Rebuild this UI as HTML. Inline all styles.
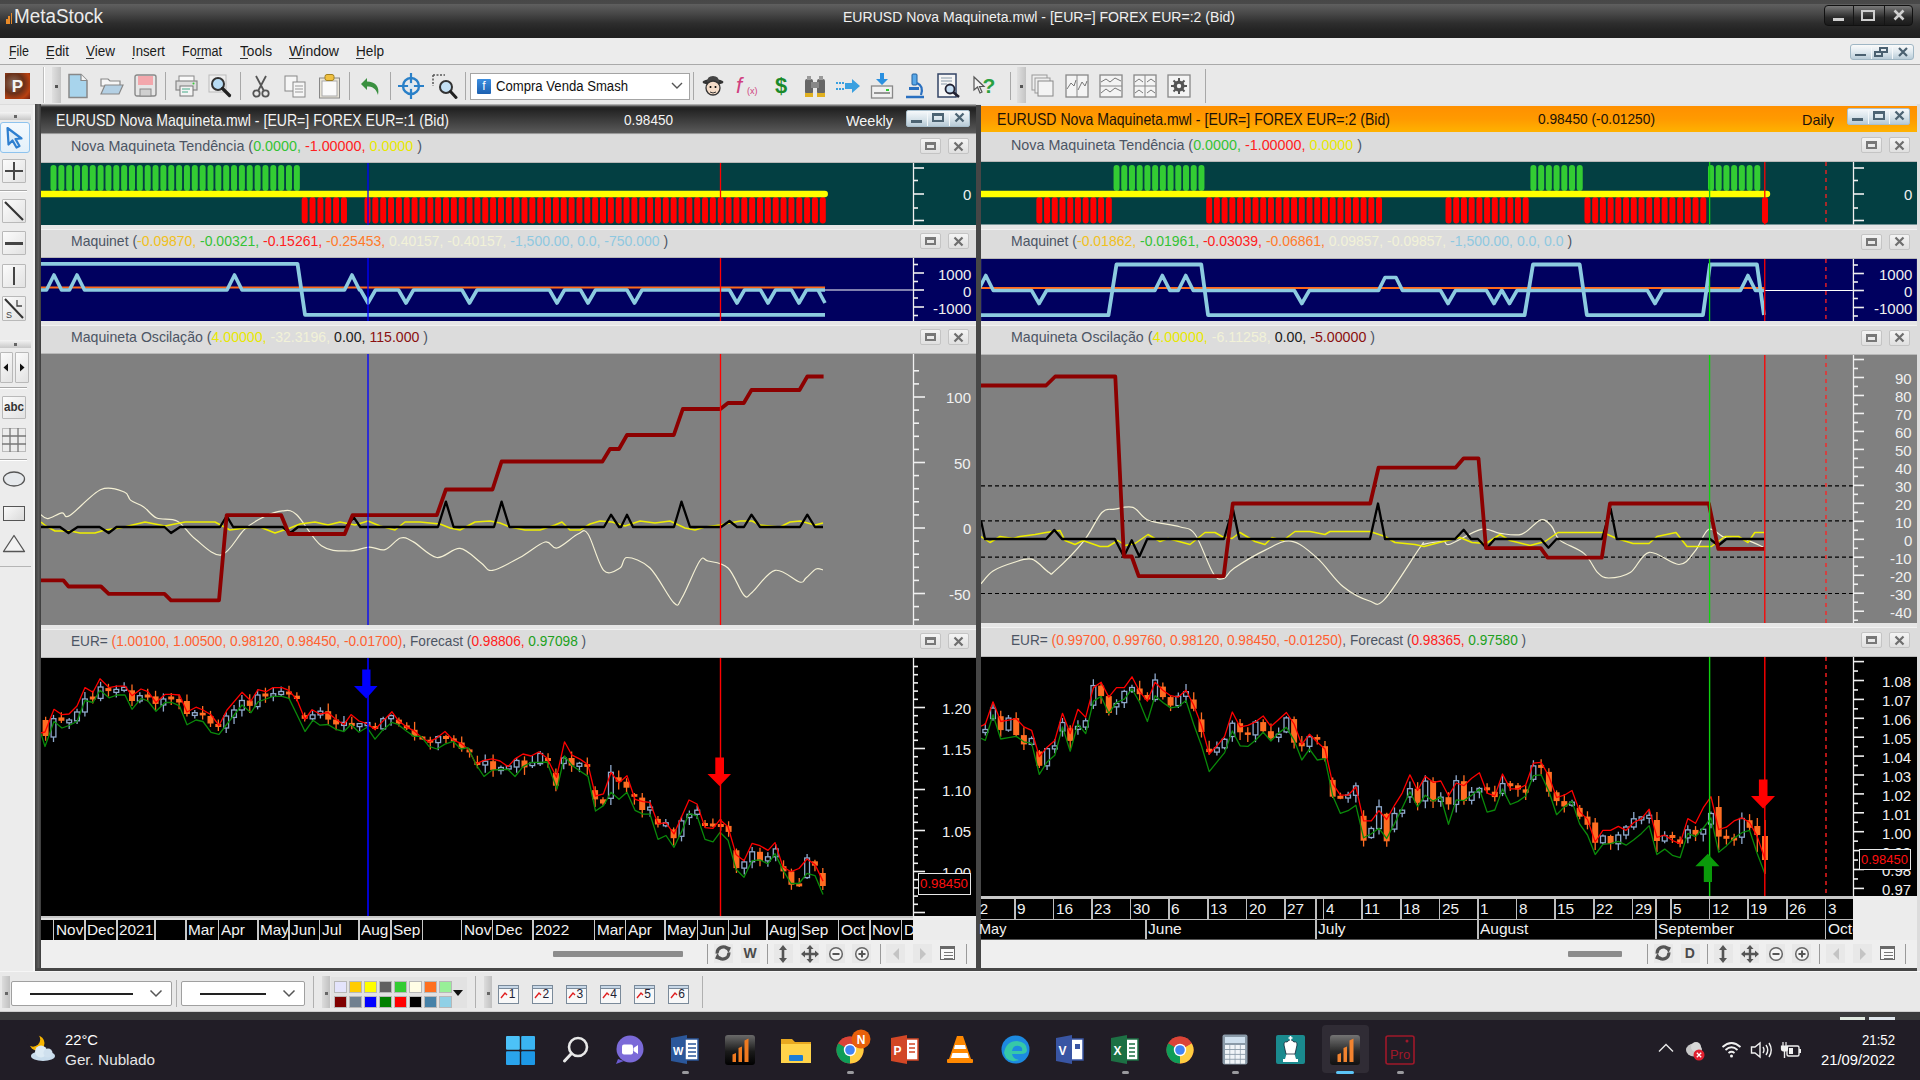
<!DOCTYPE html><html><head><meta charset="utf-8"><title>MetaStock</title><style>
html,body{margin:0;padding:0;}
body{width:1920px;height:1080px;overflow:hidden;position:relative;background:#e9e9e9;font-family:"Liberation Sans",sans-serif;}
.t{position:absolute;white-space:nowrap;}
.r{position:absolute;}
svg{position:absolute;overflow:hidden;}
.ic{position:absolute;}
</style></head><body>
<div class="r" style="left:0.00px;top:0.00px;width:1920.00px;height:38.00px;background:linear-gradient(#474747 0px,#494949 3.5px,#5e5e5e 4.5px,#4c4c4c 12px,#2e2e2e 23px,#242424 30px,#202020 38px);"></div>
<div class="r" style="left:6.00px;top:19.20px;width:1.50px;height:4.50px;background:#e88a28;"></div>
<div class="r" style="left:8.30px;top:16.20px;width:1.50px;height:7.50px;background:#e88a28;"></div>
<div class="r" style="left:10.60px;top:13.20px;width:1.50px;height:10.50px;background:#e88a28;"></div>
<div class="t" style="left:13.50px;top:5.10px;font-size:20.00px;line-height:23.00px;color:#ececec;transform:scaleX(0.9420);transform-origin:0 0;"><span style="color:#ececec">MetaStock</span></div>
<div class="t" style="left:843.00px;top:8.09px;font-size:15.50px;line-height:17.82px;color:#f0f0f0;transform:scaleX(0.9066);transform-origin:0 0;"><span style="color:#f0f0f0">EURUSD Nova Maquineta.mwl - [EUR=] FOREX EUR=:2 (Bid)</span></div>
<div class="r" style="left:1824.00px;top:5.00px;width:89.00px;height:21.00px;background:linear-gradient(#7a7a7a,#2a2a2a 60%,#1a1a1a);border:1px solid #111;border-radius:4px;box-sizing:border-box;"></div>
<div class="r" style="left:1853.00px;top:6.00px;width:1.00px;height:19.00px;background:#151515;"></div>
<div class="r" style="left:1884.00px;top:6.00px;width:1.00px;height:19.00px;background:#151515;"></div>
<div class="r" style="left:1833.00px;top:18.00px;width:11.00px;height:3.00px;background:#cfcfcf;"></div>
<div class="r" style="left:1861.00px;top:10.00px;width:14.00px;height:11.00px;background:transparent;border:2.5px solid #cfcfcf;box-sizing:border-box;"></div>
<svg style="left:1893px;top:9px" width="12" height="12" viewBox="0 0 12 12"><path d="M1.5 1.5L10.5 10.5M10.5 1.5L1.5 10.5" stroke="#d0d0d0" stroke-width="2.6"/></svg>
<div class="r" style="left:0.00px;top:38.00px;width:1920.00px;height:26.00px;background:#ececec;"></div>
<div class="r" style="left:0.00px;top:64.00px;width:1920.00px;height:1.00px;background:#a9a9a9;"></div>
<div class="t" style="left:9.00px;top:42.95px;font-size:14.00px;line-height:16.10px;color:#1a1a1a;transform:scaleX(0.8865);transform-origin:0 0;"><span style="color:#1a1a1a">File</span></div>
<div class="t" style="left:46.00px;top:42.95px;font-size:14.00px;line-height:16.10px;color:#1a1a1a;transform:scaleX(0.9534);transform-origin:0 0;"><span style="color:#1a1a1a">Edit</span></div>
<div class="t" style="left:86.00px;top:42.95px;font-size:14.00px;line-height:16.10px;color:#1a1a1a;transform:scaleX(0.9637);transform-origin:0 0;"><span style="color:#1a1a1a">View</span></div>
<div class="t" style="left:132.00px;top:42.95px;font-size:14.00px;line-height:16.10px;color:#1a1a1a;transform:scaleX(0.9425);transform-origin:0 0;"><span style="color:#1a1a1a">Insert</span></div>
<div class="t" style="left:182.00px;top:42.95px;font-size:14.00px;line-height:16.10px;color:#1a1a1a;transform:scaleX(0.9021);transform-origin:0 0;"><span style="color:#1a1a1a">Format</span></div>
<div class="t" style="left:240.00px;top:42.95px;font-size:14.00px;line-height:16.10px;color:#1a1a1a;transform:scaleX(0.9791);transform-origin:0 0;"><span style="color:#1a1a1a">Tools</span></div>
<div class="t" style="left:289.00px;top:42.95px;font-size:14.00px;line-height:16.10px;color:#1a1a1a;transform:scaleX(1.0041);transform-origin:0 0;"><span style="color:#1a1a1a">Window</span></div>
<div class="t" style="left:356.00px;top:42.95px;font-size:14.00px;line-height:16.10px;color:#1a1a1a;transform:scaleX(0.9724);transform-origin:0 0;"><span style="color:#1a1a1a">Help</span></div>
<div class="r" style="left:9.00px;top:58.00px;width:7.00px;height:1.00px;background:#333;"></div>
<div class="r" style="left:46.00px;top:58.00px;width:8.00px;height:1.00px;background:#333;"></div>
<div class="r" style="left:86.00px;top:58.00px;width:8.00px;height:1.00px;background:#333;"></div>
<div class="r" style="left:132.00px;top:58.00px;width:2.00px;height:1.00px;background:#333;"></div>
<div class="r" style="left:196.00px;top:58.00px;width:8.00px;height:1.00px;background:#333;"></div>
<div class="r" style="left:240.00px;top:58.00px;width:8.00px;height:1.00px;background:#333;"></div>
<div class="r" style="left:289.00px;top:58.00px;width:14.00px;height:1.00px;background:#333;"></div>
<div class="r" style="left:356.00px;top:58.00px;width:8.00px;height:1.00px;background:#333;"></div>
<div class="r" style="left:1850.00px;top:44.00px;width:64.00px;height:16.00px;background:linear-gradient(#fafafa,#dfe9ef 50%,#b9ccd8);border:1px solid #9fb6c4;border-radius:3px;box-sizing:border-box;"></div>
<div class="r" style="left:1871.00px;top:45.00px;width:1.00px;height:14.00px;background:#f4f8fa;"></div>
<div class="r" style="left:1892.00px;top:45.00px;width:1.00px;height:14.00px;background:#f4f8fa;"></div>
<div class="r" style="left:1855.00px;top:54.00px;width:11.00px;height:2.00px;background:#4a6070;"></div>
<div class="r" style="left:1874.00px;top:51.00px;width:9.00px;height:6.00px;background:transparent;border:2px solid #4a6070;box-sizing:border-box;"></div>
<div class="r" style="left:1879.00px;top:47.00px;width:9.00px;height:6.00px;background:transparent;border:2px solid #4a6070;box-sizing:border-box;"></div>
<svg style="left:1898px;top:47px" width="10" height="10" viewBox="0 0 10 10"><path d="M1 1L9 9M9 1L1 9" stroke="#4a6070" stroke-width="2.2"/></svg>
<div class="r" style="left:0.00px;top:65.00px;width:1920.00px;height:40.00px;background:#e9e9e9;"></div>
<div class="r" style="left:0.00px;top:104.00px;width:1920.00px;height:1.00px;background:#dcdcdc;"></div>
<div class="r" style="left:5.00px;top:73.00px;width:25.00px;height:26.00px;background:radial-gradient(circle at 35% 40%,#8a7060,#6a3018 45%,#b84010 75%,#702010);"></div>
<div class="t" style="left:11.83px;top:76.72px;font-size:17.00px;line-height:19.55px;color:#f4f4f4;font-weight:bold;"><span style="color:#f4f4f4">P</span></div>
<div class="r" style="left:43.00px;top:67.00px;width:1.00px;height:36.00px;background:#bdbdbd;"></div>
<div class="r" style="left:44.00px;top:67.00px;width:1.00px;height:36.00px;background:#fff;"></div>
<div class="r" style="left:52.00px;top:67.00px;width:9.00px;height:36.00px;background:linear-gradient(90deg,#e0e0e0,#c4c4c4);"></div>
<div class="r" style="left:55.00px;top:85.00px;width:3.00px;height:3.00px;background:#555;"></div>
<div class="r" style="left:165.00px;top:72.00px;width:1.00px;height:28.00px;background:#a8a8a8;"></div>
<div class="r" style="left:240.00px;top:72.00px;width:1.00px;height:28.00px;background:#a8a8a8;"></div>
<div class="r" style="left:349.00px;top:72.00px;width:1.00px;height:28.00px;background:#a8a8a8;"></div>
<div class="r" style="left:390.00px;top:72.00px;width:1.00px;height:28.00px;background:#a8a8a8;"></div>
<div class="r" style="left:465.00px;top:72.00px;width:1.00px;height:28.00px;background:#a8a8a8;"></div>
<div class="r" style="left:693.00px;top:72.00px;width:1.00px;height:28.00px;background:#a8a8a8;"></div>
<div class="r" style="left:1010.00px;top:72.00px;width:1.00px;height:28.00px;background:#a8a8a8;"></div>
<svg style="left:67px;top:73px" width="22" height="26" viewBox="0 0 22 26"><path d="M2 1.5H14L20 7.5V24.5H2Z" fill="#a8d4ec" stroke="#888" stroke-width="1.5"/><path d="M14 1.5V7.5H20" fill="#f4f4f4" stroke="#888" stroke-width="1.2"/></svg>
<svg style="left:100px;top:76px" width="24" height="20" viewBox="0 0 24 20"><path d="M1 3H8L10 5H20V10H1Z" fill="#f6f6f6" stroke="#888" stroke-width="1.2"/><path d="M1 18L5 9H23L19 18Z" fill="#b4d0e4" stroke="#888" stroke-width="1.2"/></svg>
<svg style="left:134px;top:74px" width="23" height="23" viewBox="0 0 23 23"><rect x="1" y="1" width="21" height="21" rx="2" fill="#e6e6e6" stroke="#888" stroke-width="1.4"/><rect x="4" y="2" width="15" height="9" fill="#f3a7ac"/><rect x="6" y="15" width="11" height="7" fill="#cfcfcf" stroke="#888"/></svg>
<svg style="left:175px;top:75px" width="23" height="22" viewBox="0 0 23 22"><rect x="4" y="1" width="15" height="6" fill="#fafafa" stroke="#888"/><rect x="1" y="6" width="21" height="9" fill="#dcdcdc" stroke="#888" stroke-width="1.2"/><rect x="5" y="11" width="13" height="10" fill="#f4f4f4" stroke="#777"/><path d="M7 14H15M7 17H13" stroke="#4a8" stroke-width="1"/><circle cx="18.5" cy="8.5" r="1" fill="#3c3"/></svg>
<svg style="left:208px;top:74px" width="24" height="24" viewBox="0 0 24 24"><rect x="1" y="1" width="17" height="17" fill="#eee" stroke="#bbb"/><circle cx="10" cy="10" r="6" fill="#b8dcf4" stroke="#333" stroke-width="2"/><path d="M14.5 14.5L21.5 21.5" stroke="#222" stroke-width="3.2" stroke-linecap="round"/></svg>
<svg style="left:251px;top:74px" width="20" height="24" viewBox="0 0 20 24"><path d="M5 2L13 17M15 2L7 17" stroke="#555" stroke-width="1.8"/><circle cx="5.5" cy="19.5" r="3.2" fill="none" stroke="#555" stroke-width="1.8"/><circle cx="14.5" cy="19.5" r="3.2" fill="none" stroke="#555" stroke-width="1.8"/></svg>
<svg style="left:284px;top:75px" width="23" height="23" viewBox="0 0 23 23"><rect x="1" y="1" width="12" height="15" fill="#f6f6f6" stroke="#888"/><rect x="9" y="7" width="12" height="15" fill="#f6f6f6" stroke="#888"/><path d="M11 11H19M11 14H19M11 17H19" stroke="#999"/></svg>
<svg style="left:318px;top:73px" width="23" height="26" viewBox="0 0 23 26"><rect x="1.5" y="5" width="20" height="20" fill="#e8e4d8" stroke="#888"/><rect x="4" y="8" width="15" height="15" fill="#fafafa" stroke="#aaa"/><rect x="7" y="1.5" width="9" height="6" rx="2" fill="#f0c040" stroke="#a08020"/></svg>
<svg style="left:360px;top:77px" width="22" height="20" viewBox="0 0 22 20"><path d="M7 1L1 7L7 13V9.5C12 9.5 16 11 18 18C20 9 15 5 7 4.5Z" fill="#3a9040"/></svg>
<svg style="left:398px;top:73px" width="26" height="26" viewBox="0 0 26 26"><circle cx="13" cy="13" r="8" fill="none" stroke="#2a80c8" stroke-width="2.4"/><path d="M13 0V26M0 13H26" stroke="#2a80c8" stroke-width="2.2"/><circle cx="13" cy="13" r="3" fill="#d8e8f4"/></svg>
<svg style="left:432px;top:74px" width="26" height="26" viewBox="0 0 26 26"><path d="M1 1H13M1 1V12" stroke="#555" stroke-width="1.5" stroke-dasharray="2 1.5"/><circle cx="14" cy="13" r="6" fill="#c4e0f4" stroke="#333" stroke-width="2"/><path d="M18.5 17.5L24 23.5" stroke="#222" stroke-width="3" stroke-linecap="round"/></svg>
<div class="r" style="left:470.00px;top:73.00px;width:220.00px;height:27.00px;background:#ffffff;border:1px solid #a4a4a4;box-sizing:border-box;"></div>
<div class="r" style="left:477.00px;top:79.00px;width:14.00px;height:15.00px;background:linear-gradient(#3c8ee0,#1c60b0);border-radius:1px;"></div>
<div class="t" style="left:482.33px;top:79.60px;font-size:12.00px;line-height:13.80px;color:#fff;"><span style="color:#fff">f</span></div>
<div class="t" style="left:496.00px;top:78.45px;font-size:14.00px;line-height:16.10px;color:#111;transform:scaleX(0.9371);transform-origin:0 0;"><span style="color:#111">Compra Venda Smash</span></div>
<svg style="left:671px;top:82px" width="12" height="8" viewBox="0 0 12 8"><path d="M1 1L6 6L11 1" stroke="#555" stroke-width="1.4" fill="none"/></svg>
<svg style="left:702px;top:74px" width="22" height="24" viewBox="0 0 22 24"><ellipse cx="11" cy="8" rx="10.5" ry="3" fill="#333"/><path d="M5 8Q5 2 11 2Q17 2 17 8Z" fill="#444"/><circle cx="11" cy="14" r="7" fill="#f4dcc8" stroke="#333" stroke-width="1.3"/><circle cx="8.5" cy="13" r="1" fill="#000"/><circle cx="13.5" cy="13" r="1" fill="#000"/><path d="M8 18Q11 20 14 18" stroke="#333" fill="none"/></svg>
<div class="t" style="left:736.00px;top:73.35px;font-size:22.00px;line-height:25.30px;color:#d04080;font-style:italic;font-family:"Liberation Serif",serif;"><span style="color:#d04080">f</span></div>
<div class="t" style="left:747.00px;top:85.83px;font-size:9.00px;line-height:10.35px;color:#d04080;"><span style="color:#d04080">(x)</span></div>
<div class="t" style="left:774.88px;top:73.35px;font-size:22.00px;line-height:25.30px;color:#1a8a2a;font-weight:bold;"><span style="color:#1a8a2a">$</span></div>
<svg style="left:803px;top:74px" width="24" height="24" viewBox="0 0 24 24"><rect x="2" y="5" width="8" height="15" rx="2" fill="#666"/><rect x="14" y="5" width="8" height="15" rx="2" fill="#666"/><rect x="8" y="8" width="8" height="6" fill="#888"/><rect x="2" y="19" width="8" height="4" fill="#e0b020"/><rect x="14" y="19" width="8" height="4" fill="#e0b020"/><rect x="4" y="2" width="4" height="4" fill="#999"/><rect x="16" y="2" width="4" height="4" fill="#999"/></svg>
<svg style="left:835px;top:78px" width="26" height="16" viewBox="0 0 26 16"><path d="M1 5H3M4 5H6M7 5H9M1 11H3M4 11H6M7 11H9" stroke="#3aa0e0" stroke-width="2"/><path d="M10 5H17V1L25 8L17 15V11H10Z" fill="#3aa0e0"/></svg>
<svg style="left:870px;top:72px" width="24" height="28" viewBox="0 0 24 28"><path d="M10 1H14V7H18L12 13L6 7H10Z" fill="#2a90e0"/><rect x="1.5" y="14" width="21" height="12" fill="#f0f0f0" stroke="#888" stroke-width="1.3"/><path d="M4 21H20" stroke="#777" stroke-width="1.5"/><rect x="16" y="17" width="3" height="2" fill="#3c3"/></svg>
<svg style="left:903px;top:73px" width="24" height="26" viewBox="0 0 24 26"><rect x="9" y="1" width="5" height="11" rx="1" fill="#5aa8e8" stroke="#2060a0"/><path d="M3 24H21" stroke="#2a70c0" stroke-width="2.5"/><path d="M14 10Q21 13 18 22" stroke="#2a70c0" stroke-width="2.2" fill="none"/><rect x="6" y="14" width="10" height="3" fill="#2a70c0"/></svg>
<svg style="left:937px;top:73px" width="25" height="26" viewBox="0 0 25 26"><rect x="1" y="1" width="18" height="23" fill="#f6f6f6" stroke="#346" stroke-width="1.5"/><path d="M4 5H15M4 8H15M4 11H10" stroke="#89a" stroke-width="1.2"/><circle cx="13" cy="16" r="4.5" fill="#c8e0f4" stroke="#223" stroke-width="1.8"/><path d="M16 19L22 24" stroke="#223" stroke-width="2.6"/></svg>
<svg style="left:972px;top:75px" width="26" height="22" viewBox="0 0 26 22"><path d="M2 2L2 15L5.5 12L8 18L10 17L7.5 11.5H12Z" fill="#f4f4f4" stroke="#555" stroke-width="1.2"/></svg>
<div class="t" style="left:982.59px;top:73.92px;font-size:21.00px;line-height:24.15px;color:#2aa040;font-weight:bold;"><span style="color:#2aa040">?</span></div>
<div class="r" style="left:1017.00px;top:67.00px;width:9.00px;height:36.00px;background:linear-gradient(90deg,#e0e0e0,#c4c4c4);"></div>
<div class="r" style="left:1020.00px;top:85.00px;width:3.00px;height:3.00px;background:#555;"></div>
<svg style="left:1031px;top:74px" width="24" height="24" viewBox="0 0 24 24"><rect x="1" y="1" width="15" height="15" fill="#eee" stroke="#999"/><rect x="4" y="4" width="15" height="15" fill="#eee" stroke="#999"/><rect x="7" y="7" width="15" height="15" fill="#f4f4f4" stroke="#888"/></svg>
<svg style="left:1065px;top:74px" width="24" height="24" viewBox="0 0 24 24"><rect x="1" y="1" width="22" height="22" fill="#f4f4f4" stroke="#888" stroke-width="1.3"/><path d="M12 1V23" stroke="#888"/><path d="M2 15L6 9L9 12L11 6M13 16L17 8L20 12L22 7" stroke="#777" fill="none"/></svg>
<svg style="left:1099px;top:74px" width="24" height="24" viewBox="0 0 24 24"><rect x="1" y="1" width="22" height="22" fill="#f4f4f4" stroke="#888" stroke-width="1.3"/><path d="M1 12H23" stroke="#888"/><path d="M2 8L7 5L11 8L16 4L22 7M2 19L7 15L11 18L16 14L22 17" stroke="#777" fill="none"/></svg>
<svg style="left:1133px;top:74px" width="24" height="24" viewBox="0 0 24 24"><rect x="1" y="1" width="22" height="22" fill="#f4f4f4" stroke="#888" stroke-width="1.3"/><path d="M12 1V23M1 12H23" stroke="#888"/><path d="M2 8L6 5L10 8M14 8L18 5L22 8M2 19L6 16L10 19M14 19L18 16L22 19" stroke="#777" fill="none"/></svg>
<svg style="left:1167px;top:74px" width="24" height="24" viewBox="0 0 24 24"><rect x="1" y="1" width="22" height="22" fill="#f4f4f4" stroke="#888" stroke-width="1.3"/><circle cx="12" cy="12" r="5.5" fill="#555"/><circle cx="12" cy="12" r="2.2" fill="#f4f4f4"/><path d="M12 4V20M4 12H20M6.5 6.5L17.5 17.5M17.5 6.5L6.5 17.5" stroke="#555" stroke-width="2"/><circle cx="12" cy="12" r="2.2" fill="#f4f4f4"/></svg>
<div class="r" style="left:1205.00px;top:69.00px;width:1.00px;height:34.00px;background:#a8a8a8;"></div>
<div class="r" style="left:0.00px;top:105.00px;width:35.00px;height:866.00px;background:#ececec;"></div>
<div class="r" style="left:33.00px;top:105.00px;width:2.00px;height:866.00px;background:#f6f6f6;"></div>
<div class="r" style="left:0.00px;top:112.00px;width:31.00px;height:8.00px;background:linear-gradient(#f4f4f4,#c8c8c8);"></div>
<div class="r" style="left:14.00px;top:114.50px;width:3.00px;height:3.00px;background:#666;"></div>
<div class="r" style="left:0.00px;top:340.00px;width:31.00px;height:8.00px;background:linear-gradient(#f4f4f4,#c8c8c8);"></div>
<div class="r" style="left:14.00px;top:342.50px;width:3.00px;height:3.00px;background:#666;"></div>
<div class="r" style="left:0.00px;top:122.00px;width:30.00px;height:31.00px;background:linear-gradient(#f4f9fd,#e3f0fa);border:1px solid #8ec3ee;box-sizing:border-box;border-radius:3px;"></div>
<svg style="left:5px;top:126px" width="20" height="23" viewBox="0 0 20 23"><path d="M2.5 2L16.5 12.5L10.5 13L14.5 20L11.5 21.5L7.5 14.5L3.5 18.5Z" fill="#dcecf8" stroke="#2e7fd0" stroke-width="2.2" stroke-linejoin="round"/></svg>
<div class="r" style="left:2.00px;top:159.00px;width:24.00px;height:24.00px;background:linear-gradient(135deg,#fbfbfb,#e2e2e2);border:1px solid #b9b9b9;box-sizing:border-box;border-radius:1px;"></div>
<div class="r" style="left:5.00px;top:169.50px;width:18.00px;height:2.60px;background:#474747;"></div>
<div class="r" style="left:12.70px;top:162.00px;width:2.60px;height:18.00px;background:#474747;"></div>
<div class="r" style="left:0.00px;top:190.00px;width:27.00px;height:1.00px;background:#a8a8a8;"></div>
<div class="r" style="left:0.00px;top:191.00px;width:27.00px;height:1.00px;background:#fff;"></div>
<div class="r" style="left:2.00px;top:199.00px;width:24.00px;height:24.00px;background:linear-gradient(135deg,#fbfbfb,#e2e2e2);border:1px solid #b9b9b9;box-sizing:border-box;border-radius:1px;"></div>
<svg style="left:2px;top:199px" width="24" height="24" viewBox="0 0 24 24"><path d="M3 3L21 21" stroke="#333" stroke-width="2.2"/></svg>
<div class="r" style="left:2.00px;top:231.00px;width:24.00px;height:24.00px;background:linear-gradient(135deg,#fbfbfb,#e2e2e2);border:1px solid #b9b9b9;box-sizing:border-box;border-radius:1px;"></div>
<div class="r" style="left:5.00px;top:242.00px;width:18.00px;height:2.80px;background:#444;"></div>
<div class="r" style="left:2.00px;top:264.00px;width:24.00px;height:24.00px;background:linear-gradient(135deg,#fbfbfb,#e2e2e2);border:1px solid #b9b9b9;box-sizing:border-box;border-radius:1px;"></div>
<div class="r" style="left:12.60px;top:267.00px;width:2.80px;height:18.00px;background:#444;"></div>
<div class="r" style="left:2.00px;top:296.00px;width:24.00px;height:25.00px;background:linear-gradient(135deg,#fbfbfb,#e2e2e2);border:1px solid #b9b9b9;box-sizing:border-box;border-radius:1px;"></div>
<svg style="left:2px;top:296px" width="24" height="25" viewBox="0 0 24 25"><path d="M3 3L21 22" stroke="#333" stroke-width="2"/><path d="M15 4V10H20" stroke="#444" stroke-width="1.3" fill="none"/><text x="4" y="22" font-size="9" font-family="Liberation Sans" fill="#444">S</text></svg>
<div class="r" style="left:0.00px;top:352.00px;width:13.00px;height:31.00px;background:linear-gradient(135deg,#fbfbfb,#e2e2e2);border:1px solid #b9b9b9;box-sizing:border-box;border-radius:1px;"></div>
<div class="r" style="left:15.00px;top:352.00px;width:14.00px;height:31.00px;background:linear-gradient(135deg,#fbfbfb,#e2e2e2);border:1px solid #b9b9b9;box-sizing:border-box;border-radius:1px;"></div>
<svg style="left:0px;top:352px" width="30" height="31" viewBox="0 0 30 31"><path d="M8 11.5V19.5L3.5 15.5Z" fill="#111"/><path d="M20 11.5V19.5L24.5 15.5Z" fill="#111"/></svg>
<div class="r" style="left:0.00px;top:387.00px;width:27.00px;height:1.00px;background:#a8a8a8;"></div>
<div class="r" style="left:0.00px;top:388.00px;width:27.00px;height:1.00px;background:#fff;"></div>
<div class="r" style="left:2.00px;top:396.00px;width:24.00px;height:23.00px;background:linear-gradient(135deg,#fbfbfb,#e2e2e2);border:1px solid #b9b9b9;box-sizing:border-box;border-radius:1px;"></div>
<div class="t" style="left:4.00px;top:400.02px;font-size:13.00px;line-height:14.95px;color:#333;font-weight:bold;transform:scaleX(0.8928);transform-origin:0 0;"><span style="color:#333">abc</span></div>
<svg style="left:2px;top:428px" width="24" height="24" viewBox="0 0 24 24"><rect x="0.5" y="0.5" width="23" height="23" fill="#ececec" stroke="#bbb"/><path d="M8 0V24M16 0V24M0 8H24M0 16H24" stroke="#777" stroke-width="1.3"/></svg>
<div class="r" style="left:0.00px;top:459.00px;width:27.00px;height:1.00px;background:#a8a8a8;"></div>
<div class="r" style="left:0.00px;top:460.00px;width:27.00px;height:1.00px;background:#fff;"></div>
<svg style="left:2px;top:470px" width="24" height="18" viewBox="0 0 24 18"><ellipse cx="12" cy="9" rx="10.5" ry="7" fill="#e6e9ec" stroke="#555" stroke-width="1.3"/></svg>
<div class="r" style="left:3.00px;top:505.50px;width:22.00px;height:15.00px;background:linear-gradient(135deg,#fafafa,#dadada);border:1.3px solid #555;box-sizing:border-box;"></div>
<svg style="left:2px;top:534px" width="24" height="19" viewBox="0 0 24 19"><path d="M12 1.5L22.5 17.5H1.5Z" fill="#f2f2f2" stroke="#555" stroke-width="1.3" stroke-linejoin="round"/></svg>
<div class="r" style="left:0.00px;top:566.00px;width:31.00px;height:1.00px;background:#b5b5b5;"></div>
<div class="r" style="left:35.00px;top:104.00px;width:6.00px;height:867.00px;background:linear-gradient(90deg,#3e3e3e,#5c5c5c 60%,#3a3a3a);"></div>
<div class="r" style="left:976.00px;top:105.00px;width:5.00px;height:866.00px;background:#464646;"></div>
<div class="r" style="left:35.00px;top:968.00px;width:946.00px;height:3.00px;background:#464646;"></div>
<div class="r" style="left:981.00px;top:968.00px;width:939.00px;height:3.00px;background:#464646;"></div>
<div class="r" style="left:1917.00px;top:104.00px;width:3.00px;height:867.00px;background:#dcdcdc;"></div>
<div class="r" style="left:41.00px;top:104.00px;width:935.00px;height:31.00px;background:linear-gradient(#c8c8c8 0px,#2a2a2a 3px,#222 5px,#3c3c3c 16px,#5a5a5a 29px,#d8d8d8 30px);"></div>
<div class="t" style="left:56.00px;top:110.51px;font-size:16.50px;line-height:18.97px;color:#f4f4f4;transform:scaleX(0.8538);transform-origin:0 0;"><span style="color:#f4f4f4">EURUSD Nova Maquineta.mwl - [EUR=] FOREX EUR=:1 (Bid)</span></div>
<div class="t" style="left:624.00px;top:111.38px;font-size:15.00px;line-height:17.25px;color:#f4f4f4;transform:scaleX(0.9037);transform-origin:0 0;"><span style="color:#f4f4f4">0.98450</span></div>
<div class="t" style="left:846.00px;top:112.38px;font-size:15.00px;line-height:17.25px;color:#f4f4f4;transform:scaleX(0.9611);transform-origin:0 0;"><span style="color:#f4f4f4">Weekly</span></div>
<div class="r" style="left:906.00px;top:110.00px;width:64.00px;height:17.00px;background:linear-gradient(#f6f9fb,#d7e3ea 55%,#b7cad6);border:1px solid #a9bfcc;box-sizing:border-box;border-radius:2px;"></div>
<div class="r" style="left:927.00px;top:111.00px;width:1.00px;height:15.00px;background:#f4f8fa;"></div>
<div class="r" style="left:949.00px;top:111.00px;width:1.00px;height:15.00px;background:#f4f8fa;"></div>
<div class="r" style="left:911.00px;top:120.00px;width:11.00px;height:3.00px;background:#4d6473;"></div>
<div class="r" style="left:932.00px;top:113.00px;width:12.00px;height:9.00px;background:transparent;border:2px solid #4d6473;border-top-width:3px;box-sizing:border-box;"></div>
<svg style="left:954px;top:112px" width="11" height="11" viewBox="0 0 11 11"><path d="M1.5 1.5L9.5 9.5M9.5 1.5L1.5 9.5" stroke="#4d6473" stroke-width="2.3"/></svg>
<div class="r" style="left:41.00px;top:135.00px;width:935.00px;height:28.00px;background:#dcdcdc;"></div>
<div class="r" style="left:41.00px;top:162.00px;width:935.00px;height:1.00px;background:#b8b8b8;"></div>
<div class="t" style="left:71.00px;top:137.66px;font-size:14.50px;line-height:16.67px;color:#4c5564;transform:scaleX(0.9881);transform-origin:0 0;">Nova Maquineta Tendência (<span style="color:#34c234">0.0000, </span><span style="color:#ff2020">-1.00000, </span><span style="color:#e8e800">0.0000 </span>)</div>
<div class="r" style="left:920.00px;top:138.00px;width:21.00px;height:16.00px;background:linear-gradient(#f4f4f4,#e0e0e0);border:1px solid #c4c4c4;box-sizing:border-box;border-radius:2px;"></div>
<div class="r" style="left:947.50px;top:138.00px;width:21.00px;height:16.00px;background:linear-gradient(#f4f4f4,#e0e0e0);border:1px solid #c4c4c4;box-sizing:border-box;border-radius:2px;"></div>
<div class="r" style="left:925.00px;top:142.00px;width:11.00px;height:8.00px;background:transparent;border:2px solid #777;border-top-width:3px;box-sizing:border-box;"></div>
<svg style="left:952.5px;top:140.5px" width="11" height="11" viewBox="0 0 11 11"><path d="M1.5 1.5L9.5 9.5M9.5 1.5L1.5 9.5" stroke="#6e6e6e" stroke-width="2.2"/></svg>
<div class="r" style="left:41.00px;top:225.00px;width:935.00px;height:33.00px;background:#dcdcdc;"></div>
<div class="r" style="left:41.00px;top:225.00px;width:935.00px;height:4.00px;background:#e6e6e6;"></div>
<div class="r" style="left:41.00px;top:229.00px;width:935.00px;height:1.00px;background:#f2f2f2;"></div>
<div class="r" style="left:41.00px;top:257.00px;width:935.00px;height:1.00px;background:#b8b8b8;"></div>
<div class="t" style="left:71.00px;top:232.66px;font-size:14.50px;line-height:16.67px;color:#4c5564;transform:scaleX(0.9643);transform-origin:0 0;">Maquinet (<span style="color:#f0c020">-0.09870, </span><span style="color:#34c234">-0.00321, </span><span style="color:#ff2020">-0.15261, </span><span style="color:#ff7a2a">-0.25453, </span><span style="color:#f2f2d8">0.40157, </span><span style="color:#f2f2d8">-0.40157, </span><span style="color:#8fc8e0">-1,500.00, 0.0, -750.000 </span>)</div>
<div class="r" style="left:920.00px;top:233.00px;width:21.00px;height:16.00px;background:linear-gradient(#f4f4f4,#e0e0e0);border:1px solid #c4c4c4;box-sizing:border-box;border-radius:2px;"></div>
<div class="r" style="left:947.50px;top:233.00px;width:21.00px;height:16.00px;background:linear-gradient(#f4f4f4,#e0e0e0);border:1px solid #c4c4c4;box-sizing:border-box;border-radius:2px;"></div>
<div class="r" style="left:925.00px;top:237.00px;width:11.00px;height:8.00px;background:transparent;border:2px solid #777;border-top-width:3px;box-sizing:border-box;"></div>
<svg style="left:952.5px;top:235.5px" width="11" height="11" viewBox="0 0 11 11"><path d="M1.5 1.5L9.5 9.5M9.5 1.5L1.5 9.5" stroke="#6e6e6e" stroke-width="2.2"/></svg>
<div class="r" style="left:41.00px;top:321.00px;width:935.00px;height:33.00px;background:#dcdcdc;"></div>
<div class="r" style="left:41.00px;top:321.00px;width:935.00px;height:4.00px;background:#e6e6e6;"></div>
<div class="r" style="left:41.00px;top:325.00px;width:935.00px;height:1.00px;background:#f2f2f2;"></div>
<div class="r" style="left:41.00px;top:353.00px;width:935.00px;height:1.00px;background:#b8b8b8;"></div>
<div class="t" style="left:71.00px;top:328.66px;font-size:14.50px;line-height:16.67px;color:#4c5564;transform:scaleX(0.9740);transform-origin:0 0;">Maquineta Oscilação (<span style="color:#e8e800">4.00000, </span><span style="color:#f2f2d8">-32.3196, </span><span style="color:#202020">0.00, </span><span style="color:#8a1010">115.000 </span>)</div>
<div class="r" style="left:920.00px;top:329.00px;width:21.00px;height:16.00px;background:linear-gradient(#f4f4f4,#e0e0e0);border:1px solid #c4c4c4;box-sizing:border-box;border-radius:2px;"></div>
<div class="r" style="left:947.50px;top:329.00px;width:21.00px;height:16.00px;background:linear-gradient(#f4f4f4,#e0e0e0);border:1px solid #c4c4c4;box-sizing:border-box;border-radius:2px;"></div>
<div class="r" style="left:925.00px;top:333.00px;width:11.00px;height:8.00px;background:transparent;border:2px solid #777;border-top-width:3px;box-sizing:border-box;"></div>
<svg style="left:952.5px;top:331.5px" width="11" height="11" viewBox="0 0 11 11"><path d="M1.5 1.5L9.5 9.5M9.5 1.5L1.5 9.5" stroke="#6e6e6e" stroke-width="2.2"/></svg>
<div class="r" style="left:41.00px;top:625.00px;width:935.00px;height:33.00px;background:#dcdcdc;"></div>
<div class="r" style="left:41.00px;top:625.00px;width:935.00px;height:4.00px;background:#e6e6e6;"></div>
<div class="r" style="left:41.00px;top:629.00px;width:935.00px;height:1.00px;background:#f2f2f2;"></div>
<div class="r" style="left:41.00px;top:657.00px;width:935.00px;height:1.00px;background:#b8b8b8;"></div>
<div class="t" style="left:71.00px;top:632.66px;font-size:14.50px;line-height:16.67px;color:#4c5564;transform:scaleX(0.9416);transform-origin:0 0;">EUR= <span style="color:#ff6030">(1.00100, 1.00500, 0.98120, 0.98450, -0.01700)</span>, Forecast (<span style="color:#ff2020">0.98806, </span><span style="color:#20a020">0.97098 </span>)</div>
<div class="r" style="left:920.00px;top:633.00px;width:21.00px;height:16.00px;background:linear-gradient(#f4f4f4,#e0e0e0);border:1px solid #c4c4c4;box-sizing:border-box;border-radius:2px;"></div>
<div class="r" style="left:947.50px;top:633.00px;width:21.00px;height:16.00px;background:linear-gradient(#f4f4f4,#e0e0e0);border:1px solid #c4c4c4;box-sizing:border-box;border-radius:2px;"></div>
<div class="r" style="left:925.00px;top:637.00px;width:11.00px;height:8.00px;background:transparent;border:2px solid #777;border-top-width:3px;box-sizing:border-box;"></div>
<svg style="left:952.5px;top:635.5px" width="11" height="11" viewBox="0 0 11 11"><path d="M1.5 1.5L9.5 9.5M9.5 1.5L1.5 9.5" stroke="#6e6e6e" stroke-width="2.2"/></svg>
<svg style="left:41px;top:163px" width="935" height="62" viewBox="41 163 935 62"><rect x="41" y="163" width="935" height="62" fill="#033f42"/>
<line x1="53.5" y1="168" x2="53.5" y2="188" stroke="#33cc33" stroke-width="6" stroke-linecap="round"/><line x1="61.35" y1="168" x2="61.35" y2="188" stroke="#33cc33" stroke-width="6" stroke-linecap="round"/><line x1="69.2" y1="168" x2="69.2" y2="188" stroke="#33cc33" stroke-width="6" stroke-linecap="round"/><line x1="77.05" y1="168" x2="77.05" y2="188" stroke="#33cc33" stroke-width="6" stroke-linecap="round"/><line x1="84.9" y1="168" x2="84.9" y2="188" stroke="#33cc33" stroke-width="6" stroke-linecap="round"/><line x1="92.75" y1="168" x2="92.75" y2="188" stroke="#33cc33" stroke-width="6" stroke-linecap="round"/><line x1="100.6" y1="168" x2="100.6" y2="188" stroke="#33cc33" stroke-width="6" stroke-linecap="round"/><line x1="108.45" y1="168" x2="108.45" y2="188" stroke="#33cc33" stroke-width="6" stroke-linecap="round"/><line x1="116.3" y1="168" x2="116.3" y2="188" stroke="#33cc33" stroke-width="6" stroke-linecap="round"/><line x1="124.15" y1="168" x2="124.15" y2="188" stroke="#33cc33" stroke-width="6" stroke-linecap="round"/><line x1="132" y1="168" x2="132" y2="188" stroke="#33cc33" stroke-width="6" stroke-linecap="round"/><line x1="139.85" y1="168" x2="139.85" y2="188" stroke="#33cc33" stroke-width="6" stroke-linecap="round"/><line x1="147.7" y1="168" x2="147.7" y2="188" stroke="#33cc33" stroke-width="6" stroke-linecap="round"/><line x1="155.55" y1="168" x2="155.55" y2="188" stroke="#33cc33" stroke-width="6" stroke-linecap="round"/><line x1="163.4" y1="168" x2="163.4" y2="188" stroke="#33cc33" stroke-width="6" stroke-linecap="round"/><line x1="171.25" y1="168" x2="171.25" y2="188" stroke="#33cc33" stroke-width="6" stroke-linecap="round"/><line x1="179.1" y1="168" x2="179.1" y2="188" stroke="#33cc33" stroke-width="6" stroke-linecap="round"/><line x1="186.95" y1="168" x2="186.95" y2="188" stroke="#33cc33" stroke-width="6" stroke-linecap="round"/><line x1="194.8" y1="168" x2="194.8" y2="188" stroke="#33cc33" stroke-width="6" stroke-linecap="round"/><line x1="202.65" y1="168" x2="202.65" y2="188" stroke="#33cc33" stroke-width="6" stroke-linecap="round"/><line x1="210.5" y1="168" x2="210.5" y2="188" stroke="#33cc33" stroke-width="6" stroke-linecap="round"/><line x1="218.35" y1="168" x2="218.35" y2="188" stroke="#33cc33" stroke-width="6" stroke-linecap="round"/><line x1="226.2" y1="168" x2="226.2" y2="188" stroke="#33cc33" stroke-width="6" stroke-linecap="round"/><line x1="234.05" y1="168" x2="234.05" y2="188" stroke="#33cc33" stroke-width="6" stroke-linecap="round"/><line x1="241.9" y1="168" x2="241.9" y2="188" stroke="#33cc33" stroke-width="6" stroke-linecap="round"/><line x1="249.75" y1="168" x2="249.75" y2="188" stroke="#33cc33" stroke-width="6" stroke-linecap="round"/><line x1="257.6" y1="168" x2="257.6" y2="188" stroke="#33cc33" stroke-width="6" stroke-linecap="round"/><line x1="265.45" y1="168" x2="265.45" y2="188" stroke="#33cc33" stroke-width="6" stroke-linecap="round"/><line x1="273.3" y1="168" x2="273.3" y2="188" stroke="#33cc33" stroke-width="6" stroke-linecap="round"/><line x1="281.15" y1="168" x2="281.15" y2="188" stroke="#33cc33" stroke-width="6" stroke-linecap="round"/><line x1="289" y1="168" x2="289" y2="188" stroke="#33cc33" stroke-width="6" stroke-linecap="round"/><line x1="296.85" y1="168" x2="296.85" y2="188" stroke="#33cc33" stroke-width="6" stroke-linecap="round"/><line x1="304.7" y1="200" x2="304.7" y2="220.5" stroke="#ff0000" stroke-width="6" stroke-linecap="round"/><line x1="312.55" y1="200" x2="312.55" y2="220.5" stroke="#ff0000" stroke-width="6" stroke-linecap="round"/><line x1="320.4" y1="200" x2="320.4" y2="220.5" stroke="#ff0000" stroke-width="6" stroke-linecap="round"/><line x1="328.25" y1="200" x2="328.25" y2="220.5" stroke="#ff0000" stroke-width="6" stroke-linecap="round"/><line x1="336.1" y1="200" x2="336.1" y2="220.5" stroke="#ff0000" stroke-width="6" stroke-linecap="round"/><line x1="343.95" y1="200" x2="343.95" y2="220.5" stroke="#ff0000" stroke-width="6" stroke-linecap="round"/><line x1="367.5" y1="200" x2="367.5" y2="220.5" stroke="#ff0000" stroke-width="6" stroke-linecap="round"/><line x1="375.35" y1="200" x2="375.35" y2="220.5" stroke="#ff0000" stroke-width="6" stroke-linecap="round"/><line x1="383.2" y1="200" x2="383.2" y2="220.5" stroke="#ff0000" stroke-width="6" stroke-linecap="round"/><line x1="391.05" y1="200" x2="391.05" y2="220.5" stroke="#ff0000" stroke-width="6" stroke-linecap="round"/><line x1="398.9" y1="200" x2="398.9" y2="220.5" stroke="#ff0000" stroke-width="6" stroke-linecap="round"/><line x1="406.75" y1="200" x2="406.75" y2="220.5" stroke="#ff0000" stroke-width="6" stroke-linecap="round"/><line x1="414.6" y1="200" x2="414.6" y2="220.5" stroke="#ff0000" stroke-width="6" stroke-linecap="round"/><line x1="422.45" y1="200" x2="422.45" y2="220.5" stroke="#ff0000" stroke-width="6" stroke-linecap="round"/><line x1="430.3" y1="200" x2="430.3" y2="220.5" stroke="#ff0000" stroke-width="6" stroke-linecap="round"/><line x1="438.15" y1="200" x2="438.15" y2="220.5" stroke="#ff0000" stroke-width="6" stroke-linecap="round"/><line x1="446" y1="200" x2="446" y2="220.5" stroke="#ff0000" stroke-width="6" stroke-linecap="round"/><line x1="453.85" y1="200" x2="453.85" y2="220.5" stroke="#ff0000" stroke-width="6" stroke-linecap="round"/><line x1="461.7" y1="200" x2="461.7" y2="220.5" stroke="#ff0000" stroke-width="6" stroke-linecap="round"/><line x1="469.55" y1="200" x2="469.55" y2="220.5" stroke="#ff0000" stroke-width="6" stroke-linecap="round"/><line x1="477.4" y1="200" x2="477.4" y2="220.5" stroke="#ff0000" stroke-width="6" stroke-linecap="round"/><line x1="485.25" y1="200" x2="485.25" y2="220.5" stroke="#ff0000" stroke-width="6" stroke-linecap="round"/><line x1="493.1" y1="200" x2="493.1" y2="220.5" stroke="#ff0000" stroke-width="6" stroke-linecap="round"/><line x1="500.95" y1="200" x2="500.95" y2="220.5" stroke="#ff0000" stroke-width="6" stroke-linecap="round"/><line x1="508.8" y1="200" x2="508.8" y2="220.5" stroke="#ff0000" stroke-width="6" stroke-linecap="round"/><line x1="516.65" y1="200" x2="516.65" y2="220.5" stroke="#ff0000" stroke-width="6" stroke-linecap="round"/><line x1="524.5" y1="200" x2="524.5" y2="220.5" stroke="#ff0000" stroke-width="6" stroke-linecap="round"/><line x1="532.35" y1="200" x2="532.35" y2="220.5" stroke="#ff0000" stroke-width="6" stroke-linecap="round"/><line x1="540.2" y1="200" x2="540.2" y2="220.5" stroke="#ff0000" stroke-width="6" stroke-linecap="round"/><line x1="548.05" y1="200" x2="548.05" y2="220.5" stroke="#ff0000" stroke-width="6" stroke-linecap="round"/><line x1="555.9" y1="200" x2="555.9" y2="220.5" stroke="#ff0000" stroke-width="6" stroke-linecap="round"/><line x1="563.75" y1="200" x2="563.75" y2="220.5" stroke="#ff0000" stroke-width="6" stroke-linecap="round"/><line x1="571.6" y1="200" x2="571.6" y2="220.5" stroke="#ff0000" stroke-width="6" stroke-linecap="round"/><line x1="579.45" y1="200" x2="579.45" y2="220.5" stroke="#ff0000" stroke-width="6" stroke-linecap="round"/><line x1="587.3" y1="200" x2="587.3" y2="220.5" stroke="#ff0000" stroke-width="6" stroke-linecap="round"/><line x1="595.15" y1="200" x2="595.15" y2="220.5" stroke="#ff0000" stroke-width="6" stroke-linecap="round"/><line x1="603" y1="200" x2="603" y2="220.5" stroke="#ff0000" stroke-width="6" stroke-linecap="round"/><line x1="610.85" y1="200" x2="610.85" y2="220.5" stroke="#ff0000" stroke-width="6" stroke-linecap="round"/><line x1="618.7" y1="200" x2="618.7" y2="220.5" stroke="#ff0000" stroke-width="6" stroke-linecap="round"/><line x1="626.55" y1="200" x2="626.55" y2="220.5" stroke="#ff0000" stroke-width="6" stroke-linecap="round"/><line x1="634.4" y1="200" x2="634.4" y2="220.5" stroke="#ff0000" stroke-width="6" stroke-linecap="round"/><line x1="642.25" y1="200" x2="642.25" y2="220.5" stroke="#ff0000" stroke-width="6" stroke-linecap="round"/><line x1="650.1" y1="200" x2="650.1" y2="220.5" stroke="#ff0000" stroke-width="6" stroke-linecap="round"/><line x1="657.95" y1="200" x2="657.95" y2="220.5" stroke="#ff0000" stroke-width="6" stroke-linecap="round"/><line x1="665.8" y1="200" x2="665.8" y2="220.5" stroke="#ff0000" stroke-width="6" stroke-linecap="round"/><line x1="673.65" y1="200" x2="673.65" y2="220.5" stroke="#ff0000" stroke-width="6" stroke-linecap="round"/><line x1="681.5" y1="200" x2="681.5" y2="220.5" stroke="#ff0000" stroke-width="6" stroke-linecap="round"/><line x1="689.35" y1="200" x2="689.35" y2="220.5" stroke="#ff0000" stroke-width="6" stroke-linecap="round"/><line x1="697.2" y1="200" x2="697.2" y2="220.5" stroke="#ff0000" stroke-width="6" stroke-linecap="round"/><line x1="705.05" y1="200" x2="705.05" y2="220.5" stroke="#ff0000" stroke-width="6" stroke-linecap="round"/><line x1="712.9" y1="200" x2="712.9" y2="220.5" stroke="#ff0000" stroke-width="6" stroke-linecap="round"/><line x1="720.75" y1="200" x2="720.75" y2="220.5" stroke="#ff0000" stroke-width="6" stroke-linecap="round"/><line x1="728.6" y1="200" x2="728.6" y2="220.5" stroke="#ff0000" stroke-width="6" stroke-linecap="round"/><line x1="736.45" y1="200" x2="736.45" y2="220.5" stroke="#ff0000" stroke-width="6" stroke-linecap="round"/><line x1="744.3" y1="200" x2="744.3" y2="220.5" stroke="#ff0000" stroke-width="6" stroke-linecap="round"/><line x1="752.15" y1="200" x2="752.15" y2="220.5" stroke="#ff0000" stroke-width="6" stroke-linecap="round"/><line x1="760" y1="200" x2="760" y2="220.5" stroke="#ff0000" stroke-width="6" stroke-linecap="round"/><line x1="767.85" y1="200" x2="767.85" y2="220.5" stroke="#ff0000" stroke-width="6" stroke-linecap="round"/><line x1="775.7" y1="200" x2="775.7" y2="220.5" stroke="#ff0000" stroke-width="6" stroke-linecap="round"/><line x1="783.55" y1="200" x2="783.55" y2="220.5" stroke="#ff0000" stroke-width="6" stroke-linecap="round"/><line x1="791.4" y1="200" x2="791.4" y2="220.5" stroke="#ff0000" stroke-width="6" stroke-linecap="round"/><line x1="799.25" y1="200" x2="799.25" y2="220.5" stroke="#ff0000" stroke-width="6" stroke-linecap="round"/><line x1="807.1" y1="200" x2="807.1" y2="220.5" stroke="#ff0000" stroke-width="6" stroke-linecap="round"/><line x1="814.95" y1="200" x2="814.95" y2="220.5" stroke="#ff0000" stroke-width="6" stroke-linecap="round"/><line x1="822.8" y1="200" x2="822.8" y2="220.5" stroke="#ff0000" stroke-width="6" stroke-linecap="round"/>
<line x1="41" y1="194" x2="824.8" y2="194" stroke="#ffff00" stroke-width="6.3" stroke-linecap="round"/>
<line x1="368" y1="163" x2="368" y2="225" stroke="#0000ff" stroke-width="1.3" />
<line x1="720.5" y1="163" x2="720.5" y2="225" stroke="#ff0000" stroke-width="1.3" />
<line x1="913.5" y1="163" x2="913.5" y2="225" stroke="#f0f0f0" stroke-width="1.3" />
<line x1="913" y1="168" x2="924" y2="168" stroke="#f0f0f0" stroke-width="1.6" />
<line x1="913" y1="180.5" x2="918" y2="180.5" stroke="#f0f0f0" stroke-width="1.6" />
<line x1="913" y1="194" x2="924" y2="194" stroke="#f0f0f0" stroke-width="1.6" />
<line x1="913" y1="208" x2="918" y2="208" stroke="#f0f0f0" stroke-width="1.6" />
<line x1="913" y1="220.5" x2="924" y2="220.5" stroke="#f0f0f0" stroke-width="1.6" />
</svg>
<div class="t" style="left:962.67px;top:186.95px;font-size:14.00px;line-height:16.10px;color:#f0f0f0;transform:scaleX(1.0700);transform-origin:0 0;"><span style="color:#f0f0f0">0</span></div>
<svg style="left:41px;top:258px" width="935" height="63" viewBox="41 258 935 63"><rect x="41" y="258" width="935" height="63" fill="#00005f"/>
<line x1="41" y1="287.5" x2="825" y2="287.5" stroke="#ff6a1a" stroke-width="2.2" />
<polyline points="31.0,290.0 46.5,290.0 54.0,275.0 61.5,290.0 69.5,290.0 77.0,275.0 84.5,290.0 227.0,290.0 234.5,275.0 242.0,290.0 344.5,290.0 352.0,275.0 359.5,290.0 360.5,290.0 368.0,303.0 375.5,290.0 398.5,290.0 406.0,303.0 413.5,290.0 462.0,290.0 469.5,303.0 477.0,290.0 549.5,290.0 557.0,303.0 564.5,290.0 580.5,290.0 588.0,303.0 595.5,290.0 627.0,290.0 634.5,303.0 642.0,290.0 729.5,290.0 737.0,303.0 744.5,290.0 760.5,290.0 768.0,303.0 775.5,290.0 791.5,290.0 799.0,303.0 806.5,290.0 825.0,290.0" fill="none" stroke="#8ccbe0" stroke-width="3.6" stroke-linejoin="round" />
<polyline points="36.0,263.8 297.5,263.8 305.0,314.8 825.0,314.8" fill="none" stroke="#8ccbe0" stroke-width="3.8" stroke-linejoin="round" />
<line x1="825" y1="290" x2="913" y2="290" stroke="#ffffff" stroke-width="1.2" />
<line x1="368" y1="258" x2="368" y2="321" stroke="#0000ff" stroke-width="1.3" />
<line x1="720.5" y1="258" x2="720.5" y2="321" stroke="#ff0000" stroke-width="1.3" />
<line x1="913.5" y1="258" x2="913.5" y2="321" stroke="#f0f0f0" stroke-width="1.3" />
<line x1="913" y1="264.5" x2="918" y2="264.5" stroke="#f0f0f0" stroke-width="1.6" />
<line x1="913" y1="273" x2="924" y2="273" stroke="#f0f0f0" stroke-width="1.6" />
<line x1="913" y1="281.5" x2="918" y2="281.5" stroke="#f0f0f0" stroke-width="1.6" />
<line x1="913" y1="290" x2="924" y2="290" stroke="#f0f0f0" stroke-width="1.6" />
<line x1="913" y1="298" x2="918" y2="298" stroke="#f0f0f0" stroke-width="1.6" />
<line x1="913" y1="307" x2="924" y2="307" stroke="#f0f0f0" stroke-width="1.6" />
<line x1="913" y1="315.5" x2="918" y2="315.5" stroke="#f0f0f0" stroke-width="1.6" />
</svg>
<div class="t" style="left:937.67px;top:266.95px;font-size:14.00px;line-height:16.10px;color:#f0f0f0;transform:scaleX(1.0700);transform-origin:0 0;"><span style="color:#f0f0f0">1000</span></div>
<div class="t" style="left:962.67px;top:283.95px;font-size:14.00px;line-height:16.10px;color:#f0f0f0;transform:scaleX(1.0700);transform-origin:0 0;"><span style="color:#f0f0f0">0</span></div>
<div class="t" style="left:932.69px;top:300.95px;font-size:14.00px;line-height:16.10px;color:#f0f0f0;transform:scaleX(1.0700);transform-origin:0 0;"><span style="color:#f0f0f0">-1000</span></div>
<svg style="left:41px;top:258px" width="935" height="63" viewBox="41 258 935 63"><polyline points="818.0,290.0 825.0,303.0" fill="none" stroke="#8ccbe0" stroke-width="3.6" stroke-linejoin="round" /></svg>
<svg style="left:41px;top:354px" width="935" height="271" viewBox="41 354 935 271"><rect x="41" y="354" width="935" height="271" fill="#808080"/>
<path d="M41.0,514.7 C42.1,515.4 44.3,518.9 47.8,518.6 C51.3,518.3 58.3,513.4 62.0,512.9 C65.7,512.4 63.3,519.4 69.8,515.5 C76.3,511.6 91.9,493.4 101.0,489.5 C110.1,485.6 119.3,490.2 124.3,492.0 C129.3,493.8 127.6,497.9 130.8,500.4 C134.0,502.9 139.4,504.0 143.7,506.9 C148.0,509.8 151.1,515.6 156.7,518.0 C162.3,520.4 170.9,517.7 177.4,521.2 C183.9,524.8 188.2,533.7 195.6,539.3 C202.9,544.9 213.3,556.6 221.5,554.9 C229.7,553.2 237.6,535.5 244.9,529.0 C252.2,522.5 259.3,519.0 265.6,516.0 C271.9,513.0 277.3,511.0 282.5,510.8 C287.7,510.6 290.2,508.9 296.7,514.7 C303.2,520.5 312.8,539.8 321.4,545.8 C330.0,551.8 340.6,550.8 348.6,551.0 C356.6,551.2 363.3,547.3 369.4,547.1 C375.5,546.9 379.8,551.2 385.0,549.7 C390.2,548.2 395.8,539.3 400.5,538.0 C405.2,536.7 407.3,538.6 413.4,541.9 C419.4,545.1 429.0,556.4 436.8,557.5 C444.6,558.6 452.6,547.5 460.0,548.4 C467.4,549.3 475.5,559.0 480.9,562.7 C486.3,566.4 486.0,571.3 492.5,570.4 C499.0,569.5 511.0,562.2 519.8,557.5 C528.5,552.8 538.8,543.6 545.0,542.0 C551.2,540.4 551.5,549.3 557.0,548.0 C562.5,546.7 572.8,536.3 578.0,534.0 C583.2,531.7 583.7,527.9 588.0,534.0 C592.3,540.1 598.4,564.7 603.7,570.4 C609.0,576.1 616.1,570.1 620.0,568.0 C623.9,565.9 622.0,557.5 627.0,557.5 C632.0,557.5 642.2,560.5 650.0,568.0 C657.8,575.5 668.5,597.8 673.8,602.8 C679.1,607.8 677.7,604.7 682.0,597.7 C686.3,590.7 695.4,567.1 699.7,561.0 C704.0,554.9 703.3,559.8 708.0,561.0 C712.7,562.2 722.0,562.3 728.0,568.0 C734.0,573.7 739.8,590.9 743.8,595.0 C747.8,599.1 746.8,596.6 752.0,592.5 C757.2,588.4 767.1,572.1 775.0,570.4 C782.9,568.6 794.3,580.7 799.5,582.0 C804.7,583.3 803.2,580.2 806.0,578.0 C808.8,575.8 813.2,570.3 816.0,569.0 C818.8,567.7 821.8,569.8 823.0,570.0" fill="none" stroke="#f4f0d4" stroke-width="1.2"/>
<polyline points="41.0,522.0 46.0,526.0 55.0,531.0 70.0,531.0 80.0,533.0 95.0,533.0 105.0,530.0 120.0,528.0 145.0,522.0 165.0,526.0 175.0,524.0 185.0,522.0 200.0,522.0 215.0,522.0 230.0,530.0 245.0,528.0 260.0,527.0 275.0,533.0 290.0,528.0 300.0,524.0 315.0,522.0 328.0,525.0 340.0,522.0 355.0,525.0 368.0,521.0 380.0,526.0 395.0,530.0 405.0,522.0 420.0,522.0 440.0,524.0 450.0,528.0 460.0,530.0 475.0,522.0 490.0,521.0 500.0,523.0 510.0,527.0 525.0,530.0 540.0,530.0 555.0,525.0 562.0,522.0 570.0,530.0 580.0,530.0 590.0,524.0 600.0,521.0 612.0,522.0 625.0,526.0 640.0,521.0 655.0,523.0 670.0,521.0 685.0,528.0 695.0,530.0 705.0,527.0 720.0,525.0 740.0,521.0 752.0,521.0 760.0,525.0 780.0,527.0 790.0,522.0 800.0,521.0 815.0,525.0 823.0,523.0" fill="none" stroke="#eeee00" stroke-width="1.5" stroke-linejoin="round" />
<polyline points="41.0,527.0 60.0,527.0 68.5,533.0 77.6,527.0 99.6,527.0 108.7,533.0 116.5,527.0 164.5,527.0 171.0,533.0 180.0,527.0 220.0,527.0 226.7,516.0 233.2,527.0 282.5,527.0 290.3,533.0 298.0,527.0 346.0,527.0 353.8,517.3 360.3,527.0 438.0,527.0 445.9,501.7 453.6,527.0 494.0,527.0 501.6,501.7 509.4,527.0 604.0,527.0 611.0,514.7 619.0,527.0 621.0,527.0 627.0,514.7 633.0,527.0 674.0,527.0 681.5,501.7 690.0,527.0 721.0,527.0 729.5,521.0 737.0,527.0 744.0,527.0 751.5,514.7 760.0,527.0 800.0,527.0 807.3,514.7 815.0,527.0 823.0,527.0" fill="none" stroke="#000000" stroke-width="2.3" stroke-linejoin="round" />
<polyline points="41.0,580.3 63.3,580.3 68.5,586.5 101.0,586.5 108.7,593.8 164.5,593.8 171.0,600.3 219.0,600.3 226.7,515.2 281.2,515.2 289.0,534.0 344.7,534.0 352.5,515.2 436.8,515.2 445.9,489.5 492.5,489.5 501.6,461.5 602.4,461.5 610.0,449.0 619.0,449.0 627.0,435.0 673.8,435.0 682.8,409.0 720.4,409.0 728.0,403.0 743.8,403.0 751.5,390.0 799.5,390.0 807.3,376.5 823.6,376.5" fill="none" stroke="#8c0000" stroke-width="3.8" stroke-linejoin="round" />
<line x1="368" y1="354" x2="368" y2="625" stroke="#0000ff" stroke-width="1.3" />
<line x1="720.5" y1="354" x2="720.5" y2="625" stroke="#ff0000" stroke-width="1.3" />
<line x1="913.5" y1="354" x2="913.5" y2="625" stroke="#f0f0f0" stroke-width="1.3" />
<line x1="913" y1="619.7" x2="919" y2="619.7" stroke="#f0f0f0" stroke-width="1.6" />
<line x1="913" y1="606.6" x2="919" y2="606.6" stroke="#f0f0f0" stroke-width="1.6" />
<line x1="913" y1="593.5" x2="925" y2="593.5" stroke="#f0f0f0" stroke-width="1.6" />
<line x1="913" y1="580.4" x2="919" y2="580.4" stroke="#f0f0f0" stroke-width="1.6" />
<line x1="913" y1="567.3" x2="919" y2="567.3" stroke="#f0f0f0" stroke-width="1.6" />
<line x1="913" y1="554.2" x2="919" y2="554.2" stroke="#f0f0f0" stroke-width="1.6" />
<line x1="913" y1="541.1" x2="919" y2="541.1" stroke="#f0f0f0" stroke-width="1.6" />
<line x1="913" y1="528" x2="925" y2="528" stroke="#f0f0f0" stroke-width="1.6" />
<line x1="913" y1="514.9" x2="919" y2="514.9" stroke="#f0f0f0" stroke-width="1.6" />
<line x1="913" y1="501.8" x2="919" y2="501.8" stroke="#f0f0f0" stroke-width="1.6" />
<line x1="913" y1="488.7" x2="919" y2="488.7" stroke="#f0f0f0" stroke-width="1.6" />
<line x1="913" y1="475.6" x2="919" y2="475.6" stroke="#f0f0f0" stroke-width="1.6" />
<line x1="913" y1="462.5" x2="925" y2="462.5" stroke="#f0f0f0" stroke-width="1.6" />
<line x1="913" y1="449.4" x2="919" y2="449.4" stroke="#f0f0f0" stroke-width="1.6" />
<line x1="913" y1="436.3" x2="919" y2="436.3" stroke="#f0f0f0" stroke-width="1.6" />
<line x1="913" y1="423.2" x2="919" y2="423.2" stroke="#f0f0f0" stroke-width="1.6" />
<line x1="913" y1="410.1" x2="919" y2="410.1" stroke="#f0f0f0" stroke-width="1.6" />
<line x1="913" y1="397" x2="925" y2="397" stroke="#f0f0f0" stroke-width="1.6" />
<line x1="913" y1="383.9" x2="919" y2="383.9" stroke="#f0f0f0" stroke-width="1.6" />
<line x1="913" y1="370.8" x2="919" y2="370.8" stroke="#f0f0f0" stroke-width="1.6" />
</svg>
<div class="t" style="left:946.01px;top:390.45px;font-size:14.00px;line-height:16.10px;color:#f0f0f0;transform:scaleX(1.0700);transform-origin:0 0;"><span style="color:#f0f0f0">100</span></div>
<div class="t" style="left:954.34px;top:455.95px;font-size:14.00px;line-height:16.10px;color:#f0f0f0;transform:scaleX(1.0700);transform-origin:0 0;"><span style="color:#f0f0f0">50</span></div>
<div class="t" style="left:962.67px;top:521.45px;font-size:14.00px;line-height:16.10px;color:#f0f0f0;transform:scaleX(1.0700);transform-origin:0 0;"><span style="color:#f0f0f0">0</span></div>
<div class="t" style="left:949.35px;top:586.95px;font-size:14.00px;line-height:16.10px;color:#f0f0f0;transform:scaleX(1.0700);transform-origin:0 0;"><span style="color:#f0f0f0">-50</span></div>
<svg style="left:41px;top:658px" width="935" height="258" viewBox="41 658 935 258"><rect x="41" y="658" width="935" height="258" fill="#000"/>
<line x1="45.65" y1="716.8" x2="45.65" y2="740.7" stroke="#ff6d22" stroke-width="1.3" /><rect x="42.6" y="720.0" width="6" height="16.0" fill="#ff6d22"/><line x1="53.5" y1="714.9" x2="53.5" y2="742" stroke="#8fa9cc" stroke-width="1.3" /><rect x="51.1" y="718.7" width="4.8" height="18.3" fill="#000" stroke="#8fa9cc" stroke-width="1.3"/><line x1="61.35" y1="712.3" x2="61.35" y2="723.1" stroke="#ff6d22" stroke-width="1.3" /><rect x="58.4" y="717.4" width="6" height="3.4" fill="#ff6d22"/><line x1="69.2" y1="717.9" x2="69.2" y2="729" stroke="#8fa9cc" stroke-width="1.3" /><rect x="66.8" y="720.0" width="4.8" height="2.8" fill="#000" stroke="#8fa9cc" stroke-width="1.3"/><line x1="77.05" y1="708.7" x2="77.05" y2="724" stroke="#8fa9cc" stroke-width="1.3" /><rect x="74.6" y="712.0" width="4.8" height="8.8" fill="#000" stroke="#8fa9cc" stroke-width="1.3"/><line x1="84.9" y1="692" x2="84.9" y2="716.4" stroke="#8fa9cc" stroke-width="1.3" /><rect x="82.5" y="699.0" width="4.8" height="13.0" fill="#000" stroke="#8fa9cc" stroke-width="1.3"/><line x1="92.75" y1="690.8" x2="92.75" y2="703.4" stroke="#ff6d22" stroke-width="1.3" /><rect x="89.8" y="696.5" width="6" height="3.0" fill="#ff6d22"/><line x1="100.6" y1="681.8" x2="100.6" y2="701.2" stroke="#8fa9cc" stroke-width="1.3" /><rect x="98.2" y="687.0" width="4.8" height="11.4" fill="#000" stroke="#8fa9cc" stroke-width="1.3"/><line x1="108.45" y1="683.8" x2="108.45" y2="696.6" stroke="#ff6d22" stroke-width="1.3" /><rect x="105.4" y="688.1" width="6" height="3.0" fill="#ff6d22"/><line x1="116.3" y1="685.4" x2="116.3" y2="697.4" stroke="#8fa9cc" stroke-width="1.3" /><rect x="113.9" y="689.4" width="4.8" height="3.0" fill="#000" stroke="#8fa9cc" stroke-width="1.3"/><line x1="124.15" y1="682.2" x2="124.15" y2="692.3" stroke="#8fa9cc" stroke-width="1.3" /><rect x="121.7" y="687.3" width="4.8" height="3.0" fill="#000" stroke="#8fa9cc" stroke-width="1.3"/><line x1="132" y1="684.5" x2="132" y2="706" stroke="#ff6d22" stroke-width="1.3" /><rect x="129.0" y="690.3" width="6" height="10.7" fill="#ff6d22"/><line x1="139.85" y1="692.2" x2="139.85" y2="703.2" stroke="#8fa9cc" stroke-width="1.3" /><rect x="137.4" y="695.7" width="4.8" height="5.3" fill="#000" stroke="#8fa9cc" stroke-width="1.3"/><line x1="147.7" y1="688.7" x2="147.7" y2="701.4" stroke="#ff6d22" stroke-width="1.3" /><rect x="144.7" y="694.5" width="6" height="3.0" fill="#ff6d22"/><line x1="155.55" y1="690.8" x2="155.55" y2="710.3" stroke="#ff6d22" stroke-width="1.3" /><rect x="152.6" y="696.4" width="6" height="7.5" fill="#ff6d22"/><line x1="163.4" y1="693.4" x2="163.4" y2="711.6" stroke="#8fa9cc" stroke-width="1.3" /><rect x="161.0" y="699.0" width="4.8" height="6.0" fill="#000" stroke="#8fa9cc" stroke-width="1.3"/><line x1="171.25" y1="693" x2="171.25" y2="705" stroke="#ff6d22" stroke-width="1.3" /><rect x="168.2" y="696.5" width="6" height="3.0" fill="#ff6d22"/><line x1="179.1" y1="694.8" x2="179.1" y2="709.2" stroke="#ff6d22" stroke-width="1.3" /><rect x="176.1" y="699.0" width="6" height="3.5" fill="#ff6d22"/><line x1="186.95" y1="694.6" x2="186.95" y2="716.5" stroke="#ff6d22" stroke-width="1.3" /><rect x="183.9" y="701.0" width="6" height="13.0" fill="#ff6d22"/><line x1="194.8" y1="710" x2="194.8" y2="718.5" stroke="#8fa9cc" stroke-width="1.3" /><rect x="192.4" y="712.7" width="4.8" height="2.7" fill="#000" stroke="#8fa9cc" stroke-width="1.3"/><line x1="202.65" y1="705.9" x2="202.65" y2="719.6" stroke="#ff6d22" stroke-width="1.3" /><rect x="199.7" y="712.7" width="6" height="2.7" fill="#ff6d22"/><line x1="210.5" y1="710.9" x2="210.5" y2="727" stroke="#ff6d22" stroke-width="1.3" /><rect x="207.5" y="716.0" width="6" height="7.5" fill="#ff6d22"/><line x1="218.35" y1="719.5" x2="218.35" y2="730.9" stroke="#ff6d22" stroke-width="1.3" /><rect x="215.3" y="724.0" width="6" height="3.0" fill="#ff6d22"/><line x1="226.2" y1="712.2" x2="226.2" y2="732.9" stroke="#8fa9cc" stroke-width="1.3" /><rect x="223.8" y="716.0" width="4.8" height="12.0" fill="#000" stroke="#8fa9cc" stroke-width="1.3"/><line x1="234.05" y1="705.1" x2="234.05" y2="723.9" stroke="#8fa9cc" stroke-width="1.3" /><rect x="231.6" y="710.0" width="4.8" height="7.4" fill="#000" stroke="#8fa9cc" stroke-width="1.3"/><line x1="241.9" y1="695.1" x2="241.9" y2="716.6" stroke="#8fa9cc" stroke-width="1.3" /><rect x="239.5" y="700.5" width="4.8" height="9.5" fill="#000" stroke="#8fa9cc" stroke-width="1.3"/><line x1="249.75" y1="694.2" x2="249.75" y2="712.9" stroke="#ff6d22" stroke-width="1.3" /><rect x="246.8" y="700.5" width="6" height="5.4" fill="#ff6d22"/><line x1="257.6" y1="689.6" x2="257.6" y2="709.4" stroke="#8fa9cc" stroke-width="1.3" /><rect x="255.2" y="695.0" width="4.8" height="11.6" fill="#000" stroke="#8fa9cc" stroke-width="1.3"/><line x1="265.45" y1="687.7" x2="265.45" y2="702.8" stroke="#ff6d22" stroke-width="1.3" /><rect x="262.4" y="693.5" width="6" height="3.0" fill="#ff6d22"/><line x1="273.3" y1="687.2" x2="273.3" y2="701.2" stroke="#8fa9cc" stroke-width="1.3" /><rect x="270.9" y="693.7" width="4.8" height="2.7" fill="#000" stroke="#8fa9cc" stroke-width="1.3"/><line x1="281.15" y1="686.4" x2="281.15" y2="697.1" stroke="#8fa9cc" stroke-width="1.3" /><rect x="278.8" y="691.5" width="4.8" height="3.0" fill="#000" stroke="#8fa9cc" stroke-width="1.3"/><line x1="289" y1="685.8" x2="289" y2="698.9" stroke="#ff6d22" stroke-width="1.3" /><rect x="286.0" y="691.5" width="6" height="3.0" fill="#ff6d22"/><line x1="296.85" y1="692.3" x2="296.85" y2="701.3" stroke="#ff6d22" stroke-width="1.3" /><rect x="293.9" y="695.7" width="6" height="3.3" fill="#ff6d22"/><line x1="304.7" y1="712.505" x2="304.7" y2="721.461" stroke="#ff6d22" stroke-width="1.3" /><rect x="301.7" y="715.1" width="6" height="3.7" fill="#ff6d22"/><line x1="312.55" y1="709.784" x2="312.55" y2="721.667" stroke="#8fa9cc" stroke-width="1.3" /><rect x="310.2" y="714.9" width="4.8" height="3.9" fill="#000" stroke="#8fa9cc" stroke-width="1.3"/><line x1="320.4" y1="707.249" x2="320.4" y2="718.493" stroke="#8fa9cc" stroke-width="1.3" /><rect x="318.0" y="711.2" width="4.8" height="3.7" fill="#000" stroke="#8fa9cc" stroke-width="1.3"/><line x1="328.25" y1="703.51" x2="328.25" y2="725.369" stroke="#ff6d22" stroke-width="1.3" /><rect x="325.2" y="711.2" width="6" height="8.4" fill="#ff6d22"/><line x1="336.1" y1="714.212" x2="336.1" y2="730.203" stroke="#ff6d22" stroke-width="1.3" /><rect x="333.1" y="719.5" width="6" height="4.9" fill="#ff6d22"/><line x1="343.95" y1="715.967" x2="343.95" y2="730.929" stroke="#8fa9cc" stroke-width="1.3" /><rect x="341.6" y="722.4" width="4.8" height="3.0" fill="#000" stroke="#8fa9cc" stroke-width="1.3"/><line x1="351.8" y1="716.679" x2="351.8" y2="729.198" stroke="#ff6d22" stroke-width="1.3" /><rect x="348.8" y="722.9" width="6" height="3.0" fill="#ff6d22"/><line x1="359.65" y1="722.971" x2="359.65" y2="730.891" stroke="#8fa9cc" stroke-width="1.3" /><rect x="357.2" y="723.6" width="4.8" height="3.0" fill="#000" stroke="#8fa9cc" stroke-width="1.3"/><line x1="367.5" y1="721.948" x2="367.5" y2="727.157" stroke="#8fa9cc" stroke-width="1.3" /><rect x="365.1" y="722.6" width="4.8" height="3.0" fill="#000" stroke="#8fa9cc" stroke-width="1.3"/><line x1="375.35" y1="722.735" x2="375.35" y2="730.263" stroke="#ff6d22" stroke-width="1.3" /><rect x="372.3" y="726.1" width="6" height="2.8" fill="#ff6d22"/><line x1="383.2" y1="716.637" x2="383.2" y2="730.605" stroke="#8fa9cc" stroke-width="1.3" /><rect x="380.8" y="718.7" width="4.8" height="10.2" fill="#000" stroke="#8fa9cc" stroke-width="1.3"/><line x1="391.05" y1="714.467" x2="391.05" y2="725.817" stroke="#8fa9cc" stroke-width="1.3" /><rect x="388.7" y="715.6" width="4.8" height="3.1" fill="#000" stroke="#8fa9cc" stroke-width="1.3"/><line x1="398.9" y1="717.594" x2="398.9" y2="726.432" stroke="#ff6d22" stroke-width="1.3" /><rect x="395.9" y="719.6" width="6" height="4.0" fill="#ff6d22"/><line x1="406.75" y1="722.145" x2="406.75" y2="729.953" stroke="#ff6d22" stroke-width="1.3" /><rect x="403.8" y="725.4" width="6" height="3.0" fill="#ff6d22"/><line x1="414.6" y1="721.87" x2="414.6" y2="740.566" stroke="#ff6d22" stroke-width="1.3" /><rect x="411.6" y="729.8" width="6" height="6.5" fill="#ff6d22"/><line x1="422.45" y1="736.325" x2="422.45" y2="739.797" stroke="#ff6d22" stroke-width="1.3" /><rect x="419.4" y="736.5" width="6" height="3.0" fill="#ff6d22"/><line x1="430.3" y1="736.838" x2="430.3" y2="749.458" stroke="#ff6d22" stroke-width="1.3" /><rect x="427.3" y="739.7" width="6" height="3.0" fill="#ff6d22"/><line x1="438.15" y1="735.551" x2="438.15" y2="750.312" stroke="#8fa9cc" stroke-width="1.3" /><rect x="435.8" y="736.7" width="4.8" height="5.9" fill="#000" stroke="#8fa9cc" stroke-width="1.3"/><line x1="446" y1="734.687" x2="446" y2="743.137" stroke="#ff6d22" stroke-width="1.3" /><rect x="443.0" y="736.0" width="6" height="3.0" fill="#ff6d22"/><line x1="453.85" y1="735.137" x2="453.85" y2="747.84" stroke="#ff6d22" stroke-width="1.3" /><rect x="450.8" y="738.4" width="6" height="3.0" fill="#ff6d22"/><line x1="461.7" y1="736.614" x2="461.7" y2="751.707" stroke="#ff6d22" stroke-width="1.3" /><rect x="458.7" y="742.5" width="6" height="6.4" fill="#ff6d22"/><line x1="469.55" y1="748.512" x2="469.55" y2="757.616" stroke="#ff6d22" stroke-width="1.3" /><rect x="466.5" y="749.4" width="6" height="3.0" fill="#ff6d22"/><line x1="477.4" y1="755.71" x2="477.4" y2="768.277" stroke="#ff6d22" stroke-width="1.3" /><rect x="474.4" y="762.2" width="6" height="2.8" fill="#ff6d22"/><line x1="485.25" y1="754.534" x2="485.25" y2="772.864" stroke="#8fa9cc" stroke-width="1.3" /><rect x="482.9" y="761.2" width="4.8" height="3.8" fill="#000" stroke="#8fa9cc" stroke-width="1.3"/><line x1="493.1" y1="754.572" x2="493.1" y2="776.683" stroke="#ff6d22" stroke-width="1.3" /><rect x="490.1" y="761.2" width="6" height="8.7" fill="#ff6d22"/><line x1="500.95" y1="765.525" x2="500.95" y2="774.578" stroke="#8fa9cc" stroke-width="1.3" /><rect x="498.6" y="767.5" width="4.8" height="3.0" fill="#000" stroke="#8fa9cc" stroke-width="1.3"/><line x1="508.8" y1="765.733" x2="508.8" y2="769.307" stroke="#8fa9cc" stroke-width="1.3" /><rect x="506.4" y="766.0" width="4.8" height="3.0" fill="#000" stroke="#8fa9cc" stroke-width="1.3"/><line x1="516.65" y1="757.646" x2="516.65" y2="772.784" stroke="#8fa9cc" stroke-width="1.3" /><rect x="514.2" y="760.5" width="4.8" height="6.5" fill="#000" stroke="#8fa9cc" stroke-width="1.3"/><line x1="524.5" y1="756.33" x2="524.5" y2="774.938" stroke="#ff6d22" stroke-width="1.3" /><rect x="521.5" y="760.5" width="6" height="6.9" fill="#ff6d22"/><line x1="532.35" y1="756.01" x2="532.35" y2="768.08" stroke="#8fa9cc" stroke-width="1.3" /><rect x="529.9" y="762.6" width="4.8" height="3.0" fill="#000" stroke="#8fa9cc" stroke-width="1.3"/><line x1="540.2" y1="750.891" x2="540.2" y2="766.072" stroke="#8fa9cc" stroke-width="1.3" /><rect x="537.8" y="753.5" width="4.8" height="10.2" fill="#000" stroke="#8fa9cc" stroke-width="1.3"/><line x1="548.05" y1="753.34" x2="548.05" y2="767.643" stroke="#ff6d22" stroke-width="1.3" /><rect x="545.0" y="758.0" width="6" height="3.0" fill="#ff6d22"/><line x1="555.9" y1="768.618" x2="555.9" y2="791.286" stroke="#ff6d22" stroke-width="1.3" /><rect x="552.9" y="773.0" width="6" height="12.7" fill="#ff6d22"/><line x1="563.75" y1="756.423" x2="563.75" y2="769.178" stroke="#8fa9cc" stroke-width="1.3" /><rect x="561.4" y="758.0" width="4.8" height="5.5" fill="#000" stroke="#8fa9cc" stroke-width="1.3"/><line x1="571.6" y1="751.54" x2="571.6" y2="771.87" stroke="#ff6d22" stroke-width="1.3" /><rect x="568.6" y="758.0" width="6" height="7.6" fill="#ff6d22"/><line x1="579.45" y1="761.804" x2="579.45" y2="772.143" stroke="#8fa9cc" stroke-width="1.3" /><rect x="577.0" y="763.3" width="4.8" height="3.0" fill="#000" stroke="#8fa9cc" stroke-width="1.3"/><line x1="587.3" y1="757.448" x2="587.3" y2="774.662" stroke="#ff6d22" stroke-width="1.3" /><rect x="584.3" y="764.1" width="6" height="2.8" fill="#ff6d22"/><line x1="595.15" y1="786.27" x2="595.15" y2="806.973" stroke="#ff6d22" stroke-width="1.3" /><rect x="592.1" y="790.1" width="6" height="9.3" fill="#ff6d22"/><line x1="603" y1="797.156" x2="603" y2="805.438" stroke="#ff6d22" stroke-width="1.3" /><rect x="600.0" y="799.3" width="6" height="4.2" fill="#ff6d22"/><line x1="610.85" y1="764.99" x2="610.85" y2="804.976" stroke="#8fa9cc" stroke-width="1.3" /><rect x="608.5" y="772.3" width="4.8" height="26.0" fill="#000" stroke="#8fa9cc" stroke-width="1.3"/><line x1="618.7" y1="770.517" x2="618.7" y2="789.544" stroke="#ff6d22" stroke-width="1.3" /><rect x="615.7" y="777.3" width="6" height="4.4" fill="#ff6d22"/><line x1="626.55" y1="778.229" x2="626.55" y2="792.538" stroke="#ff6d22" stroke-width="1.3" /><rect x="623.5" y="781.7" width="6" height="6.0" fill="#ff6d22"/><line x1="634.4" y1="793.007" x2="634.4" y2="804.641" stroke="#ff6d22" stroke-width="1.3" /><rect x="631.4" y="794.1" width="6" height="2.7" fill="#ff6d22"/><line x1="642.25" y1="792.963" x2="642.25" y2="817.536" stroke="#ff6d22" stroke-width="1.3" /><rect x="639.2" y="797.6" width="6" height="12.4" fill="#ff6d22"/><line x1="650.1" y1="800.055" x2="650.1" y2="816.783" stroke="#8fa9cc" stroke-width="1.3" /><rect x="647.7" y="807.2" width="4.8" height="2.8" fill="#000" stroke="#8fa9cc" stroke-width="1.3"/><line x1="657.95" y1="816.101" x2="657.95" y2="827.496" stroke="#ff6d22" stroke-width="1.3" /><rect x="654.9" y="818.9" width="6" height="5.6" fill="#ff6d22"/><line x1="665.8" y1="819.067" x2="665.8" y2="827.26" stroke="#8fa9cc" stroke-width="1.3" /><rect x="663.4" y="822.8" width="4.8" height="3.0" fill="#000" stroke="#8fa9cc" stroke-width="1.3"/><line x1="673.65" y1="827.492" x2="673.65" y2="845.568" stroke="#ff6d22" stroke-width="1.3" /><rect x="670.6" y="829.4" width="6" height="8.8" fill="#ff6d22"/><line x1="681.5" y1="816.656" x2="681.5" y2="841.379" stroke="#8fa9cc" stroke-width="1.3" /><rect x="679.1" y="820.9" width="4.8" height="15.4" fill="#000" stroke="#8fa9cc" stroke-width="1.3"/><line x1="689.35" y1="810.377" x2="689.35" y2="824.928" stroke="#8fa9cc" stroke-width="1.3" /><rect x="687.0" y="814.3" width="4.8" height="3.2" fill="#000" stroke="#8fa9cc" stroke-width="1.3"/><line x1="697.2" y1="805.5" x2="697.2" y2="818.986" stroke="#8fa9cc" stroke-width="1.3" /><rect x="694.8" y="810.2" width="4.8" height="4.1" fill="#000" stroke="#8fa9cc" stroke-width="1.3"/><line x1="705.05" y1="819.981" x2="705.05" y2="827.255" stroke="#ff6d22" stroke-width="1.3" /><rect x="702.0" y="823.0" width="6" height="3.0" fill="#ff6d22"/><line x1="712.9" y1="818.379" x2="712.9" y2="827.328" stroke="#ff6d22" stroke-width="1.3" /><rect x="709.9" y="823.5" width="6" height="3.0" fill="#ff6d22"/><line x1="720.75" y1="819.045" x2="720.75" y2="830.794" stroke="#ff6d22" stroke-width="1.3" /><rect x="717.8" y="824.0" width="6" height="3.0" fill="#ff6d22"/><line x1="728.6" y1="821.271" x2="728.6" y2="836.767" stroke="#ff6d22" stroke-width="1.3" /><rect x="725.6" y="825.9" width="6" height="6.0" fill="#ff6d22"/><line x1="736.45" y1="848.515" x2="736.45" y2="872.976" stroke="#ff6d22" stroke-width="1.3" /><rect x="733.4" y="850.3" width="6" height="17.8" fill="#ff6d22"/><line x1="744.3" y1="858.936" x2="744.3" y2="874.459" stroke="#8fa9cc" stroke-width="1.3" /><rect x="741.9" y="861.9" width="4.8" height="6.2" fill="#000" stroke="#8fa9cc" stroke-width="1.3"/><line x1="752.15" y1="846.894" x2="752.15" y2="868.195" stroke="#8fa9cc" stroke-width="1.3" /><rect x="749.8" y="851.8" width="4.8" height="10.0" fill="#000" stroke="#8fa9cc" stroke-width="1.3"/><line x1="760" y1="847.723" x2="760" y2="866.226" stroke="#ff6d22" stroke-width="1.3" /><rect x="757.0" y="851.8" width="6" height="9.1" fill="#ff6d22"/><line x1="767.85" y1="852.207" x2="767.85" y2="866.787" stroke="#8fa9cc" stroke-width="1.3" /><rect x="765.5" y="856.8" width="4.8" height="4.1" fill="#000" stroke="#8fa9cc" stroke-width="1.3"/><line x1="775.7" y1="844.186" x2="775.7" y2="861.138" stroke="#8fa9cc" stroke-width="1.3" /><rect x="773.3" y="848.9" width="4.8" height="7.9" fill="#000" stroke="#8fa9cc" stroke-width="1.3"/><line x1="783.55" y1="860.319" x2="783.55" y2="878.583" stroke="#ff6d22" stroke-width="1.3" /><rect x="780.5" y="866.2" width="6" height="5.2" fill="#ff6d22"/><line x1="791.4" y1="868.63" x2="791.4" y2="889.806" stroke="#ff6d22" stroke-width="1.3" /><rect x="788.4" y="871.4" width="6" height="13.4" fill="#ff6d22"/><line x1="799.25" y1="878.009" x2="799.25" y2="886.905" stroke="#ff6d22" stroke-width="1.3" /><rect x="796.2" y="883.4" width="6" height="3.0" fill="#ff6d22"/><line x1="807.1" y1="853.925" x2="807.1" y2="879.114" stroke="#8fa9cc" stroke-width="1.3" /><rect x="804.7" y="858.0" width="4.8" height="19.6" fill="#000" stroke="#8fa9cc" stroke-width="1.3"/><line x1="814.95" y1="859.747" x2="814.95" y2="871.342" stroke="#ff6d22" stroke-width="1.3" /><rect x="811.9" y="861.3" width="6" height="4.4" fill="#ff6d22"/><line x1="822.8" y1="868" x2="822.8" y2="890" stroke="#ff6d22" stroke-width="1.3" /><rect x="819.8" y="873.0" width="6" height="13.0" fill="#ff6d22"/>
<polyline points="41.0,733.0 45.0,732.0 54.0,709.3 62.0,714.7 69.0,714.0 77.0,706.0 85.0,687.6 93.0,692.3 100.0,678.8 109.0,687.6 117.0,686.2 125.0,686.2 132.0,695.7 141.0,689.0 148.0,691.7 156.0,702.5 165.0,694.4 172.0,694.4 179.5,695.0 187.0,712.0 196.0,707.2 203.0,710.0 211.0,714.7 219.0,725.5 227.0,710.0 242.0,692.3 251.0,701.0 258.0,689.6 266.0,691.7 273.0,687.6 282.0,687.6 289.0,690.3 297.0,699.8 305.0,719.5 312.0,709.7 320.0,714.0 328.0,712.5 336.0,719.5 344.0,724.5 351.0,714.6 359.0,721.0 367.0,723.7 375.0,729.4 392.0,711.8 398.0,720.2 406.0,726.6 414.0,730.8 421.0,737.1 429.0,742.0 437.0,737.8 445.0,731.5 453.0,740.0 461.0,743.4 468.0,749.0 476.0,763.8 484.0,760.3 492.0,758.9 500.0,761.0 508.0,766.6 515.0,758.9 523.0,754.0 531.0,756.0 539.0,751.9 547.0,758.0 556.5,777.2 564.5,741.8 572.0,755.2 580.0,759.1 588.0,764.6 595.5,796.0 603.5,793.8 611.0,772.5 619.0,782.7 627.0,775.7 635.0,799.3 643.0,801.6 650.0,802.4 658.0,823.7 666.0,822.9 674.0,833.9 689.0,800.0 697.0,804.0 705.0,827.6 713.0,828.4 720.0,819.7 728.0,826.8 736.0,854.4 744.0,860.7 752.0,843.4 760.0,845.7 768.0,850.4 775.0,842.6 783.0,867.0 791.0,871.7 799.0,868.5 807.0,859.0 815.0,864.6 823.0,881.1" fill="none" stroke="#ff0000" stroke-width="1.3" stroke-linejoin="round" />
<polyline points="41.0,733.6 45.0,746.5 54.0,721.5 62.0,728.0 69.0,725.5 77.0,721.5 85.0,700.5 93.0,702.5 100.0,690.3 109.0,697.8 117.0,695.0 125.0,695.0 132.0,709.3 141.0,698.4 148.0,701.0 156.0,711.3 165.0,702.5 172.0,702.5 179.5,705.9 187.0,724.8 196.0,720.0 203.0,721.5 211.0,732.3 219.0,734.3 227.0,724.0 242.0,705.0 251.0,712.7 258.0,701.8 266.0,699.0 273.0,696.4 282.0,696.4 289.0,698.4 297.0,714.7 305.0,731.5 313.0,720.2 320.0,725.2 328.0,724.5 336.0,729.4 344.0,731.5 351.0,724.5 359.0,732.2 367.0,727.3 375.0,739.2 382.0,730.8 392.0,722.3 398.0,724.5 406.0,730.8 414.0,736.4 421.0,736.4 429.0,746.3 437.0,749.0 445.0,744.1 453.0,741.3 461.0,749.0 468.0,747.7 476.0,764.5 484.0,776.5 492.0,770.2 500.0,769.5 508.0,769.5 515.0,776.5 523.0,766.6 531.0,762.4 539.0,762.4 547.0,762.0 557.0,789.0 564.5,756.0 572.0,765.4 580.0,771.0 588.0,776.4 595.5,811.0 603.5,805.6 611.0,792.2 619.0,799.3 627.0,792.2 635.0,810.3 643.0,814.2 650.0,814.2 658.0,839.4 666.0,835.5 674.0,847.3 682.0,830.8 689.0,813.4 697.0,815.8 705.0,839.4 713.0,841.8 720.0,832.3 728.0,840.2 736.0,869.3 744.0,877.2 752.0,860.7 760.0,859.9 768.0,863.8 775.0,853.6 783.0,870.1 791.0,883.5 799.0,883.5 807.0,873.3 815.0,875.6 823.0,894.5" fill="none" stroke="#0a8a0a" stroke-width="1.3" stroke-linejoin="round" />
<line x1="368" y1="658" x2="368" y2="916" stroke="#0000ff" stroke-width="1.6" />
<line x1="720.5" y1="658" x2="720.5" y2="916" stroke="#ff0000" stroke-width="1.4" />
<path d="M362.2 669.5H370.5V686H377.5L366.3 698.6L354 686H362.2Z" fill="#0000ff"/>
<path d="M715.3 757.5H724V774H731L719.5 786L707.5 774H715.3Z" fill="#ff0000"/>
<line x1="913.5" y1="658" x2="913.5" y2="916" stroke="#f0f0f0" stroke-width="1.3" />
<line x1="913" y1="912.5" x2="925" y2="912.5" stroke="#f0f0f0" stroke-width="1.6" />
<line x1="913" y1="904.3" x2="918" y2="904.3" stroke="#f0f0f0" stroke-width="1.6" />
<line x1="913" y1="896.1" x2="918" y2="896.1" stroke="#f0f0f0" stroke-width="1.6" />
<line x1="913" y1="887.9" x2="918" y2="887.9" stroke="#f0f0f0" stroke-width="1.6" />
<line x1="913" y1="879.7" x2="918" y2="879.7" stroke="#f0f0f0" stroke-width="1.6" />
<line x1="913" y1="871.5" x2="925" y2="871.5" stroke="#f0f0f0" stroke-width="1.6" />
<line x1="913" y1="863.3" x2="918" y2="863.3" stroke="#f0f0f0" stroke-width="1.6" />
<line x1="913" y1="855.1" x2="918" y2="855.1" stroke="#f0f0f0" stroke-width="1.6" />
<line x1="913" y1="846.9" x2="918" y2="846.9" stroke="#f0f0f0" stroke-width="1.6" />
<line x1="913" y1="838.7" x2="918" y2="838.7" stroke="#f0f0f0" stroke-width="1.6" />
<line x1="913" y1="830.5" x2="925" y2="830.5" stroke="#f0f0f0" stroke-width="1.6" />
<line x1="913" y1="822.3" x2="918" y2="822.3" stroke="#f0f0f0" stroke-width="1.6" />
<line x1="913" y1="814.1" x2="918" y2="814.1" stroke="#f0f0f0" stroke-width="1.6" />
<line x1="913" y1="805.9" x2="918" y2="805.9" stroke="#f0f0f0" stroke-width="1.6" />
<line x1="913" y1="797.7" x2="918" y2="797.7" stroke="#f0f0f0" stroke-width="1.6" />
<line x1="913" y1="789.5" x2="925" y2="789.5" stroke="#f0f0f0" stroke-width="1.6" />
<line x1="913" y1="781.3" x2="918" y2="781.3" stroke="#f0f0f0" stroke-width="1.6" />
<line x1="913" y1="773.1" x2="918" y2="773.1" stroke="#f0f0f0" stroke-width="1.6" />
<line x1="913" y1="764.9" x2="918" y2="764.9" stroke="#f0f0f0" stroke-width="1.6" />
<line x1="913" y1="756.7" x2="918" y2="756.7" stroke="#f0f0f0" stroke-width="1.6" />
<line x1="913" y1="748.5" x2="925" y2="748.5" stroke="#f0f0f0" stroke-width="1.6" />
<line x1="913" y1="740.3" x2="918" y2="740.3" stroke="#f0f0f0" stroke-width="1.6" />
<line x1="913" y1="732.1" x2="918" y2="732.1" stroke="#f0f0f0" stroke-width="1.6" />
<line x1="913" y1="723.9" x2="918" y2="723.9" stroke="#f0f0f0" stroke-width="1.6" />
<line x1="913" y1="715.7" x2="918" y2="715.7" stroke="#f0f0f0" stroke-width="1.6" />
<line x1="913" y1="707.5" x2="925" y2="707.5" stroke="#f0f0f0" stroke-width="1.6" />
<line x1="913" y1="699.3" x2="918" y2="699.3" stroke="#f0f0f0" stroke-width="1.6" />
<line x1="913" y1="691.1" x2="918" y2="691.1" stroke="#f0f0f0" stroke-width="1.6" />
<line x1="913" y1="682.9" x2="918" y2="682.9" stroke="#f0f0f0" stroke-width="1.6" />
<line x1="913" y1="674.7" x2="918" y2="674.7" stroke="#f0f0f0" stroke-width="1.6" />
<line x1="913" y1="666.5" x2="918" y2="666.5" stroke="#f0f0f0" stroke-width="1.6" />
</svg>
<div class="t" style="left:941.84px;top:701.45px;font-size:14.00px;line-height:16.10px;color:#f0f0f0;transform:scaleX(1.0700);transform-origin:0 0;"><span style="color:#f0f0f0">1.20</span></div>
<div class="t" style="left:941.84px;top:742.45px;font-size:14.00px;line-height:16.10px;color:#f0f0f0;transform:scaleX(1.0700);transform-origin:0 0;"><span style="color:#f0f0f0">1.15</span></div>
<div class="t" style="left:941.84px;top:783.45px;font-size:14.00px;line-height:16.10px;color:#f0f0f0;transform:scaleX(1.0700);transform-origin:0 0;"><span style="color:#f0f0f0">1.10</span></div>
<div class="t" style="left:941.84px;top:824.45px;font-size:14.00px;line-height:16.10px;color:#f0f0f0;transform:scaleX(1.0700);transform-origin:0 0;"><span style="color:#f0f0f0">1.05</span></div>
<div class="t" style="left:941.84px;top:865.45px;font-size:14.00px;line-height:16.10px;color:#f0f0f0;transform:scaleX(1.0700);transform-origin:0 0;"><span style="color:#f0f0f0">1.00</span></div>
<div class="r" style="left:918.00px;top:873.00px;width:52.50px;height:21.50px;background:#000;border:1px solid #e8e8e8;box-sizing:border-box;"></div>
<div class="t" style="left:920.00px;top:876.24px;font-size:13.50px;line-height:15.52px;color:#ff1010;transform:scaleX(0.9836);transform-origin:0 0;"><span style="color:#ff1010">0.98450</span></div>
<div class="r" style="left:41.00px;top:916.00px;width:872.00px;height:2.00px;background:#c8c8c8;"></div>
<div class="r" style="left:913.00px;top:916.00px;width:63.00px;height:24.00px;background:#ececec;"></div>
<div class="r" style="left:41.00px;top:918.00px;width:872.00px;height:1.50px;background:#e0e0e0;"></div>
<div class="r" style="left:41.00px;top:919.50px;width:872.00px;height:21.00px;background:#000;"></div>
<div class="r" style="left:41.00px;top:939.50px;width:872.00px;height:1.50px;background:#3a3a3a;"></div>
<div class="r" style="left:52.90px;top:919.50px;width:1.50px;height:20.00px;background:#c8c8c8;"></div>
<div class="t" style="left:55.90px;top:921.66px;font-size:14.50px;line-height:16.67px;color:#f2f2f2;transform:scaleX(1.0600);transform-origin:0 0;"><span style="color:#f2f2f2">Nov</span></div>
<div class="r" style="left:84.30px;top:919.50px;width:1.50px;height:20.00px;background:#c8c8c8;"></div>
<div class="t" style="left:87.30px;top:921.66px;font-size:14.50px;line-height:16.67px;color:#f2f2f2;transform:scaleX(1.0600);transform-origin:0 0;"><span style="color:#f2f2f2">Dec</span></div>
<div class="r" style="left:116.00px;top:919.50px;width:1.50px;height:20.00px;background:#c8c8c8;"></div>
<div class="t" style="left:119.00px;top:921.66px;font-size:14.50px;line-height:16.67px;color:#f2f2f2;transform:scaleX(1.0600);transform-origin:0 0;"><span style="color:#f2f2f2">2021</span></div>
<div class="r" style="left:154.30px;top:919.50px;width:1.50px;height:20.00px;background:#c8c8c8;"></div>
<div class="r" style="left:185.40px;top:919.50px;width:1.50px;height:20.00px;background:#c8c8c8;"></div>
<div class="t" style="left:188.40px;top:921.66px;font-size:14.50px;line-height:16.67px;color:#f2f2f2;transform:scaleX(1.0600);transform-origin:0 0;"><span style="color:#f2f2f2">Mar</span></div>
<div class="r" style="left:217.60px;top:919.50px;width:1.50px;height:20.00px;background:#c8c8c8;"></div>
<div class="t" style="left:220.60px;top:921.66px;font-size:14.50px;line-height:16.67px;color:#f2f2f2;transform:scaleX(1.0600);transform-origin:0 0;"><span style="color:#f2f2f2">Apr</span></div>
<div class="r" style="left:257.00px;top:919.50px;width:1.50px;height:20.00px;background:#c8c8c8;"></div>
<div class="t" style="left:260.00px;top:921.66px;font-size:14.50px;line-height:16.67px;color:#f2f2f2;transform:scaleX(1.0600);transform-origin:0 0;"><span style="color:#f2f2f2">May</span></div>
<div class="r" style="left:288.00px;top:919.50px;width:1.50px;height:20.00px;background:#c8c8c8;"></div>
<div class="t" style="left:291.00px;top:921.66px;font-size:14.50px;line-height:16.67px;color:#f2f2f2;transform:scaleX(1.0600);transform-origin:0 0;"><span style="color:#f2f2f2">Jun</span></div>
<div class="r" style="left:318.70px;top:919.50px;width:1.50px;height:20.00px;background:#c8c8c8;"></div>
<div class="t" style="left:321.70px;top:921.66px;font-size:14.50px;line-height:16.67px;color:#f2f2f2;transform:scaleX(1.0600);transform-origin:0 0;"><span style="color:#f2f2f2">Jul</span></div>
<div class="r" style="left:358.40px;top:919.50px;width:1.50px;height:20.00px;background:#c8c8c8;"></div>
<div class="t" style="left:361.40px;top:921.66px;font-size:14.50px;line-height:16.67px;color:#f2f2f2;transform:scaleX(1.0600);transform-origin:0 0;"><span style="color:#f2f2f2">Aug</span></div>
<div class="r" style="left:390.40px;top:919.50px;width:1.50px;height:20.00px;background:#c8c8c8;"></div>
<div class="t" style="left:393.40px;top:921.66px;font-size:14.50px;line-height:16.67px;color:#f2f2f2;transform:scaleX(1.0600);transform-origin:0 0;"><span style="color:#f2f2f2">Sep</span></div>
<div class="r" style="left:421.80px;top:919.50px;width:1.50px;height:20.00px;background:#c8c8c8;"></div>
<div class="r" style="left:460.70px;top:919.50px;width:1.50px;height:20.00px;background:#c8c8c8;"></div>
<div class="t" style="left:463.70px;top:921.66px;font-size:14.50px;line-height:16.67px;color:#f2f2f2;transform:scaleX(1.0600);transform-origin:0 0;"><span style="color:#f2f2f2">Nov</span></div>
<div class="r" style="left:491.80px;top:919.50px;width:1.50px;height:20.00px;background:#c8c8c8;"></div>
<div class="t" style="left:494.80px;top:921.66px;font-size:14.50px;line-height:16.67px;color:#f2f2f2;transform:scaleX(1.0600);transform-origin:0 0;"><span style="color:#f2f2f2">Dec</span></div>
<div class="r" style="left:532.00px;top:919.50px;width:1.50px;height:20.00px;background:#c8c8c8;"></div>
<div class="t" style="left:535.00px;top:921.66px;font-size:14.50px;line-height:16.67px;color:#f2f2f2;transform:scaleX(1.0600);transform-origin:0 0;"><span style="color:#f2f2f2">2022</span></div>
<div class="r" style="left:593.70px;top:919.50px;width:1.50px;height:20.00px;background:#c8c8c8;"></div>
<div class="t" style="left:596.70px;top:921.66px;font-size:14.50px;line-height:16.67px;color:#f2f2f2;transform:scaleX(1.0600);transform-origin:0 0;"><span style="color:#f2f2f2">Mar</span></div>
<div class="r" style="left:624.90px;top:919.50px;width:1.50px;height:20.00px;background:#c8c8c8;"></div>
<div class="t" style="left:627.90px;top:921.66px;font-size:14.50px;line-height:16.67px;color:#f2f2f2;transform:scaleX(1.0600);transform-origin:0 0;"><span style="color:#f2f2f2">Apr</span></div>
<div class="r" style="left:664.00px;top:919.50px;width:1.50px;height:20.00px;background:#c8c8c8;"></div>
<div class="t" style="left:667.00px;top:921.66px;font-size:14.50px;line-height:16.67px;color:#f2f2f2;transform:scaleX(1.0600);transform-origin:0 0;"><span style="color:#f2f2f2">May</span></div>
<div class="r" style="left:696.70px;top:919.50px;width:1.50px;height:20.00px;background:#c8c8c8;"></div>
<div class="t" style="left:699.70px;top:921.66px;font-size:14.50px;line-height:16.67px;color:#f2f2f2;transform:scaleX(1.0600);transform-origin:0 0;"><span style="color:#f2f2f2">Jun</span></div>
<div class="r" style="left:727.50px;top:919.50px;width:1.50px;height:20.00px;background:#c8c8c8;"></div>
<div class="t" style="left:730.50px;top:921.66px;font-size:14.50px;line-height:16.67px;color:#f2f2f2;transform:scaleX(1.0600);transform-origin:0 0;"><span style="color:#f2f2f2">Jul</span></div>
<div class="r" style="left:766.30px;top:919.50px;width:1.50px;height:20.00px;background:#c8c8c8;"></div>
<div class="t" style="left:769.30px;top:921.66px;font-size:14.50px;line-height:16.67px;color:#f2f2f2;transform:scaleX(1.0600);transform-origin:0 0;"><span style="color:#f2f2f2">Aug</span></div>
<div class="r" style="left:797.80px;top:919.50px;width:1.50px;height:20.00px;background:#c8c8c8;"></div>
<div class="t" style="left:800.80px;top:921.66px;font-size:14.50px;line-height:16.67px;color:#f2f2f2;transform:scaleX(1.0600);transform-origin:0 0;"><span style="color:#f2f2f2">Sep</span></div>
<div class="r" style="left:837.50px;top:919.50px;width:1.50px;height:20.00px;background:#c8c8c8;"></div>
<div class="t" style="left:840.50px;top:921.66px;font-size:14.50px;line-height:16.67px;color:#f2f2f2;transform:scaleX(1.0600);transform-origin:0 0;"><span style="color:#f2f2f2">Oct</span></div>
<div class="r" style="left:869.30px;top:919.50px;width:1.50px;height:20.00px;background:#c8c8c8;"></div>
<div class="t" style="left:872.30px;top:921.66px;font-size:14.50px;line-height:16.67px;color:#f2f2f2;transform:scaleX(1.0600);transform-origin:0 0;"><span style="color:#f2f2f2">Nov</span></div>
<div class="r" style="left:900.80px;top:919.50px;width:1.50px;height:20.00px;background:#c8c8c8;"></div>
<div class="t" style="left:903.80px;top:921.66px;font-size:14.50px;line-height:16.67px;color:#f2f2f2;transform:scaleX(1.0600);transform-origin:0 0;"><span style="color:#f2f2f2">D</span></div>
<div class="r" style="left:913.00px;top:918.00px;width:63.00px;height:22.00px;background:#ececec;"></div>
<div class="r" style="left:41.00px;top:940.00px;width:935.00px;height:28.00px;background:#efefef;"></div>
<div class="r" style="left:553.00px;top:951.00px;width:130.00px;height:6.00px;background:#8c8c8c;border-radius:1px;"></div>
<div class="r" style="left:714.00px;top:944.00px;width:19.00px;height:19.00px;background:#e8e8e8;"></div>
<div class="r" style="left:741.00px;top:944.00px;width:19.00px;height:19.00px;background:#e8e8e8;"></div>
<div class="r" style="left:774.00px;top:944.00px;width:19.00px;height:19.00px;background:#e8e8e8;"></div>
<div class="r" style="left:800.00px;top:944.00px;width:19.00px;height:19.00px;background:#e8e8e8;"></div>
<div class="r" style="left:826.00px;top:944.00px;width:19.00px;height:19.00px;background:#e8e8e8;"></div>
<div class="r" style="left:852.00px;top:944.00px;width:19.00px;height:19.00px;background:#e8e8e8;"></div>
<div class="r" style="left:886.00px;top:944.00px;width:19.00px;height:19.00px;background:#e8e8e8;"></div>
<div class="r" style="left:913.00px;top:944.00px;width:19.00px;height:19.00px;background:#e8e8e8;"></div>
<div class="r" style="left:707.00px;top:944.00px;width:1.00px;height:20.00px;background:#9a9a9a;"></div>
<div class="r" style="left:767.00px;top:944.00px;width:1.00px;height:20.00px;background:#9a9a9a;"></div>
<div class="r" style="left:879.50px;top:944.00px;width:1.00px;height:20.00px;background:#9a9a9a;"></div>
<div class="r" style="left:965.50px;top:944.00px;width:1.00px;height:20.00px;background:#9a9a9a;"></div>
<svg style="left:714px;top:943.5px" width="18" height="18" viewBox="0 0 18 18"><path d="M3.2 9.5A6 6 0 0 1 13.5 4.8" stroke="#555" stroke-width="3.2" fill="none"/><path d="M14.8 8.5A6 6 0 0 1 4.5 13.2" stroke="#555" stroke-width="3.2" fill="none"/><path d="M10.5 1.5L17 3.5L14.5 9Z" fill="#555"/><path d="M7.5 16.5L1 14.5L3.5 9Z" fill="#555"/></svg>
<div class="t" style="left:743.39px;top:945.45px;font-size:14.00px;line-height:16.10px;color:#4a4a4a;font-weight:bold;"><span style="color:#4a4a4a">W</span></div>
<svg style="left:777px;top:943.5px" width="12" height="20" viewBox="0 0 12 20"><path d="M6 1L10 6H7.3V14H10L6 19L2 14H4.7V6H2Z" fill="#555"/></svg>
<svg style="left:800px;top:943.5px" width="20" height="20" viewBox="0 0 20 20"><path d="M10 1L13.5 5H11.2V8.8H15V6.5L19 10L15 13.5V11.2H11.2V15H13.5L10 19L6.5 15H8.8V11.2H5V13.5L1 10L5 6.5V8.8H8.8V5H6.5Z" fill="#555"/></svg>
<svg style="left:828px;top:945.5px" width="16" height="16" viewBox="0 0 16 16"><circle cx="8" cy="8" r="6.3" fill="#f4f4f4" stroke="#666" stroke-width="1.5"/><path d="M4.5 8H11.5" stroke="#555" stroke-width="2"/></svg>
<svg style="left:854px;top:945.5px" width="16" height="16" viewBox="0 0 16 16"><circle cx="8" cy="8" r="6.3" fill="#f4f4f4" stroke="#666" stroke-width="1.5"/><path d="M4.5 8H11.5" stroke="#555" stroke-width="2"/><path d="M8 4.5V11.5" stroke="#555" stroke-width="2"/></svg>
<svg style="left:891px;top:946.5px" width="10" height="14" viewBox="0 0 10 14"><path d="M8 1V13L2 7Z" fill="#c4c4c4"/></svg>
<svg style="left:918px;top:946.5px" width="10" height="14" viewBox="0 0 10 14"><path d="M2 1V13L8 7Z" fill="#c4c4c4"/></svg>
<div class="r" style="left:940.00px;top:945.50px;width:15.00px;height:14.00px;background:#fafafa;border:1.5px solid #6a6a6a;border-top-width:3px;box-sizing:border-box;"></div>
<div class="r" style="left:944.00px;top:951.50px;width:9.00px;height:1.40px;background:#777;"></div>
<div class="r" style="left:944.00px;top:954.50px;width:9.00px;height:1.40px;background:#777;"></div>
<div class="r" style="left:944.00px;top:957.50px;width:9.00px;height:1.40px;background:#777;"></div>
<div class="r" style="left:981.00px;top:104.00px;width:936.00px;height:2.00px;background:#e6e6e6;"></div>
<div class="r" style="left:981.00px;top:106.00px;width:936.00px;height:26.00px;background:linear-gradient(#ff9000,#ff9a00 50%,#ffb200);"></div>
<div class="r" style="left:981.00px;top:131.50px;width:936.00px;height:1.00px;background:#6a5a40;"></div>
<div class="t" style="left:997.00px;top:109.51px;font-size:16.50px;line-height:18.97px;color:#1a1208;transform:scaleX(0.8538);transform-origin:0 0;"><span style="color:#1a1208">EURUSD Nova Maquineta.mwl - [EUR=] FOREX EUR=:2 (Bid)</span></div>
<div class="t" style="left:1538.00px;top:110.38px;font-size:15.00px;line-height:17.25px;color:#1a1208;transform:scaleX(0.9169);transform-origin:0 0;"><span style="color:#1a1208">0.98450 (-0.01250)</span></div>
<div class="t" style="left:1802.00px;top:111.38px;font-size:15.00px;line-height:17.25px;color:#1a1208;transform:scaleX(0.9598);transform-origin:0 0;"><span style="color:#1a1208">Daily</span></div>
<div class="r" style="left:1847.00px;top:108.00px;width:63.00px;height:17.00px;background:linear-gradient(#f6f9fb,#d7e3ea 55%,#b7cad6);border:1px solid #a9bfcc;box-sizing:border-box;border-radius:2px;"></div>
<div class="r" style="left:1868.00px;top:109.00px;width:1.00px;height:15.00px;background:#f4f8fa;"></div>
<div class="r" style="left:1889.00px;top:109.00px;width:1.00px;height:15.00px;background:#f4f8fa;"></div>
<div class="r" style="left:1852.00px;top:118.00px;width:11.00px;height:3.00px;background:#4d6473;"></div>
<div class="r" style="left:1873.00px;top:111.00px;width:12.00px;height:9.00px;background:transparent;border:2px solid #4d6473;border-top-width:3px;box-sizing:border-box;"></div>
<svg style="left:1894px;top:110px" width="11" height="11" viewBox="0 0 11 11"><path d="M1.5 1.5L9.5 9.5M9.5 1.5L1.5 9.5" stroke="#4d6473" stroke-width="2.3"/></svg>
<div class="r" style="left:981.00px;top:132.00px;width:936.00px;height:30.00px;background:#dcdcdc;"></div>
<div class="r" style="left:981.00px;top:161.00px;width:936.00px;height:1.00px;background:#b8b8b8;"></div>
<div class="t" style="left:1011.00px;top:136.66px;font-size:14.50px;line-height:16.67px;color:#4c5564;transform:scaleX(0.9881);transform-origin:0 0;">Nova Maquineta Tendência (<span style="color:#34c234">0.0000, </span><span style="color:#ff2020">-1.00000, </span><span style="color:#e8e800">0.0000 </span>)</div>
<div class="r" style="left:1861.00px;top:137.00px;width:21.00px;height:16.00px;background:linear-gradient(#f4f4f4,#e0e0e0);border:1px solid #c4c4c4;box-sizing:border-box;border-radius:2px;"></div>
<div class="r" style="left:1888.50px;top:137.00px;width:21.00px;height:16.00px;background:linear-gradient(#f4f4f4,#e0e0e0);border:1px solid #c4c4c4;box-sizing:border-box;border-radius:2px;"></div>
<div class="r" style="left:1866.00px;top:141.00px;width:11.00px;height:8.00px;background:transparent;border:2px solid #777;border-top-width:3px;box-sizing:border-box;"></div>
<svg style="left:1893.5px;top:139.5px" width="11" height="11" viewBox="0 0 11 11"><path d="M1.5 1.5L9.5 9.5M9.5 1.5L1.5 9.5" stroke="#6e6e6e" stroke-width="2.2"/></svg>
<div class="r" style="left:981.00px;top:224.50px;width:936.00px;height:34.00px;background:#dcdcdc;"></div>
<div class="r" style="left:981.00px;top:224.50px;width:936.00px;height:4.00px;background:#e6e6e6;"></div>
<div class="r" style="left:981.00px;top:228.50px;width:936.00px;height:1.00px;background:#f2f2f2;"></div>
<div class="r" style="left:981.00px;top:257.50px;width:936.00px;height:1.00px;background:#b8b8b8;"></div>
<div class="t" style="left:1011.00px;top:233.16px;font-size:14.50px;line-height:16.67px;color:#4c5564;transform:scaleX(0.9638);transform-origin:0 0;">Maquinet (<span style="color:#f0c020">-0.01862, </span><span style="color:#34c234">-0.01961, </span><span style="color:#ff2020">-0.03039, </span><span style="color:#ff7a2a">-0.06861, </span><span style="color:#f2f2d8">0.09857, </span><span style="color:#f2f2d8">-0.09857, </span><span style="color:#8fc8e0">-1,500.00, 0.0, 0.0 </span>)</div>
<div class="r" style="left:1861.00px;top:233.50px;width:21.00px;height:16.00px;background:linear-gradient(#f4f4f4,#e0e0e0);border:1px solid #c4c4c4;box-sizing:border-box;border-radius:2px;"></div>
<div class="r" style="left:1888.50px;top:233.50px;width:21.00px;height:16.00px;background:linear-gradient(#f4f4f4,#e0e0e0);border:1px solid #c4c4c4;box-sizing:border-box;border-radius:2px;"></div>
<div class="r" style="left:1866.00px;top:237.50px;width:11.00px;height:8.00px;background:transparent;border:2px solid #777;border-top-width:3px;box-sizing:border-box;"></div>
<svg style="left:1893.5px;top:236px" width="11" height="11" viewBox="0 0 11 11"><path d="M1.5 1.5L9.5 9.5M9.5 1.5L1.5 9.5" stroke="#6e6e6e" stroke-width="2.2"/></svg>
<div class="r" style="left:981.00px;top:320.70px;width:936.00px;height:33.80px;background:#dcdcdc;"></div>
<div class="r" style="left:981.00px;top:320.70px;width:936.00px;height:4.00px;background:#e6e6e6;"></div>
<div class="r" style="left:981.00px;top:324.70px;width:936.00px;height:1.00px;background:#f2f2f2;"></div>
<div class="r" style="left:981.00px;top:353.50px;width:936.00px;height:1.00px;background:#b8b8b8;"></div>
<div class="t" style="left:1011.00px;top:329.16px;font-size:14.50px;line-height:16.67px;color:#4c5564;transform:scaleX(0.9802);transform-origin:0 0;">Maquineta Oscilação (<span style="color:#e8e800">4.00000, </span><span style="color:#f2f2d8">-6.11258, </span><span style="color:#202020">0.00, </span><span style="color:#8a1010">-5.00000 </span>)</div>
<div class="r" style="left:1861.00px;top:329.50px;width:21.00px;height:16.00px;background:linear-gradient(#f4f4f4,#e0e0e0);border:1px solid #c4c4c4;box-sizing:border-box;border-radius:2px;"></div>
<div class="r" style="left:1888.50px;top:329.50px;width:21.00px;height:16.00px;background:linear-gradient(#f4f4f4,#e0e0e0);border:1px solid #c4c4c4;box-sizing:border-box;border-radius:2px;"></div>
<div class="r" style="left:1866.00px;top:333.50px;width:11.00px;height:8.00px;background:transparent;border:2px solid #777;border-top-width:3px;box-sizing:border-box;"></div>
<svg style="left:1893.5px;top:332px" width="11" height="11" viewBox="0 0 11 11"><path d="M1.5 1.5L9.5 9.5M9.5 1.5L1.5 9.5" stroke="#6e6e6e" stroke-width="2.2"/></svg>
<div class="r" style="left:981.00px;top:623.00px;width:936.00px;height:34.00px;background:#dcdcdc;"></div>
<div class="r" style="left:981.00px;top:623.00px;width:936.00px;height:4.00px;background:#e6e6e6;"></div>
<div class="r" style="left:981.00px;top:627.00px;width:936.00px;height:1.00px;background:#f2f2f2;"></div>
<div class="r" style="left:981.00px;top:656.00px;width:936.00px;height:1.00px;background:#b8b8b8;"></div>
<div class="t" style="left:1011.00px;top:631.66px;font-size:14.50px;line-height:16.67px;color:#4c5564;transform:scaleX(0.9416);transform-origin:0 0;">EUR= <span style="color:#ff6030">(0.99700, 0.99760, 0.98120, 0.98450, -0.01250)</span>, Forecast (<span style="color:#ff2020">0.98365, </span><span style="color:#20a020">0.97580 </span>)</div>
<div class="r" style="left:1861.00px;top:632.00px;width:21.00px;height:16.00px;background:linear-gradient(#f4f4f4,#e0e0e0);border:1px solid #c4c4c4;box-sizing:border-box;border-radius:2px;"></div>
<div class="r" style="left:1888.50px;top:632.00px;width:21.00px;height:16.00px;background:linear-gradient(#f4f4f4,#e0e0e0);border:1px solid #c4c4c4;box-sizing:border-box;border-radius:2px;"></div>
<div class="r" style="left:1866.00px;top:636.00px;width:11.00px;height:8.00px;background:transparent;border:2px solid #777;border-top-width:3px;box-sizing:border-box;"></div>
<svg style="left:1893.5px;top:634.5px" width="11" height="11" viewBox="0 0 11 11"><path d="M1.5 1.5L9.5 9.5M9.5 1.5L1.5 9.5" stroke="#6e6e6e" stroke-width="2.2"/></svg>
<svg style="left:981px;top:162px" width="936" height="62.5" viewBox="981 162 936 62.5"><rect x="981" y="162" width="936" height="62.5" fill="#033f42"/>
<line x1="1039.34" y1="200" x2="1039.34" y2="220.5" stroke="#ff0000" stroke-width="6" stroke-linecap="round"/><line x1="1047.06" y1="200" x2="1047.06" y2="220.5" stroke="#ff0000" stroke-width="6" stroke-linecap="round"/><line x1="1054.78" y1="200" x2="1054.78" y2="220.5" stroke="#ff0000" stroke-width="6" stroke-linecap="round"/><line x1="1062.5" y1="200" x2="1062.5" y2="220.5" stroke="#ff0000" stroke-width="6" stroke-linecap="round"/><line x1="1070.22" y1="200" x2="1070.22" y2="220.5" stroke="#ff0000" stroke-width="6" stroke-linecap="round"/><line x1="1077.94" y1="200" x2="1077.94" y2="220.5" stroke="#ff0000" stroke-width="6" stroke-linecap="round"/><line x1="1085.66" y1="200" x2="1085.66" y2="220.5" stroke="#ff0000" stroke-width="6" stroke-linecap="round"/><line x1="1093.38" y1="200" x2="1093.38" y2="220.5" stroke="#ff0000" stroke-width="6" stroke-linecap="round"/><line x1="1101.1" y1="200" x2="1101.1" y2="220.5" stroke="#ff0000" stroke-width="6" stroke-linecap="round"/><line x1="1108.82" y1="200" x2="1108.82" y2="220.5" stroke="#ff0000" stroke-width="6" stroke-linecap="round"/><line x1="1116.54" y1="168" x2="1116.54" y2="188" stroke="#33cc33" stroke-width="6" stroke-linecap="round"/><line x1="1124.26" y1="168" x2="1124.26" y2="188" stroke="#33cc33" stroke-width="6" stroke-linecap="round"/><line x1="1131.98" y1="168" x2="1131.98" y2="188" stroke="#33cc33" stroke-width="6" stroke-linecap="round"/><line x1="1139.7" y1="168" x2="1139.7" y2="188" stroke="#33cc33" stroke-width="6" stroke-linecap="round"/><line x1="1147.42" y1="168" x2="1147.42" y2="188" stroke="#33cc33" stroke-width="6" stroke-linecap="round"/><line x1="1155.14" y1="168" x2="1155.14" y2="188" stroke="#33cc33" stroke-width="6" stroke-linecap="round"/><line x1="1162.86" y1="168" x2="1162.86" y2="188" stroke="#33cc33" stroke-width="6" stroke-linecap="round"/><line x1="1170.58" y1="168" x2="1170.58" y2="188" stroke="#33cc33" stroke-width="6" stroke-linecap="round"/><line x1="1178.3" y1="168" x2="1178.3" y2="188" stroke="#33cc33" stroke-width="6" stroke-linecap="round"/><line x1="1186.02" y1="168" x2="1186.02" y2="188" stroke="#33cc33" stroke-width="6" stroke-linecap="round"/><line x1="1193.74" y1="168" x2="1193.74" y2="188" stroke="#33cc33" stroke-width="6" stroke-linecap="round"/><line x1="1201.46" y1="168" x2="1201.46" y2="188" stroke="#33cc33" stroke-width="6" stroke-linecap="round"/><line x1="1209.18" y1="200" x2="1209.18" y2="220.5" stroke="#ff0000" stroke-width="6" stroke-linecap="round"/><line x1="1216.9" y1="200" x2="1216.9" y2="220.5" stroke="#ff0000" stroke-width="6" stroke-linecap="round"/><line x1="1224.62" y1="200" x2="1224.62" y2="220.5" stroke="#ff0000" stroke-width="6" stroke-linecap="round"/><line x1="1232.34" y1="200" x2="1232.34" y2="220.5" stroke="#ff0000" stroke-width="6" stroke-linecap="round"/><line x1="1240.06" y1="200" x2="1240.06" y2="220.5" stroke="#ff0000" stroke-width="6" stroke-linecap="round"/><line x1="1247.78" y1="200" x2="1247.78" y2="220.5" stroke="#ff0000" stroke-width="6" stroke-linecap="round"/><line x1="1255.5" y1="200" x2="1255.5" y2="220.5" stroke="#ff0000" stroke-width="6" stroke-linecap="round"/><line x1="1263.22" y1="200" x2="1263.22" y2="220.5" stroke="#ff0000" stroke-width="6" stroke-linecap="round"/><line x1="1270.94" y1="200" x2="1270.94" y2="220.5" stroke="#ff0000" stroke-width="6" stroke-linecap="round"/><line x1="1278.66" y1="200" x2="1278.66" y2="220.5" stroke="#ff0000" stroke-width="6" stroke-linecap="round"/><line x1="1286.38" y1="200" x2="1286.38" y2="220.5" stroke="#ff0000" stroke-width="6" stroke-linecap="round"/><line x1="1294.1" y1="200" x2="1294.1" y2="220.5" stroke="#ff0000" stroke-width="6" stroke-linecap="round"/><line x1="1301.82" y1="200" x2="1301.82" y2="220.5" stroke="#ff0000" stroke-width="6" stroke-linecap="round"/><line x1="1309.54" y1="200" x2="1309.54" y2="220.5" stroke="#ff0000" stroke-width="6" stroke-linecap="round"/><line x1="1317.26" y1="200" x2="1317.26" y2="220.5" stroke="#ff0000" stroke-width="6" stroke-linecap="round"/><line x1="1324.98" y1="200" x2="1324.98" y2="220.5" stroke="#ff0000" stroke-width="6" stroke-linecap="round"/><line x1="1332.7" y1="200" x2="1332.7" y2="220.5" stroke="#ff0000" stroke-width="6" stroke-linecap="round"/><line x1="1340.42" y1="200" x2="1340.42" y2="220.5" stroke="#ff0000" stroke-width="6" stroke-linecap="round"/><line x1="1348.14" y1="200" x2="1348.14" y2="220.5" stroke="#ff0000" stroke-width="6" stroke-linecap="round"/><line x1="1355.86" y1="200" x2="1355.86" y2="220.5" stroke="#ff0000" stroke-width="6" stroke-linecap="round"/><line x1="1363.58" y1="200" x2="1363.58" y2="220.5" stroke="#ff0000" stroke-width="6" stroke-linecap="round"/><line x1="1371.3" y1="200" x2="1371.3" y2="220.5" stroke="#ff0000" stroke-width="6" stroke-linecap="round"/><line x1="1379.02" y1="200" x2="1379.02" y2="220.5" stroke="#ff0000" stroke-width="6" stroke-linecap="round"/><line x1="1448.5" y1="200" x2="1448.5" y2="220.5" stroke="#ff0000" stroke-width="6" stroke-linecap="round"/><line x1="1456.22" y1="200" x2="1456.22" y2="220.5" stroke="#ff0000" stroke-width="6" stroke-linecap="round"/><line x1="1463.94" y1="200" x2="1463.94" y2="220.5" stroke="#ff0000" stroke-width="6" stroke-linecap="round"/><line x1="1471.66" y1="200" x2="1471.66" y2="220.5" stroke="#ff0000" stroke-width="6" stroke-linecap="round"/><line x1="1479.38" y1="200" x2="1479.38" y2="220.5" stroke="#ff0000" stroke-width="6" stroke-linecap="round"/><line x1="1487.1" y1="200" x2="1487.1" y2="220.5" stroke="#ff0000" stroke-width="6" stroke-linecap="round"/><line x1="1494.82" y1="200" x2="1494.82" y2="220.5" stroke="#ff0000" stroke-width="6" stroke-linecap="round"/><line x1="1502.54" y1="200" x2="1502.54" y2="220.5" stroke="#ff0000" stroke-width="6" stroke-linecap="round"/><line x1="1510.26" y1="200" x2="1510.26" y2="220.5" stroke="#ff0000" stroke-width="6" stroke-linecap="round"/><line x1="1517.98" y1="200" x2="1517.98" y2="220.5" stroke="#ff0000" stroke-width="6" stroke-linecap="round"/><line x1="1525.7" y1="200" x2="1525.7" y2="220.5" stroke="#ff0000" stroke-width="6" stroke-linecap="round"/><line x1="1533.42" y1="168" x2="1533.42" y2="188" stroke="#33cc33" stroke-width="6" stroke-linecap="round"/><line x1="1541.14" y1="168" x2="1541.14" y2="188" stroke="#33cc33" stroke-width="6" stroke-linecap="round"/><line x1="1548.86" y1="168" x2="1548.86" y2="188" stroke="#33cc33" stroke-width="6" stroke-linecap="round"/><line x1="1556.58" y1="168" x2="1556.58" y2="188" stroke="#33cc33" stroke-width="6" stroke-linecap="round"/><line x1="1564.3" y1="168" x2="1564.3" y2="188" stroke="#33cc33" stroke-width="6" stroke-linecap="round"/><line x1="1572.02" y1="168" x2="1572.02" y2="188" stroke="#33cc33" stroke-width="6" stroke-linecap="round"/><line x1="1579.74" y1="168" x2="1579.74" y2="188" stroke="#33cc33" stroke-width="6" stroke-linecap="round"/><line x1="1587.46" y1="200" x2="1587.46" y2="220.5" stroke="#ff0000" stroke-width="6" stroke-linecap="round"/><line x1="1595.18" y1="200" x2="1595.18" y2="220.5" stroke="#ff0000" stroke-width="6" stroke-linecap="round"/><line x1="1602.9" y1="200" x2="1602.9" y2="220.5" stroke="#ff0000" stroke-width="6" stroke-linecap="round"/><line x1="1610.62" y1="200" x2="1610.62" y2="220.5" stroke="#ff0000" stroke-width="6" stroke-linecap="round"/><line x1="1618.34" y1="200" x2="1618.34" y2="220.5" stroke="#ff0000" stroke-width="6" stroke-linecap="round"/><line x1="1626.06" y1="200" x2="1626.06" y2="220.5" stroke="#ff0000" stroke-width="6" stroke-linecap="round"/><line x1="1633.78" y1="200" x2="1633.78" y2="220.5" stroke="#ff0000" stroke-width="6" stroke-linecap="round"/><line x1="1641.5" y1="200" x2="1641.5" y2="220.5" stroke="#ff0000" stroke-width="6" stroke-linecap="round"/><line x1="1649.22" y1="200" x2="1649.22" y2="220.5" stroke="#ff0000" stroke-width="6" stroke-linecap="round"/><line x1="1656.94" y1="200" x2="1656.94" y2="220.5" stroke="#ff0000" stroke-width="6" stroke-linecap="round"/><line x1="1664.66" y1="200" x2="1664.66" y2="220.5" stroke="#ff0000" stroke-width="6" stroke-linecap="round"/><line x1="1672.38" y1="200" x2="1672.38" y2="220.5" stroke="#ff0000" stroke-width="6" stroke-linecap="round"/><line x1="1680.1" y1="200" x2="1680.1" y2="220.5" stroke="#ff0000" stroke-width="6" stroke-linecap="round"/><line x1="1687.82" y1="200" x2="1687.82" y2="220.5" stroke="#ff0000" stroke-width="6" stroke-linecap="round"/><line x1="1695.54" y1="200" x2="1695.54" y2="220.5" stroke="#ff0000" stroke-width="6" stroke-linecap="round"/><line x1="1703.26" y1="200" x2="1703.26" y2="220.5" stroke="#ff0000" stroke-width="6" stroke-linecap="round"/><line x1="1710.98" y1="168" x2="1710.98" y2="188" stroke="#33cc33" stroke-width="6" stroke-linecap="round"/><line x1="1718.7" y1="168" x2="1718.7" y2="188" stroke="#33cc33" stroke-width="6" stroke-linecap="round"/><line x1="1726.42" y1="168" x2="1726.42" y2="188" stroke="#33cc33" stroke-width="6" stroke-linecap="round"/><line x1="1734.14" y1="168" x2="1734.14" y2="188" stroke="#33cc33" stroke-width="6" stroke-linecap="round"/><line x1="1741.86" y1="168" x2="1741.86" y2="188" stroke="#33cc33" stroke-width="6" stroke-linecap="round"/><line x1="1749.58" y1="168" x2="1749.58" y2="188" stroke="#33cc33" stroke-width="6" stroke-linecap="round"/><line x1="1757.3" y1="168" x2="1757.3" y2="188" stroke="#33cc33" stroke-width="6" stroke-linecap="round"/><line x1="1765.02" y1="200" x2="1765.02" y2="220.5" stroke="#ff0000" stroke-width="6" stroke-linecap="round"/>
<line x1="981" y1="194" x2="1767.02" y2="194" stroke="#ffff00" stroke-width="6.3" stroke-linecap="round"/>
<line x1="1709.6" y1="162" x2="1709.6" y2="224.5" stroke="#10d010" stroke-width="1.3" />
<line x1="1764.8" y1="162" x2="1764.8" y2="224.5" stroke="#ff0000" stroke-width="1.3" />
<line x1="1826" y1="162" x2="1826" y2="224.5" stroke="#ff2020" stroke-width="1.3" stroke-dasharray="4 4"/>
<line x1="1853.5" y1="162" x2="1853.5" y2="224.5" stroke="#f0f0f0" stroke-width="1.3" />
<line x1="1853" y1="168" x2="1864" y2="168" stroke="#f0f0f0" stroke-width="1.6" />
<line x1="1853" y1="180.5" x2="1858" y2="180.5" stroke="#f0f0f0" stroke-width="1.6" />
<line x1="1853" y1="194" x2="1864" y2="194" stroke="#f0f0f0" stroke-width="1.6" />
<line x1="1853" y1="208" x2="1858" y2="208" stroke="#f0f0f0" stroke-width="1.6" />
<line x1="1853" y1="220.5" x2="1864" y2="220.5" stroke="#f0f0f0" stroke-width="1.6" />
</svg>
<div class="t" style="left:1903.67px;top:186.95px;font-size:14.00px;line-height:16.10px;color:#f0f0f0;transform:scaleX(1.0700);transform-origin:0 0;"><span style="color:#f0f0f0">0</span></div>
<svg style="left:981px;top:258.5px" width="936" height="62.2" viewBox="981 258.5 936 62.2"><rect x="981" y="258.5" width="936" height="62.2" fill="#00005f"/>
<line x1="981" y1="287.5" x2="1764" y2="287.5" stroke="#ff6a1a" stroke-width="2.2" />
<polyline points="971.0,290.0 978.2,290.0 985.7,275.0 993.2,290.0 1031.5,290.0 1039.0,303.0 1046.5,290.0 1154.8,290.0 1162.3,275.0 1169.8,290.0 1178.2,290.0 1185.7,275.0 1193.2,290.0 1294.3,290.0 1301.8,303.0 1309.3,290.0 1378.5,290.0 1385.0,277.0 1396.0,277.0 1402.5,290.0 1440.5,290.0 1448.0,303.0 1455.5,290.0 1486.5,290.0 1494.0,303.0 1501.5,290.0 1502.0,290.0 1509.5,303.0 1517.0,290.0 1647.5,290.0 1655.0,303.0 1662.5,290.0 1740.5,290.0 1748.0,275.0 1755.5,290.0 1764.0,290.0" fill="none" stroke="#8ccbe0" stroke-width="3.6" stroke-linejoin="round" />
<polyline points="976.0,314.6 1108.4,314.6 1116.4,264.0 1201.2,264.0 1208.0,314.6 1524.6,314.6 1533.0,264.0 1579.7,264.0 1586.9,314.6 1703.0,314.6 1710.0,264.0 1757.0,264.0 1764.0,314.6" fill="none" stroke="#8ccbe0" stroke-width="3.8" stroke-linejoin="round" />
<line x1="1764" y1="290" x2="1853" y2="290" stroke="#ffffff" stroke-width="1.2" />
<line x1="1709.6" y1="258.5" x2="1709.6" y2="320.7" stroke="#10d010" stroke-width="1.3" />
<line x1="1764.8" y1="258.5" x2="1764.8" y2="320.7" stroke="#ff0000" stroke-width="1.3" />
<line x1="1826" y1="258.5" x2="1826" y2="320.7" stroke="#ff2020" stroke-width="1.3" stroke-dasharray="4 4"/>
<line x1="1853.5" y1="258.5" x2="1853.5" y2="320.7" stroke="#f0f0f0" stroke-width="1.3" />
<line x1="1853" y1="264.5" x2="1858" y2="264.5" stroke="#f0f0f0" stroke-width="1.6" />
<line x1="1853" y1="273" x2="1864" y2="273" stroke="#f0f0f0" stroke-width="1.6" />
<line x1="1853" y1="281.5" x2="1858" y2="281.5" stroke="#f0f0f0" stroke-width="1.6" />
<line x1="1853" y1="290" x2="1864" y2="290" stroke="#f0f0f0" stroke-width="1.6" />
<line x1="1853" y1="298" x2="1858" y2="298" stroke="#f0f0f0" stroke-width="1.6" />
<line x1="1853" y1="307" x2="1864" y2="307" stroke="#f0f0f0" stroke-width="1.6" />
<line x1="1853" y1="315.5" x2="1858" y2="315.5" stroke="#f0f0f0" stroke-width="1.6" />
</svg>
<div class="t" style="left:1878.67px;top:266.95px;font-size:14.00px;line-height:16.10px;color:#f0f0f0;transform:scaleX(1.0700);transform-origin:0 0;"><span style="color:#f0f0f0">1000</span></div>
<div class="t" style="left:1903.67px;top:283.95px;font-size:14.00px;line-height:16.10px;color:#f0f0f0;transform:scaleX(1.0700);transform-origin:0 0;"><span style="color:#f0f0f0">0</span></div>
<div class="t" style="left:1873.69px;top:300.95px;font-size:14.00px;line-height:16.10px;color:#f0f0f0;transform:scaleX(1.0700);transform-origin:0 0;"><span style="color:#f0f0f0">-1000</span></div>
<svg style="left:981px;top:354.5px" width="936" height="268.5" viewBox="981 354.5 936 268.5"><rect x="981" y="354.5" width="936" height="268.5" fill="#808080"/>
<line x1="981" y1="485.3" x2="1853" y2="485.3" stroke="#000" stroke-width="1.2" stroke-dasharray="4 3"/>
<line x1="981" y1="520.3" x2="1853" y2="520.3" stroke="#000" stroke-width="1.2" stroke-dasharray="4 3"/>
<line x1="981" y1="556.6" x2="1853" y2="556.6" stroke="#000" stroke-width="1.2" stroke-dasharray="4 3"/>
<line x1="981" y1="593" x2="1853" y2="593" stroke="#000" stroke-width="1.2" stroke-dasharray="4 3"/>
<path d="M981.0,583.3 C983.0,581.1 987.5,573.9 993.0,570.4 C998.5,566.9 1007.2,564.0 1013.7,562.0 C1020.2,560.0 1026.1,557.1 1031.9,558.7 C1037.7,560.3 1044.9,569.8 1048.7,571.7 C1052.5,573.7 1049.2,575.6 1055.0,570.4 C1060.8,565.2 1075.9,550.3 1083.7,540.6 C1091.5,530.9 1096.7,517.3 1101.9,512.0 C1107.1,506.7 1109.6,509.6 1114.8,508.7 C1120.0,507.8 1127.4,505.0 1133.0,506.9 C1138.6,508.8 1140.7,516.6 1148.5,519.8 C1156.3,523.0 1171.8,523.9 1179.6,526.3 C1187.4,528.7 1189.6,526.2 1195.2,534.0 C1200.8,541.8 1208.5,565.7 1213.3,573.0 C1218.0,580.3 1220.2,578.9 1223.7,578.0 C1227.2,577.1 1227.1,572.5 1234.0,567.8 C1240.9,563.1 1255.7,554.1 1265.2,549.6 C1274.7,545.1 1282.5,539.3 1291.1,540.6 C1299.7,541.9 1308.3,549.8 1317.0,557.4 C1325.7,565.0 1334.3,578.9 1343.0,586.0 C1351.7,593.1 1362.0,598.1 1368.9,600.2 C1375.8,602.4 1376.0,607.8 1384.5,598.9 C1393.0,590.0 1413.3,556.2 1420.0,547.0 C1426.7,537.8 1420.5,544.7 1424.4,543.7 C1428.3,542.7 1439.0,541.0 1443.3,541.0 C1447.6,541.0 1443.7,545.7 1450.0,543.7 C1456.3,541.7 1472.7,530.6 1481.0,528.8 C1489.3,527.0 1493.2,532.0 1500.0,532.8 C1506.8,533.6 1515.1,535.9 1521.9,533.6 C1528.7,531.4 1535.8,520.6 1540.8,519.3 C1545.8,518.0 1548.5,522.6 1551.7,526.0 C1554.9,529.4 1554.4,535.1 1559.8,539.6 C1565.2,544.1 1577.9,547.7 1584.2,553.1 C1590.5,558.5 1593.6,568.0 1597.7,572.1 C1601.8,576.2 1603.2,577.5 1608.6,577.5 C1614.0,577.5 1623.4,576.4 1630.2,572.1 C1637.0,567.8 1641.1,553.1 1649.2,551.8 C1657.3,550.4 1671.3,564.2 1679.0,564.0 C1686.7,563.8 1690.2,556.3 1695.2,550.4 C1700.2,544.5 1703.8,531.0 1708.8,528.8 C1713.8,526.6 1718.7,535.2 1725.0,537.0 C1731.3,538.8 1740.4,538.0 1746.7,539.6 C1753.0,541.2 1760.3,545.3 1763.0,546.4" fill="none" stroke="#f4f0d4" stroke-width="1.2"/>
<polyline points="981.0,536.0 990.0,542.0 1000.0,536.0 1013.0,538.0 1020.0,536.0 1035.0,534.0 1046.0,532.0 1060.0,530.0 1065.0,540.0 1075.0,544.0 1083.0,540.0 1100.0,546.0 1108.0,546.0 1118.0,540.0 1125.0,545.0 1135.0,543.0 1148.0,534.0 1160.0,541.0 1168.0,538.0 1190.0,544.0 1205.0,532.0 1215.0,532.0 1222.0,536.0 1232.0,538.0 1240.0,532.0 1255.0,541.0 1265.0,544.0 1272.0,537.0 1283.0,540.0 1295.0,531.0 1310.0,531.0 1325.0,534.0 1330.0,531.0 1370.0,531.0 1385.0,536.0 1395.0,542.0 1415.0,544.0 1424.0,546.0 1443.0,541.0 1460.0,537.0 1472.0,542.0 1486.0,543.0 1500.0,534.0 1510.0,540.0 1530.0,545.0 1545.0,541.0 1558.0,532.0 1603.0,532.0 1616.7,538.0 1633.0,543.0 1649.0,543.0 1657.0,536.0 1676.0,532.0 1687.0,546.0 1711.5,546.0 1725.0,536.0 1738.6,536.0 1748.0,542.0 1754.8,532.0 1764.0,532.0" fill="none" stroke="#eeee00" stroke-width="1.5" stroke-linejoin="round" />
<polyline points="981.0,520.0 985.0,538.5 1046.0,538.5 1054.4,529.4 1062.0,538.5 1114.8,538.5 1123.9,556.0 1131.7,539.8 1139.4,556.0 1147.2,538.5 1224.0,538.5 1232.8,508.0 1239.3,538.5 1370.0,538.5 1378.0,503.0 1385.0,538.5 1455.0,538.5 1463.7,529.3 1471.0,538.5 1478.0,538.5 1486.7,547.7 1494.8,538.5 1540.8,538.5 1548.4,547.2 1556.5,538.5 1602.0,538.5 1610.7,508.4 1616.7,538.5 1710.0,538.5 1718.3,545.0 1726.4,538.5 1764.3,538.5" fill="none" stroke="#000000" stroke-width="2.3" stroke-linejoin="round" />
<polyline points="981.0,385.0 1046.0,385.0 1055.2,376.0 1115.3,376.0 1123.9,556.0 1131.7,556.0 1138.7,575.6 1223.7,575.6 1232.8,503.0 1370.2,503.0 1378.5,467.2 1455.5,467.2 1463.7,457.8 1478.5,457.8 1486.0,547.7 1540.8,547.7 1547.6,557.2 1601.8,557.2 1610.0,503.0 1708.8,503.0 1718.3,548.3 1764.3,548.3" fill="none" stroke="#8c0000" stroke-width="3.8" stroke-linejoin="round" />
<line x1="1709.6" y1="354.5" x2="1709.6" y2="623" stroke="#10d010" stroke-width="1.3" />
<line x1="1764.8" y1="354.5" x2="1764.8" y2="623" stroke="#ff0000" stroke-width="1.3" />
<line x1="1826" y1="354.5" x2="1826" y2="623" stroke="#ff2020" stroke-width="1.3" stroke-dasharray="4 4"/>
<line x1="1853.5" y1="354.5" x2="1853.5" y2="623" stroke="#f0f0f0" stroke-width="1.3" />
<line x1="1853" y1="619.71" x2="1858" y2="619.71" stroke="#f0f0f0" stroke-width="1.6" />
<line x1="1853" y1="610.72" x2="1864" y2="610.72" stroke="#f0f0f0" stroke-width="1.6" />
<line x1="1853" y1="601.73" x2="1858" y2="601.73" stroke="#f0f0f0" stroke-width="1.6" />
<line x1="1853" y1="592.74" x2="1864" y2="592.74" stroke="#f0f0f0" stroke-width="1.6" />
<line x1="1853" y1="583.75" x2="1858" y2="583.75" stroke="#f0f0f0" stroke-width="1.6" />
<line x1="1853" y1="574.76" x2="1864" y2="574.76" stroke="#f0f0f0" stroke-width="1.6" />
<line x1="1853" y1="565.77" x2="1858" y2="565.77" stroke="#f0f0f0" stroke-width="1.6" />
<line x1="1853" y1="556.78" x2="1864" y2="556.78" stroke="#f0f0f0" stroke-width="1.6" />
<line x1="1853" y1="547.79" x2="1858" y2="547.79" stroke="#f0f0f0" stroke-width="1.6" />
<line x1="1853" y1="538.8" x2="1864" y2="538.8" stroke="#f0f0f0" stroke-width="1.6" />
<line x1="1853" y1="529.81" x2="1858" y2="529.81" stroke="#f0f0f0" stroke-width="1.6" />
<line x1="1853" y1="520.82" x2="1864" y2="520.82" stroke="#f0f0f0" stroke-width="1.6" />
<line x1="1853" y1="511.83" x2="1858" y2="511.83" stroke="#f0f0f0" stroke-width="1.6" />
<line x1="1853" y1="502.84" x2="1864" y2="502.84" stroke="#f0f0f0" stroke-width="1.6" />
<line x1="1853" y1="493.85" x2="1858" y2="493.85" stroke="#f0f0f0" stroke-width="1.6" />
<line x1="1853" y1="484.86" x2="1864" y2="484.86" stroke="#f0f0f0" stroke-width="1.6" />
<line x1="1853" y1="475.87" x2="1858" y2="475.87" stroke="#f0f0f0" stroke-width="1.6" />
<line x1="1853" y1="466.88" x2="1864" y2="466.88" stroke="#f0f0f0" stroke-width="1.6" />
<line x1="1853" y1="457.89" x2="1858" y2="457.89" stroke="#f0f0f0" stroke-width="1.6" />
<line x1="1853" y1="448.9" x2="1864" y2="448.9" stroke="#f0f0f0" stroke-width="1.6" />
<line x1="1853" y1="439.91" x2="1858" y2="439.91" stroke="#f0f0f0" stroke-width="1.6" />
<line x1="1853" y1="430.92" x2="1864" y2="430.92" stroke="#f0f0f0" stroke-width="1.6" />
<line x1="1853" y1="421.93" x2="1858" y2="421.93" stroke="#f0f0f0" stroke-width="1.6" />
<line x1="1853" y1="412.94" x2="1864" y2="412.94" stroke="#f0f0f0" stroke-width="1.6" />
<line x1="1853" y1="403.95" x2="1858" y2="403.95" stroke="#f0f0f0" stroke-width="1.6" />
<line x1="1853" y1="394.96" x2="1864" y2="394.96" stroke="#f0f0f0" stroke-width="1.6" />
<line x1="1853" y1="385.97" x2="1858" y2="385.97" stroke="#f0f0f0" stroke-width="1.6" />
<line x1="1853" y1="376.98" x2="1864" y2="376.98" stroke="#f0f0f0" stroke-width="1.6" />
<line x1="1853" y1="367.99" x2="1858" y2="367.99" stroke="#f0f0f0" stroke-width="1.6" />
<line x1="1853" y1="359" x2="1864" y2="359" stroke="#f0f0f0" stroke-width="1.6" />
</svg>
<div class="t" style="left:1895.34px;top:370.93px;font-size:14.00px;line-height:16.10px;color:#f0f0f0;transform:scaleX(1.0700);transform-origin:0 0;"><span style="color:#f0f0f0">90</span></div>
<div class="t" style="left:1895.34px;top:388.91px;font-size:14.00px;line-height:16.10px;color:#f0f0f0;transform:scaleX(1.0700);transform-origin:0 0;"><span style="color:#f0f0f0">80</span></div>
<div class="t" style="left:1895.34px;top:406.89px;font-size:14.00px;line-height:16.10px;color:#f0f0f0;transform:scaleX(1.0700);transform-origin:0 0;"><span style="color:#f0f0f0">70</span></div>
<div class="t" style="left:1895.34px;top:424.87px;font-size:14.00px;line-height:16.10px;color:#f0f0f0;transform:scaleX(1.0700);transform-origin:0 0;"><span style="color:#f0f0f0">60</span></div>
<div class="t" style="left:1895.34px;top:442.85px;font-size:14.00px;line-height:16.10px;color:#f0f0f0;transform:scaleX(1.0700);transform-origin:0 0;"><span style="color:#f0f0f0">50</span></div>
<div class="t" style="left:1895.34px;top:460.83px;font-size:14.00px;line-height:16.10px;color:#f0f0f0;transform:scaleX(1.0700);transform-origin:0 0;"><span style="color:#f0f0f0">40</span></div>
<div class="t" style="left:1895.34px;top:478.81px;font-size:14.00px;line-height:16.10px;color:#f0f0f0;transform:scaleX(1.0700);transform-origin:0 0;"><span style="color:#f0f0f0">30</span></div>
<div class="t" style="left:1895.34px;top:496.79px;font-size:14.00px;line-height:16.10px;color:#f0f0f0;transform:scaleX(1.0700);transform-origin:0 0;"><span style="color:#f0f0f0">20</span></div>
<div class="t" style="left:1895.34px;top:514.77px;font-size:14.00px;line-height:16.10px;color:#f0f0f0;transform:scaleX(1.0700);transform-origin:0 0;"><span style="color:#f0f0f0">10</span></div>
<div class="t" style="left:1903.67px;top:532.75px;font-size:14.00px;line-height:16.10px;color:#f0f0f0;transform:scaleX(1.0700);transform-origin:0 0;"><span style="color:#f0f0f0">0</span></div>
<div class="t" style="left:1890.35px;top:550.73px;font-size:14.00px;line-height:16.10px;color:#f0f0f0;transform:scaleX(1.0700);transform-origin:0 0;"><span style="color:#f0f0f0">-10</span></div>
<div class="t" style="left:1890.35px;top:568.71px;font-size:14.00px;line-height:16.10px;color:#f0f0f0;transform:scaleX(1.0700);transform-origin:0 0;"><span style="color:#f0f0f0">-20</span></div>
<div class="t" style="left:1890.35px;top:586.69px;font-size:14.00px;line-height:16.10px;color:#f0f0f0;transform:scaleX(1.0700);transform-origin:0 0;"><span style="color:#f0f0f0">-30</span></div>
<div class="t" style="left:1890.35px;top:604.67px;font-size:14.00px;line-height:16.10px;color:#f0f0f0;transform:scaleX(1.0700);transform-origin:0 0;"><span style="color:#f0f0f0">-40</span></div>
<svg style="left:981px;top:657px" width="936" height="239" viewBox="981 657 936 239"><rect x="981" y="657" width="936" height="239" fill="#000"/>
<line x1="985.3" y1="723.307" x2="985.3" y2="735.514" stroke="#8fa9cc" stroke-width="1.3" /><rect x="982.9" y="729.5" width="4.8" height="3.0" fill="#000" stroke="#8fa9cc" stroke-width="1.3"/><line x1="993.02" y1="702.962" x2="993.02" y2="720.863" stroke="#8fa9cc" stroke-width="1.3" /><rect x="990.6" y="708.1" width="4.8" height="10.5" fill="#000" stroke="#8fa9cc" stroke-width="1.3"/><line x1="1000.74" y1="710.841" x2="1000.74" y2="736.666" stroke="#ff6d22" stroke-width="1.3" /><rect x="997.7" y="716.2" width="6" height="13.9" fill="#ff6d22"/><line x1="1008.46" y1="714.978" x2="1008.46" y2="731.749" stroke="#8fa9cc" stroke-width="1.3" /><rect x="1006.1" y="718.1" width="4.8" height="12.0" fill="#000" stroke="#8fa9cc" stroke-width="1.3"/><line x1="1016.18" y1="712.248" x2="1016.18" y2="736.348" stroke="#ff6d22" stroke-width="1.3" /><rect x="1013.2" y="718.1" width="6" height="17.0" fill="#ff6d22"/><line x1="1023.9" y1="727.301" x2="1023.9" y2="749.973" stroke="#ff6d22" stroke-width="1.3" /><rect x="1020.9" y="735.1" width="6" height="9.3" fill="#ff6d22"/><line x1="1031.62" y1="736.422" x2="1031.62" y2="745.5" stroke="#8fa9cc" stroke-width="1.3" /><rect x="1029.2" y="738.5" width="4.8" height="5.9" fill="#000" stroke="#8fa9cc" stroke-width="1.3"/><line x1="1039.34" y1="750.003" x2="1039.34" y2="768.116" stroke="#ff6d22" stroke-width="1.3" /><rect x="1036.3" y="751.4" width="6" height="14.4" fill="#ff6d22"/><line x1="1047.06" y1="747.482" x2="1047.06" y2="770.032" stroke="#8fa9cc" stroke-width="1.3" /><rect x="1044.7" y="748.7" width="4.8" height="17.1" fill="#000" stroke="#8fa9cc" stroke-width="1.3"/><line x1="1054.78" y1="739.296" x2="1054.78" y2="753.326" stroke="#8fa9cc" stroke-width="1.3" /><rect x="1052.4" y="745.9" width="4.8" height="3.0" fill="#000" stroke="#8fa9cc" stroke-width="1.3"/><line x1="1062.5" y1="718.028" x2="1062.5" y2="736.617" stroke="#8fa9cc" stroke-width="1.3" /><rect x="1060.1" y="722.5" width="4.8" height="8.5" fill="#000" stroke="#8fa9cc" stroke-width="1.3"/><line x1="1070.22" y1="725.373" x2="1070.22" y2="748.855" stroke="#ff6d22" stroke-width="1.3" /><rect x="1067.2" y="728.3" width="6" height="12.6" fill="#ff6d22"/><line x1="1077.94" y1="720.205" x2="1077.94" y2="734.625" stroke="#8fa9cc" stroke-width="1.3" /><rect x="1075.5" y="726.4" width="4.8" height="3.0" fill="#000" stroke="#8fa9cc" stroke-width="1.3"/><line x1="1085.66" y1="718.148" x2="1085.66" y2="730.11" stroke="#8fa9cc" stroke-width="1.3" /><rect x="1083.3" y="720.8" width="4.8" height="6.3" fill="#000" stroke="#8fa9cc" stroke-width="1.3"/><line x1="1093.38" y1="679.236" x2="1093.38" y2="708.953" stroke="#8fa9cc" stroke-width="1.3" /><rect x="1091.0" y="685.6" width="4.8" height="19.6" fill="#000" stroke="#8fa9cc" stroke-width="1.3"/><line x1="1101.1" y1="681.894" x2="1101.1" y2="703.787" stroke="#ff6d22" stroke-width="1.3" /><rect x="1098.1" y="685.6" width="6" height="10.5" fill="#ff6d22"/><line x1="1108.82" y1="695.077" x2="1108.82" y2="715.421" stroke="#ff6d22" stroke-width="1.3" /><rect x="1105.8" y="696.1" width="6" height="16.9" fill="#ff6d22"/><line x1="1116.54" y1="699.252" x2="1116.54" y2="714.833" stroke="#8fa9cc" stroke-width="1.3" /><rect x="1114.1" y="703.5" width="4.8" height="3.4" fill="#000" stroke="#8fa9cc" stroke-width="1.3"/><line x1="1124.26" y1="689.841" x2="1124.26" y2="707.956" stroke="#8fa9cc" stroke-width="1.3" /><rect x="1121.9" y="691.4" width="4.8" height="11.2" fill="#000" stroke="#8fa9cc" stroke-width="1.3"/><line x1="1131.98" y1="684.633" x2="1131.98" y2="692.962" stroke="#8fa9cc" stroke-width="1.3" /><rect x="1129.6" y="687.5" width="4.8" height="3.8" fill="#000" stroke="#8fa9cc" stroke-width="1.3"/><line x1="1139.7" y1="680.711" x2="1139.7" y2="700.515" stroke="#ff6d22" stroke-width="1.3" /><rect x="1136.7" y="688.5" width="6" height="5.7" fill="#ff6d22"/><line x1="1147.42" y1="692.255" x2="1147.42" y2="701.198" stroke="#ff6d22" stroke-width="1.3" /><rect x="1144.4" y="695.0" width="6" height="4.5" fill="#ff6d22"/><line x1="1155.14" y1="673.418" x2="1155.14" y2="701.734" stroke="#8fa9cc" stroke-width="1.3" /><rect x="1152.7" y="680.0" width="4.8" height="19.5" fill="#000" stroke="#8fa9cc" stroke-width="1.3"/><line x1="1162.86" y1="682.508" x2="1162.86" y2="699.479" stroke="#ff6d22" stroke-width="1.3" /><rect x="1159.9" y="686.6" width="6" height="10.5" fill="#ff6d22"/><line x1="1170.58" y1="695.227" x2="1170.58" y2="711.103" stroke="#ff6d22" stroke-width="1.3" /><rect x="1167.6" y="697.1" width="6" height="8.5" fill="#ff6d22"/><line x1="1178.3" y1="692.385" x2="1178.3" y2="708.087" stroke="#8fa9cc" stroke-width="1.3" /><rect x="1175.9" y="696.3" width="4.8" height="9.3" fill="#000" stroke="#8fa9cc" stroke-width="1.3"/><line x1="1186.02" y1="683.944" x2="1186.02" y2="702.954" stroke="#8fa9cc" stroke-width="1.3" /><rect x="1183.6" y="691.7" width="4.8" height="4.6" fill="#000" stroke="#8fa9cc" stroke-width="1.3"/><line x1="1193.74" y1="692.306" x2="1193.74" y2="711.304" stroke="#ff6d22" stroke-width="1.3" /><rect x="1190.7" y="699.5" width="6" height="9.3" fill="#ff6d22"/><line x1="1201.46" y1="712.429" x2="1201.46" y2="737.523" stroke="#ff6d22" stroke-width="1.3" /><rect x="1198.5" y="719.4" width="6" height="12.6" fill="#ff6d22"/><line x1="1209.18" y1="740.795" x2="1209.18" y2="754.653" stroke="#ff6d22" stroke-width="1.3" /><rect x="1206.2" y="748.7" width="6" height="3.4" fill="#ff6d22"/><line x1="1216.9" y1="741.421" x2="1216.9" y2="755.463" stroke="#8fa9cc" stroke-width="1.3" /><rect x="1214.5" y="747.8" width="4.8" height="4.3" fill="#000" stroke="#8fa9cc" stroke-width="1.3"/><line x1="1224.62" y1="737.797" x2="1224.62" y2="749.46" stroke="#8fa9cc" stroke-width="1.3" /><rect x="1222.2" y="739.3" width="4.8" height="8.5" fill="#000" stroke="#8fa9cc" stroke-width="1.3"/><line x1="1232.34" y1="720.544" x2="1232.34" y2="741.779" stroke="#8fa9cc" stroke-width="1.3" /><rect x="1229.9" y="723.2" width="4.8" height="13.3" fill="#000" stroke="#8fa9cc" stroke-width="1.3"/><line x1="1240.06" y1="719.072" x2="1240.06" y2="740.075" stroke="#ff6d22" stroke-width="1.3" /><rect x="1237.1" y="723.2" width="6" height="9.1" fill="#ff6d22"/><line x1="1247.78" y1="727.34" x2="1247.78" y2="741.945" stroke="#ff6d22" stroke-width="1.3" /><rect x="1244.8" y="732.4" width="6" height="2.5" fill="#ff6d22"/><line x1="1255.5" y1="720" x2="1255.5" y2="742.238" stroke="#8fa9cc" stroke-width="1.3" /><rect x="1253.1" y="722.1" width="4.8" height="12.8" fill="#000" stroke="#8fa9cc" stroke-width="1.3"/><line x1="1263.22" y1="719.333" x2="1263.22" y2="733.489" stroke="#ff6d22" stroke-width="1.3" /><rect x="1260.2" y="722.1" width="6" height="9.1" fill="#ff6d22"/><line x1="1270.94" y1="723.577" x2="1270.94" y2="740.78" stroke="#ff6d22" stroke-width="1.3" /><rect x="1267.9" y="731.2" width="6" height="7.2" fill="#ff6d22"/><line x1="1278.66" y1="727.436" x2="1278.66" y2="742.145" stroke="#8fa9cc" stroke-width="1.3" /><rect x="1276.3" y="734.3" width="4.8" height="3.0" fill="#000" stroke="#8fa9cc" stroke-width="1.3"/><line x1="1286.38" y1="716.154" x2="1286.38" y2="733.141" stroke="#8fa9cc" stroke-width="1.3" /><rect x="1284.0" y="717.9" width="4.8" height="14.0" fill="#000" stroke="#8fa9cc" stroke-width="1.3"/><line x1="1294.1" y1="716.441" x2="1294.1" y2="748.61" stroke="#ff6d22" stroke-width="1.3" /><rect x="1291.1" y="719.1" width="6" height="23.6" fill="#ff6d22"/><line x1="1301.82" y1="735.912" x2="1301.82" y2="751.488" stroke="#ff6d22" stroke-width="1.3" /><rect x="1298.8" y="742.7" width="6" height="3.6" fill="#ff6d22"/><line x1="1309.54" y1="734.587" x2="1309.54" y2="752.355" stroke="#8fa9cc" stroke-width="1.3" /><rect x="1307.1" y="736.8" width="4.8" height="9.5" fill="#000" stroke="#8fa9cc" stroke-width="1.3"/><line x1="1317.26" y1="734.391" x2="1317.26" y2="744.556" stroke="#ff6d22" stroke-width="1.3" /><rect x="1314.3" y="737.0" width="6" height="2.7" fill="#ff6d22"/><line x1="1324.98" y1="740.95" x2="1324.98" y2="761.428" stroke="#ff6d22" stroke-width="1.3" /><rect x="1322.0" y="746.2" width="6" height="12.2" fill="#ff6d22"/><line x1="1332.7" y1="777.512" x2="1332.7" y2="797.894" stroke="#ff6d22" stroke-width="1.3" /><rect x="1329.7" y="779.9" width="6" height="16.8" fill="#ff6d22"/><line x1="1340.42" y1="792.658" x2="1340.42" y2="799.177" stroke="#ff6d22" stroke-width="1.3" /><rect x="1337.4" y="795.8" width="6" height="3.0" fill="#ff6d22"/><line x1="1348.14" y1="791.705" x2="1348.14" y2="802.759" stroke="#8fa9cc" stroke-width="1.3" /><rect x="1345.7" y="795.0" width="4.8" height="3.0" fill="#000" stroke="#8fa9cc" stroke-width="1.3"/><line x1="1355.86" y1="782.381" x2="1355.86" y2="802.523" stroke="#8fa9cc" stroke-width="1.3" /><rect x="1353.5" y="785.9" width="4.8" height="9.4" fill="#000" stroke="#8fa9cc" stroke-width="1.3"/><line x1="1363.58" y1="810.231" x2="1363.58" y2="846.541" stroke="#ff6d22" stroke-width="1.3" /><rect x="1360.6" y="815.8" width="6" height="24.9" fill="#ff6d22"/><line x1="1371.3" y1="826.565" x2="1371.3" y2="838.786" stroke="#8fa9cc" stroke-width="1.3" /><rect x="1368.9" y="828.5" width="4.8" height="9.0" fill="#000" stroke="#8fa9cc" stroke-width="1.3"/><line x1="1379.02" y1="799.385" x2="1379.02" y2="834.454" stroke="#8fa9cc" stroke-width="1.3" /><rect x="1376.6" y="806.8" width="4.8" height="21.8" fill="#000" stroke="#8fa9cc" stroke-width="1.3"/><line x1="1386.74" y1="812.651" x2="1386.74" y2="846.728" stroke="#ff6d22" stroke-width="1.3" /><rect x="1383.7" y="813.8" width="6" height="27.5" fill="#ff6d22"/><line x1="1394.46" y1="807.408" x2="1394.46" y2="832.322" stroke="#8fa9cc" stroke-width="1.3" /><rect x="1392.1" y="813.5" width="4.8" height="15.6" fill="#000" stroke="#8fa9cc" stroke-width="1.3"/><line x1="1402.18" y1="809.439" x2="1402.18" y2="817.293" stroke="#8fa9cc" stroke-width="1.3" /><rect x="1399.8" y="810.2" width="4.8" height="3.0" fill="#000" stroke="#8fa9cc" stroke-width="1.3"/><line x1="1409.9" y1="781.416" x2="1409.9" y2="803.06" stroke="#8fa9cc" stroke-width="1.3" /><rect x="1407.5" y="788.7" width="4.8" height="8.2" fill="#000" stroke="#8fa9cc" stroke-width="1.3"/><line x1="1417.62" y1="782.164" x2="1417.62" y2="810.362" stroke="#ff6d22" stroke-width="1.3" /><rect x="1414.6" y="788.7" width="6" height="14.2" fill="#ff6d22"/><line x1="1425.34" y1="775.347" x2="1425.34" y2="808.206" stroke="#8fa9cc" stroke-width="1.3" /><rect x="1422.9" y="781.1" width="4.8" height="19.8" fill="#000" stroke="#8fa9cc" stroke-width="1.3"/><line x1="1433.06" y1="777.223" x2="1433.06" y2="807.981" stroke="#ff6d22" stroke-width="1.3" /><rect x="1430.1" y="781.1" width="6" height="20.3" fill="#ff6d22"/><line x1="1440.78" y1="792.223" x2="1440.78" y2="806.822" stroke="#8fa9cc" stroke-width="1.3" /><rect x="1438.4" y="797.2" width="4.8" height="4.2" fill="#000" stroke="#8fa9cc" stroke-width="1.3"/><line x1="1448.5" y1="792.154" x2="1448.5" y2="809.737" stroke="#ff6d22" stroke-width="1.3" /><rect x="1445.5" y="797.2" width="6" height="7.2" fill="#ff6d22"/><line x1="1456.22" y1="775.265" x2="1456.22" y2="812.428" stroke="#8fa9cc" stroke-width="1.3" /><rect x="1453.8" y="780.7" width="4.8" height="23.7" fill="#000" stroke="#8fa9cc" stroke-width="1.3"/><line x1="1463.94" y1="775.133" x2="1463.94" y2="804.702" stroke="#ff6d22" stroke-width="1.3" /><rect x="1460.9" y="781.2" width="6" height="19.8" fill="#ff6d22"/><line x1="1471.66" y1="787.002" x2="1471.66" y2="804.384" stroke="#8fa9cc" stroke-width="1.3" /><rect x="1469.3" y="792.1" width="4.8" height="8.2" fill="#000" stroke="#8fa9cc" stroke-width="1.3"/><line x1="1479.38" y1="786.857" x2="1479.38" y2="798.32" stroke="#8fa9cc" stroke-width="1.3" /><rect x="1477.0" y="788.4" width="4.8" height="3.6" fill="#000" stroke="#8fa9cc" stroke-width="1.3"/><line x1="1487.1" y1="783.234" x2="1487.1" y2="793.537" stroke="#ff6d22" stroke-width="1.3" /><rect x="1484.1" y="787.3" width="6" height="3.0" fill="#ff6d22"/><line x1="1494.82" y1="785.782" x2="1494.82" y2="801.563" stroke="#ff6d22" stroke-width="1.3" /><rect x="1491.8" y="791.7" width="6" height="5.4" fill="#ff6d22"/><line x1="1502.54" y1="776.108" x2="1502.54" y2="796.161" stroke="#8fa9cc" stroke-width="1.3" /><rect x="1500.1" y="783.6" width="4.8" height="9.8" fill="#000" stroke="#8fa9cc" stroke-width="1.3"/><line x1="1510.26" y1="781.113" x2="1510.26" y2="791.003" stroke="#ff6d22" stroke-width="1.3" /><rect x="1507.3" y="783.2" width="6" height="3.0" fill="#ff6d22"/><line x1="1517.98" y1="783.069" x2="1517.98" y2="796.787" stroke="#ff6d22" stroke-width="1.3" /><rect x="1515.0" y="785.3" width="6" height="4.2" fill="#ff6d22"/><line x1="1525.7" y1="785.353" x2="1525.7" y2="800.019" stroke="#ff6d22" stroke-width="1.3" /><rect x="1522.7" y="789.4" width="6" height="3.3" fill="#ff6d22"/><line x1="1533.42" y1="760.24" x2="1533.42" y2="781.74" stroke="#8fa9cc" stroke-width="1.3" /><rect x="1531.0" y="765.9" width="4.8" height="13.4" fill="#000" stroke="#8fa9cc" stroke-width="1.3"/><line x1="1541.14" y1="759.259" x2="1541.14" y2="774.385" stroke="#ff6d22" stroke-width="1.3" /><rect x="1538.1" y="764.9" width="6" height="3.0" fill="#ff6d22"/><line x1="1548.86" y1="768.239" x2="1548.86" y2="796.775" stroke="#ff6d22" stroke-width="1.3" /><rect x="1545.9" y="771.9" width="6" height="19.8" fill="#ff6d22"/><line x1="1556.58" y1="790.387" x2="1556.58" y2="805.568" stroke="#ff6d22" stroke-width="1.3" /><rect x="1553.6" y="792.3" width="6" height="8.8" fill="#ff6d22"/><line x1="1564.3" y1="794.152" x2="1564.3" y2="812.455" stroke="#ff6d22" stroke-width="1.3" /><rect x="1561.3" y="801.1" width="6" height="5.4" fill="#ff6d22"/><line x1="1572.02" y1="799.852" x2="1572.02" y2="806.854" stroke="#8fa9cc" stroke-width="1.3" /><rect x="1569.6" y="802.2" width="4.8" height="3.0" fill="#000" stroke="#8fa9cc" stroke-width="1.3"/><line x1="1579.74" y1="804.924" x2="1579.74" y2="819.142" stroke="#ff6d22" stroke-width="1.3" /><rect x="1576.7" y="807.9" width="6" height="8.8" fill="#ff6d22"/><line x1="1587.46" y1="811.263" x2="1587.46" y2="829.321" stroke="#ff6d22" stroke-width="1.3" /><rect x="1584.5" y="816.6" width="6" height="8.2" fill="#ff6d22"/><line x1="1595.18" y1="818" x2="1595.18" y2="850" stroke="#ff6d22" stroke-width="1.3" /><rect x="1592.2" y="822.5" width="6" height="20.3" fill="#ff6d22"/><line x1="1602.9" y1="834.503" x2="1602.9" y2="844.02" stroke="#8fa9cc" stroke-width="1.3" /><rect x="1600.5" y="836.0" width="4.8" height="6.8" fill="#000" stroke="#8fa9cc" stroke-width="1.3"/><line x1="1610.62" y1="834.735" x2="1610.62" y2="849.768" stroke="#ff6d22" stroke-width="1.3" /><rect x="1607.6" y="836.0" width="6" height="7.8" fill="#ff6d22"/><line x1="1618.34" y1="831.839" x2="1618.34" y2="850.348" stroke="#8fa9cc" stroke-width="1.3" /><rect x="1615.9" y="835.0" width="4.8" height="8.8" fill="#000" stroke="#8fa9cc" stroke-width="1.3"/><line x1="1626.06" y1="825.037" x2="1626.06" y2="839.186" stroke="#8fa9cc" stroke-width="1.3" /><rect x="1623.7" y="827.0" width="4.8" height="8.0" fill="#000" stroke="#8fa9cc" stroke-width="1.3"/><line x1="1633.78" y1="812.009" x2="1633.78" y2="829.65" stroke="#8fa9cc" stroke-width="1.3" /><rect x="1631.4" y="818.8" width="4.8" height="8.2" fill="#000" stroke="#8fa9cc" stroke-width="1.3"/><line x1="1641.5" y1="816.595" x2="1641.5" y2="824.221" stroke="#8fa9cc" stroke-width="1.3" /><rect x="1639.1" y="816.9" width="4.8" height="3.0" fill="#000" stroke="#8fa9cc" stroke-width="1.3"/><line x1="1649.22" y1="810.308" x2="1649.22" y2="823.508" stroke="#8fa9cc" stroke-width="1.3" /><rect x="1646.8" y="815.3" width="4.8" height="3.0" fill="#000" stroke="#8fa9cc" stroke-width="1.3"/><line x1="1656.94" y1="812" x2="1656.94" y2="852" stroke="#ff6d22" stroke-width="1.3" /><rect x="1653.9" y="820.0" width="6" height="21.0" fill="#ff6d22"/><line x1="1664.66" y1="831.225" x2="1664.66" y2="843.251" stroke="#8fa9cc" stroke-width="1.3" /><rect x="1662.3" y="835.6" width="4.8" height="5.4" fill="#000" stroke="#8fa9cc" stroke-width="1.3"/><line x1="1672.38" y1="831.755" x2="1672.38" y2="843.03" stroke="#ff6d22" stroke-width="1.3" /><rect x="1669.4" y="835.0" width="6" height="3.0" fill="#ff6d22"/><line x1="1680.1" y1="836.464" x2="1680.1" y2="847.157" stroke="#ff6d22" stroke-width="1.3" /><rect x="1677.1" y="839.4" width="6" height="4.4" fill="#ff6d22"/><line x1="1687.82" y1="825.221" x2="1687.82" y2="843.141" stroke="#8fa9cc" stroke-width="1.3" /><rect x="1685.4" y="829.9" width="4.8" height="8.0" fill="#000" stroke="#8fa9cc" stroke-width="1.3"/><line x1="1695.54" y1="826.11" x2="1695.54" y2="841.102" stroke="#ff6d22" stroke-width="1.3" /><rect x="1692.5" y="829.9" width="6" height="4.7" fill="#ff6d22"/><line x1="1703.26" y1="827.69" x2="1703.26" y2="841.618" stroke="#8fa9cc" stroke-width="1.3" /><rect x="1700.9" y="829.3" width="4.8" height="4.8" fill="#000" stroke="#8fa9cc" stroke-width="1.3"/><line x1="1710.98" y1="811.617" x2="1710.98" y2="828.305" stroke="#8fa9cc" stroke-width="1.3" /><rect x="1708.6" y="813.5" width="4.8" height="10.6" fill="#000" stroke="#8fa9cc" stroke-width="1.3"/><line x1="1718.7" y1="796" x2="1718.7" y2="850" stroke="#ff6d22" stroke-width="1.3" /><rect x="1715.7" y="807.0" width="6" height="29.6" fill="#ff6d22"/><line x1="1726.42" y1="829.445" x2="1726.42" y2="844.526" stroke="#ff6d22" stroke-width="1.3" /><rect x="1723.4" y="835.8" width="6" height="3.0" fill="#ff6d22"/><line x1="1734.14" y1="833.702" x2="1734.14" y2="845.709" stroke="#ff6d22" stroke-width="1.3" /><rect x="1731.1" y="837.5" width="6" height="3.0" fill="#ff6d22"/><line x1="1741.86" y1="812.448" x2="1741.86" y2="843.898" stroke="#8fa9cc" stroke-width="1.3" /><rect x="1739.5" y="818.5" width="4.8" height="18.7" fill="#000" stroke="#8fa9cc" stroke-width="1.3"/><line x1="1749.58" y1="814.136" x2="1749.58" y2="830.3" stroke="#ff6d22" stroke-width="1.3" /><rect x="1746.6" y="820.2" width="6" height="7.6" fill="#ff6d22"/><line x1="1757.3" y1="818" x2="1757.3" y2="852" stroke="#ff6d22" stroke-width="1.3" /><rect x="1754.3" y="826.0" width="6" height="9.0" fill="#ff6d22"/><line x1="1765.02" y1="820" x2="1765.02" y2="874" stroke="#ff6d22" stroke-width="1.3" /><rect x="1762.0" y="836.0" width="6" height="24.0" fill="#ff6d22"/>
<polyline points="981.0,726.2 985.3,724.2 993.0,701.8 1000.7,721.5 1008.5,720.1 1016.2,718.7 1023.9,726.9 1031.6,730.3 1039.3,756.7 1047.1,747.2 1054.8,740.4 1062.5,713.3 1070.2,733.6 1077.9,709.3 1085.7,717.4 1093.4,687.6 1101.1,682.2 1108.8,697.1 1116.5,687.6 1124.3,687.6 1132.0,676.8 1139.7,691.7 1147.4,701.1 1155.1,682.2 1162.9,690.3 1170.6,695.7 1178.3,697.1 1186.0,690.3 1193.7,705.2 1201.5,725.5 1209.2,754.0 1216.9,745.8 1224.6,736.4 1232.3,712.0 1240.1,726.9 1247.8,725.4 1255.5,721.8 1263.2,716.0 1270.9,726.4 1278.7,719.5 1286.4,712.5 1294.1,724.0 1301.8,744.4 1309.5,734.2 1317.3,742.3 1325.0,749.1 1332.7,783.6 1340.4,795.2 1348.1,795.2 1355.9,787.0 1363.6,820.9 1371.3,820.9 1379.0,810.7 1386.7,819.5 1394.5,805.3 1402.2,793.1 1409.9,774.8 1417.6,790.4 1425.3,776.2 1433.1,782.3 1440.8,781.0 1448.5,795.8 1456.2,783.0 1463.9,785.7 1471.7,778.2 1479.4,772.8 1487.1,793.1 1494.8,795.9 1502.5,774.0 1510.3,788.9 1518.0,788.9 1525.7,785.0 1533.4,763.1 1541.1,762.3 1548.9,776.4 1556.6,797.5 1564.3,795.2 1572.0,790.5 1579.7,811.6 1587.5,819.4 1595.2,842.0 1602.9,830.3 1610.6,830.3 1618.3,826.4 1626.1,830.3 1633.8,822.5 1641.5,818.6 1649.2,809.2 1656.9,837.3 1664.7,835.0 1672.4,840.5 1680.1,843.6 1687.8,818.6 1695.5,823.3 1703.3,807.7 1711.0,796.7 1718.7,829.5 1726.4,827.2 1734.1,820.9 1741.9,817.8 1749.6,822.5 1757.3,836.6 1765.0,859.2" fill="none" stroke="#ff0000" stroke-width="1.3" stroke-linejoin="round" />
<polyline points="981.0,738.4 985.3,740.4 993.0,714.7 1000.7,739.0 1008.5,737.7 1016.2,736.4 1023.9,741.8 1031.6,743.1 1039.3,774.3 1047.1,762.0 1054.8,755.3 1062.5,726.9 1070.2,751.2 1077.9,724.2 1085.7,733.6 1093.4,701.1 1101.1,696.4 1108.8,713.3 1116.5,702.5 1124.3,699.1 1132.0,689.0 1139.7,702.5 1147.4,721.5 1155.1,695.7 1162.9,702.5 1170.6,707.9 1178.3,706.6 1186.0,700.5 1193.7,724.2 1201.5,745.8 1209.2,771.6 1216.9,762.1 1224.6,752.6 1232.3,730.9 1240.1,745.8 1247.8,746.4 1255.5,740.3 1263.2,732.2 1270.9,741.0 1278.7,732.9 1286.4,727.4 1294.1,740.3 1301.8,760.0 1309.5,749.1 1317.3,760.0 1325.0,758.6 1332.7,795.8 1340.4,813.4 1348.1,810.7 1355.9,805.3 1363.6,837.8 1371.3,833.7 1379.0,828.3 1386.7,838.5 1394.5,823.6 1402.2,808.0 1409.9,791.8 1417.6,806.7 1425.3,795.2 1433.1,801.2 1440.8,797.2 1448.5,824.3 1456.2,799.9 1463.9,800.6 1471.7,795.2 1479.4,789.0 1487.1,812.1 1494.8,810.0 1502.5,788.9 1510.3,804.5 1518.0,801.4 1525.7,796.0 1533.4,775.6 1541.1,774.8 1548.9,791.3 1556.6,814.7 1564.3,806.9 1572.0,801.4 1579.7,824.1 1587.5,835.0 1595.2,854.5 1602.9,844.4 1610.6,843.6 1618.3,841.3 1626.1,845.2 1633.8,839.7 1641.5,833.4 1649.2,825.6 1656.9,854.5 1664.7,849.1 1672.4,855.3 1680.1,857.7 1687.8,833.4 1695.5,836.6 1703.3,828.0 1711.0,817.8 1718.7,852.2 1726.4,845.9 1734.1,838.1 1741.9,832.7 1749.6,830.3 1757.3,853.8 1765.0,874.1" fill="none" stroke="#0a8a0a" stroke-width="1.3" stroke-linejoin="round" />
<line x1="1709.6" y1="657" x2="1709.6" y2="896" stroke="#10d010" stroke-width="1.4" />
<line x1="1764.8" y1="657" x2="1764.8" y2="896" stroke="#ff0000" stroke-width="1.4" />
<line x1="1826" y1="657" x2="1826" y2="896" stroke="#ff2020" stroke-width="1.4" stroke-dasharray="4 4"/>
<path d="M1703.8 881.9V866.3H1695.3L1707.8 853.8L1719.4 866.3H1712V881.9Z" fill="#0a9a0a"/>
<path d="M1758.9 779.5H1767.5V796H1775L1763.1 808.4L1751 796H1758.9Z" fill="#ff0000"/>
<line x1="1853.5" y1="657" x2="1853.5" y2="896" stroke="#f0f0f0" stroke-width="1.3" />
<line x1="1853" y1="888.4" x2="1864" y2="888.4" stroke="#f0f0f0" stroke-width="1.6" />
<line x1="1853" y1="878.95" x2="1858" y2="878.95" stroke="#f0f0f0" stroke-width="1.6" />
<line x1="1853" y1="869.5" x2="1864" y2="869.5" stroke="#f0f0f0" stroke-width="1.6" />
<line x1="1853" y1="860.05" x2="1858" y2="860.05" stroke="#f0f0f0" stroke-width="1.6" />
<line x1="1853" y1="850.6" x2="1864" y2="850.6" stroke="#f0f0f0" stroke-width="1.6" />
<line x1="1853" y1="841.15" x2="1858" y2="841.15" stroke="#f0f0f0" stroke-width="1.6" />
<line x1="1853" y1="831.7" x2="1864" y2="831.7" stroke="#f0f0f0" stroke-width="1.6" />
<line x1="1853" y1="822.25" x2="1858" y2="822.25" stroke="#f0f0f0" stroke-width="1.6" />
<line x1="1853" y1="812.8" x2="1864" y2="812.8" stroke="#f0f0f0" stroke-width="1.6" />
<line x1="1853" y1="803.35" x2="1858" y2="803.35" stroke="#f0f0f0" stroke-width="1.6" />
<line x1="1853" y1="793.9" x2="1864" y2="793.9" stroke="#f0f0f0" stroke-width="1.6" />
<line x1="1853" y1="784.45" x2="1858" y2="784.45" stroke="#f0f0f0" stroke-width="1.6" />
<line x1="1853" y1="775" x2="1864" y2="775" stroke="#f0f0f0" stroke-width="1.6" />
<line x1="1853" y1="765.55" x2="1858" y2="765.55" stroke="#f0f0f0" stroke-width="1.6" />
<line x1="1853" y1="756.1" x2="1864" y2="756.1" stroke="#f0f0f0" stroke-width="1.6" />
<line x1="1853" y1="746.65" x2="1858" y2="746.65" stroke="#f0f0f0" stroke-width="1.6" />
<line x1="1853" y1="737.2" x2="1864" y2="737.2" stroke="#f0f0f0" stroke-width="1.6" />
<line x1="1853" y1="727.75" x2="1858" y2="727.75" stroke="#f0f0f0" stroke-width="1.6" />
<line x1="1853" y1="718.3" x2="1864" y2="718.3" stroke="#f0f0f0" stroke-width="1.6" />
<line x1="1853" y1="708.85" x2="1858" y2="708.85" stroke="#f0f0f0" stroke-width="1.6" />
<line x1="1853" y1="699.4" x2="1864" y2="699.4" stroke="#f0f0f0" stroke-width="1.6" />
<line x1="1853" y1="689.95" x2="1858" y2="689.95" stroke="#f0f0f0" stroke-width="1.6" />
<line x1="1853" y1="680.5" x2="1864" y2="680.5" stroke="#f0f0f0" stroke-width="1.6" />
<line x1="1853" y1="671.05" x2="1858" y2="671.05" stroke="#f0f0f0" stroke-width="1.6" />
<line x1="1853" y1="661.6" x2="1864" y2="661.6" stroke="#f0f0f0" stroke-width="1.6" />
</svg>
<div class="t" style="left:1881.84px;top:674.45px;font-size:14.00px;line-height:16.10px;color:#f0f0f0;transform:scaleX(1.0700);transform-origin:0 0;"><span style="color:#f0f0f0">1.08</span></div>
<div class="t" style="left:1881.84px;top:693.35px;font-size:14.00px;line-height:16.10px;color:#f0f0f0;transform:scaleX(1.0700);transform-origin:0 0;"><span style="color:#f0f0f0">1.07</span></div>
<div class="t" style="left:1881.84px;top:712.25px;font-size:14.00px;line-height:16.10px;color:#f0f0f0;transform:scaleX(1.0700);transform-origin:0 0;"><span style="color:#f0f0f0">1.06</span></div>
<div class="t" style="left:1881.84px;top:731.15px;font-size:14.00px;line-height:16.10px;color:#f0f0f0;transform:scaleX(1.0700);transform-origin:0 0;"><span style="color:#f0f0f0">1.05</span></div>
<div class="t" style="left:1881.84px;top:750.05px;font-size:14.00px;line-height:16.10px;color:#f0f0f0;transform:scaleX(1.0700);transform-origin:0 0;"><span style="color:#f0f0f0">1.04</span></div>
<div class="t" style="left:1881.84px;top:768.95px;font-size:14.00px;line-height:16.10px;color:#f0f0f0;transform:scaleX(1.0700);transform-origin:0 0;"><span style="color:#f0f0f0">1.03</span></div>
<div class="t" style="left:1881.84px;top:787.85px;font-size:14.00px;line-height:16.10px;color:#f0f0f0;transform:scaleX(1.0700);transform-origin:0 0;"><span style="color:#f0f0f0">1.02</span></div>
<div class="t" style="left:1881.84px;top:806.75px;font-size:14.00px;line-height:16.10px;color:#f0f0f0;transform:scaleX(1.0700);transform-origin:0 0;"><span style="color:#f0f0f0">1.01</span></div>
<div class="t" style="left:1881.84px;top:825.65px;font-size:14.00px;line-height:16.10px;color:#f0f0f0;transform:scaleX(1.0700);transform-origin:0 0;"><span style="color:#f0f0f0">1.00</span></div>
<div class="t" style="left:1881.84px;top:844.55px;font-size:14.00px;line-height:16.10px;color:#f0f0f0;transform:scaleX(1.0700);transform-origin:0 0;"><span style="color:#f0f0f0">0.99</span></div>
<div class="t" style="left:1881.84px;top:863.45px;font-size:14.00px;line-height:16.10px;color:#f0f0f0;transform:scaleX(1.0700);transform-origin:0 0;"><span style="color:#f0f0f0">0.98</span></div>
<div class="t" style="left:1881.84px;top:882.35px;font-size:14.00px;line-height:16.10px;color:#f0f0f0;transform:scaleX(1.0700);transform-origin:0 0;"><span style="color:#f0f0f0">0.97</span></div>
<div class="r" style="left:1858.50px;top:849.00px;width:52.00px;height:21.00px;background:#000;border:1px solid #e8e8e8;box-sizing:border-box;"></div>
<div class="t" style="left:1861.00px;top:851.74px;font-size:13.50px;line-height:15.52px;color:#ff1010;transform:scaleX(0.9631);transform-origin:0 0;"><span style="color:#ff1010">0.98450</span></div>
<div class="r" style="left:981.00px;top:896.00px;width:872.00px;height:3.00px;background:#c8c8c8;"></div>
<div class="r" style="left:1853.00px;top:896.00px;width:64.00px;height:44.00px;background:#ececec;"></div>
<div class="r" style="left:981.00px;top:899.00px;width:872.00px;height:19.50px;background:#000;"></div>
<div class="r" style="left:981.00px;top:918.50px;width:872.00px;height:1.50px;background:#bdbdbd;"></div>
<div class="r" style="left:981.00px;top:920.00px;width:872.00px;height:18.50px;background:#000;"></div>
<div class="r" style="left:981.00px;top:938.50px;width:872.00px;height:1.50px;background:#555;"></div>
<div class="t" style="left:980.00px;top:900.66px;font-size:14.50px;line-height:16.67px;color:#f2f2f2;"><span style="color:#f2f2f2">2</span></div>
<div class="r" style="left:1014.00px;top:899.00px;width:1.50px;height:19.50px;background:#bdbdbd;"></div>
<div class="t" style="left:1017.00px;top:900.66px;font-size:14.50px;line-height:16.67px;color:#f2f2f2;transform:scaleX(1.0600);transform-origin:0 0;"><span style="color:#f2f2f2">9</span></div>
<div class="r" style="left:1052.60px;top:899.00px;width:1.50px;height:19.50px;background:#bdbdbd;"></div>
<div class="t" style="left:1055.60px;top:900.66px;font-size:14.50px;line-height:16.67px;color:#f2f2f2;transform:scaleX(1.0600);transform-origin:0 0;"><span style="color:#f2f2f2">16</span></div>
<div class="r" style="left:1091.20px;top:899.00px;width:1.50px;height:19.50px;background:#bdbdbd;"></div>
<div class="t" style="left:1094.20px;top:900.66px;font-size:14.50px;line-height:16.67px;color:#f2f2f2;transform:scaleX(1.0600);transform-origin:0 0;"><span style="color:#f2f2f2">23</span></div>
<div class="r" style="left:1129.80px;top:899.00px;width:1.50px;height:19.50px;background:#bdbdbd;"></div>
<div class="t" style="left:1132.80px;top:900.66px;font-size:14.50px;line-height:16.67px;color:#f2f2f2;transform:scaleX(1.0600);transform-origin:0 0;"><span style="color:#f2f2f2">30</span></div>
<div class="r" style="left:1168.40px;top:899.00px;width:1.50px;height:19.50px;background:#bdbdbd;"></div>
<div class="t" style="left:1171.40px;top:900.66px;font-size:14.50px;line-height:16.67px;color:#f2f2f2;transform:scaleX(1.0600);transform-origin:0 0;"><span style="color:#f2f2f2">6</span></div>
<div class="r" style="left:1207.00px;top:899.00px;width:1.50px;height:19.50px;background:#bdbdbd;"></div>
<div class="t" style="left:1210.00px;top:900.66px;font-size:14.50px;line-height:16.67px;color:#f2f2f2;transform:scaleX(1.0600);transform-origin:0 0;"><span style="color:#f2f2f2">13</span></div>
<div class="r" style="left:1245.60px;top:899.00px;width:1.50px;height:19.50px;background:#bdbdbd;"></div>
<div class="t" style="left:1248.60px;top:900.66px;font-size:14.50px;line-height:16.67px;color:#f2f2f2;transform:scaleX(1.0600);transform-origin:0 0;"><span style="color:#f2f2f2">20</span></div>
<div class="r" style="left:1284.20px;top:899.00px;width:1.50px;height:19.50px;background:#bdbdbd;"></div>
<div class="t" style="left:1287.20px;top:900.66px;font-size:14.50px;line-height:16.67px;color:#f2f2f2;transform:scaleX(1.0600);transform-origin:0 0;"><span style="color:#f2f2f2">27</span></div>
<div class="r" style="left:1322.80px;top:899.00px;width:1.50px;height:19.50px;background:#bdbdbd;"></div>
<div class="t" style="left:1325.80px;top:900.66px;font-size:14.50px;line-height:16.67px;color:#f2f2f2;transform:scaleX(1.0600);transform-origin:0 0;"><span style="color:#f2f2f2">4</span></div>
<div class="r" style="left:1361.40px;top:899.00px;width:1.50px;height:19.50px;background:#bdbdbd;"></div>
<div class="t" style="left:1364.40px;top:900.66px;font-size:14.50px;line-height:16.67px;color:#f2f2f2;transform:scaleX(1.0600);transform-origin:0 0;"><span style="color:#f2f2f2">11</span></div>
<div class="r" style="left:1400.00px;top:899.00px;width:1.50px;height:19.50px;background:#bdbdbd;"></div>
<div class="t" style="left:1403.00px;top:900.66px;font-size:14.50px;line-height:16.67px;color:#f2f2f2;transform:scaleX(1.0600);transform-origin:0 0;"><span style="color:#f2f2f2">18</span></div>
<div class="r" style="left:1438.60px;top:899.00px;width:1.50px;height:19.50px;background:#bdbdbd;"></div>
<div class="t" style="left:1441.60px;top:900.66px;font-size:14.50px;line-height:16.67px;color:#f2f2f2;transform:scaleX(1.0600);transform-origin:0 0;"><span style="color:#f2f2f2">25</span></div>
<div class="r" style="left:1477.20px;top:899.00px;width:1.50px;height:19.50px;background:#bdbdbd;"></div>
<div class="t" style="left:1480.20px;top:900.66px;font-size:14.50px;line-height:16.67px;color:#f2f2f2;transform:scaleX(1.0600);transform-origin:0 0;"><span style="color:#f2f2f2">1</span></div>
<div class="r" style="left:1515.80px;top:899.00px;width:1.50px;height:19.50px;background:#bdbdbd;"></div>
<div class="t" style="left:1518.80px;top:900.66px;font-size:14.50px;line-height:16.67px;color:#f2f2f2;transform:scaleX(1.0600);transform-origin:0 0;"><span style="color:#f2f2f2">8</span></div>
<div class="r" style="left:1554.40px;top:899.00px;width:1.50px;height:19.50px;background:#bdbdbd;"></div>
<div class="t" style="left:1557.40px;top:900.66px;font-size:14.50px;line-height:16.67px;color:#f2f2f2;transform:scaleX(1.0600);transform-origin:0 0;"><span style="color:#f2f2f2">15</span></div>
<div class="r" style="left:1593.00px;top:899.00px;width:1.50px;height:19.50px;background:#bdbdbd;"></div>
<div class="t" style="left:1596.00px;top:900.66px;font-size:14.50px;line-height:16.67px;color:#f2f2f2;transform:scaleX(1.0600);transform-origin:0 0;"><span style="color:#f2f2f2">22</span></div>
<div class="r" style="left:1631.60px;top:899.00px;width:1.50px;height:19.50px;background:#bdbdbd;"></div>
<div class="t" style="left:1634.60px;top:900.66px;font-size:14.50px;line-height:16.67px;color:#f2f2f2;transform:scaleX(1.0600);transform-origin:0 0;"><span style="color:#f2f2f2">29</span></div>
<div class="r" style="left:1670.20px;top:899.00px;width:1.50px;height:19.50px;background:#bdbdbd;"></div>
<div class="t" style="left:1673.20px;top:900.66px;font-size:14.50px;line-height:16.67px;color:#f2f2f2;transform:scaleX(1.0600);transform-origin:0 0;"><span style="color:#f2f2f2">5</span></div>
<div class="r" style="left:1708.80px;top:899.00px;width:1.50px;height:19.50px;background:#bdbdbd;"></div>
<div class="t" style="left:1711.80px;top:900.66px;font-size:14.50px;line-height:16.67px;color:#f2f2f2;transform:scaleX(1.0600);transform-origin:0 0;"><span style="color:#f2f2f2">12</span></div>
<div class="r" style="left:1747.40px;top:899.00px;width:1.50px;height:19.50px;background:#bdbdbd;"></div>
<div class="t" style="left:1750.40px;top:900.66px;font-size:14.50px;line-height:16.67px;color:#f2f2f2;transform:scaleX(1.0600);transform-origin:0 0;"><span style="color:#f2f2f2">19</span></div>
<div class="r" style="left:1786.00px;top:899.00px;width:1.50px;height:19.50px;background:#bdbdbd;"></div>
<div class="t" style="left:1789.00px;top:900.66px;font-size:14.50px;line-height:16.67px;color:#f2f2f2;transform:scaleX(1.0600);transform-origin:0 0;"><span style="color:#f2f2f2">26</span></div>
<div class="r" style="left:1824.60px;top:899.00px;width:1.50px;height:19.50px;background:#bdbdbd;"></div>
<div class="t" style="left:1827.60px;top:900.66px;font-size:14.50px;line-height:16.67px;color:#f2f2f2;transform:scaleX(1.0600);transform-origin:0 0;"><span style="color:#f2f2f2">3</span></div>
<div class="t" style="left:979.00px;top:920.66px;font-size:14.50px;line-height:16.67px;color:#f2f2f2;"><span style="color:#f2f2f2">May</span></div>
<div class="r" style="left:1145.20px;top:919.00px;width:1.50px;height:19.50px;background:#bdbdbd;"></div>
<div class="t" style="left:1148.20px;top:920.66px;font-size:14.50px;line-height:16.67px;color:#f2f2f2;transform:scaleX(1.0700);transform-origin:0 0;"><span style="color:#f2f2f2">June</span></div>
<div class="r" style="left:1315.00px;top:899.00px;width:1.50px;height:39.50px;background:#bdbdbd;"></div>
<div class="t" style="left:1318.00px;top:920.66px;font-size:14.50px;line-height:16.67px;color:#f2f2f2;transform:scaleX(1.0700);transform-origin:0 0;"><span style="color:#f2f2f2">July</span></div>
<div class="r" style="left:1477.20px;top:899.00px;width:1.50px;height:39.50px;background:#bdbdbd;"></div>
<div class="t" style="left:1480.20px;top:920.66px;font-size:14.50px;line-height:16.67px;color:#f2f2f2;transform:scaleX(1.0700);transform-origin:0 0;"><span style="color:#f2f2f2">August</span></div>
<div class="r" style="left:1655.00px;top:899.00px;width:1.50px;height:39.50px;background:#bdbdbd;"></div>
<div class="t" style="left:1658.00px;top:920.66px;font-size:14.50px;line-height:16.67px;color:#f2f2f2;transform:scaleX(1.0700);transform-origin:0 0;"><span style="color:#f2f2f2">September</span></div>
<div class="r" style="left:1824.60px;top:899.00px;width:1.50px;height:39.50px;background:#bdbdbd;"></div>
<div class="t" style="left:1827.60px;top:920.66px;font-size:14.50px;line-height:16.67px;color:#f2f2f2;transform:scaleX(1.0700);transform-origin:0 0;"><span style="color:#f2f2f2">Octo</span></div>
<div class="r" style="left:1853.00px;top:899.00px;width:64.00px;height:41.00px;background:#ececec;"></div>
<div class="r" style="left:981.00px;top:940.00px;width:936.00px;height:28.00px;background:#efefef;"></div>
<div class="r" style="left:1568.00px;top:951.00px;width:54.00px;height:6.00px;background:#8c8c8c;border-radius:1px;"></div>
<div class="r" style="left:1653.80px;top:944.00px;width:19.00px;height:19.00px;background:#e8e8e8;"></div>
<div class="r" style="left:1680.80px;top:944.00px;width:19.00px;height:19.00px;background:#e8e8e8;"></div>
<div class="r" style="left:1713.80px;top:944.00px;width:19.00px;height:19.00px;background:#e8e8e8;"></div>
<div class="r" style="left:1739.80px;top:944.00px;width:19.00px;height:19.00px;background:#e8e8e8;"></div>
<div class="r" style="left:1765.80px;top:944.00px;width:19.00px;height:19.00px;background:#e8e8e8;"></div>
<div class="r" style="left:1791.80px;top:944.00px;width:19.00px;height:19.00px;background:#e8e8e8;"></div>
<div class="r" style="left:1825.80px;top:944.00px;width:19.00px;height:19.00px;background:#e8e8e8;"></div>
<div class="r" style="left:1852.80px;top:944.00px;width:19.00px;height:19.00px;background:#e8e8e8;"></div>
<div class="r" style="left:1646.80px;top:944.00px;width:1.00px;height:20.00px;background:#9a9a9a;"></div>
<div class="r" style="left:1706.80px;top:944.00px;width:1.00px;height:20.00px;background:#9a9a9a;"></div>
<div class="r" style="left:1819.30px;top:944.00px;width:1.00px;height:20.00px;background:#9a9a9a;"></div>
<div class="r" style="left:1905.30px;top:944.00px;width:1.00px;height:20.00px;background:#9a9a9a;"></div>
<svg style="left:1653.8px;top:943.5px" width="18" height="18" viewBox="0 0 18 18"><path d="M3.2 9.5A6 6 0 0 1 13.5 4.8" stroke="#555" stroke-width="3.2" fill="none"/><path d="M14.8 8.5A6 6 0 0 1 4.5 13.2" stroke="#555" stroke-width="3.2" fill="none"/><path d="M10.5 1.5L17 3.5L14.5 9Z" fill="#555"/><path d="M7.5 16.5L1 14.5L3.5 9Z" fill="#555"/></svg>
<div class="t" style="left:1684.74px;top:945.45px;font-size:14.00px;line-height:16.10px;color:#4a4a4a;font-weight:bold;"><span style="color:#4a4a4a">D</span></div>
<svg style="left:1716.8px;top:943.5px" width="12" height="20" viewBox="0 0 12 20"><path d="M6 1L10 6H7.3V14H10L6 19L2 14H4.7V6H2Z" fill="#555"/></svg>
<svg style="left:1739.8px;top:943.5px" width="20" height="20" viewBox="0 0 20 20"><path d="M10 1L13.5 5H11.2V8.8H15V6.5L19 10L15 13.5V11.2H11.2V15H13.5L10 19L6.5 15H8.8V11.2H5V13.5L1 10L5 6.5V8.8H8.8V5H6.5Z" fill="#555"/></svg>
<svg style="left:1767.8px;top:945.5px" width="16" height="16" viewBox="0 0 16 16"><circle cx="8" cy="8" r="6.3" fill="#f4f4f4" stroke="#666" stroke-width="1.5"/><path d="M4.5 8H11.5" stroke="#555" stroke-width="2"/></svg>
<svg style="left:1793.8px;top:945.5px" width="16" height="16" viewBox="0 0 16 16"><circle cx="8" cy="8" r="6.3" fill="#f4f4f4" stroke="#666" stroke-width="1.5"/><path d="M4.5 8H11.5" stroke="#555" stroke-width="2"/><path d="M8 4.5V11.5" stroke="#555" stroke-width="2"/></svg>
<svg style="left:1830.8px;top:946.5px" width="10" height="14" viewBox="0 0 10 14"><path d="M8 1V13L2 7Z" fill="#c4c4c4"/></svg>
<svg style="left:1857.8px;top:946.5px" width="10" height="14" viewBox="0 0 10 14"><path d="M2 1V13L8 7Z" fill="#c4c4c4"/></svg>
<div class="r" style="left:1879.80px;top:945.50px;width:15.00px;height:14.00px;background:#fafafa;border:1.5px solid #6a6a6a;border-top-width:3px;box-sizing:border-box;"></div>
<div class="r" style="left:1883.80px;top:951.50px;width:9.00px;height:1.40px;background:#777;"></div>
<div class="r" style="left:1883.80px;top:954.50px;width:9.00px;height:1.40px;background:#777;"></div>
<div class="r" style="left:1883.80px;top:957.50px;width:9.00px;height:1.40px;background:#777;"></div>
<div class="r" style="left:0.00px;top:971.00px;width:1920.00px;height:41.00px;background:#e9e9e9;"></div>
<div class="r" style="left:0.00px;top:971.00px;width:1920.00px;height:1.00px;background:#f6f6f6;"></div>
<div class="r" style="left:0.00px;top:1011.00px;width:1920.00px;height:1.00px;background:#cfcfcf;"></div>
<div class="r" style="left:2.00px;top:976.00px;width:8.00px;height:32.00px;background:linear-gradient(90deg,#dcdcdc,#c0c0c0);"></div>
<div class="r" style="left:4.50px;top:992.00px;width:3.00px;height:3.00px;background:#666;"></div>
<div class="r" style="left:322.00px;top:976.00px;width:8.00px;height:32.00px;background:linear-gradient(90deg,#dcdcdc,#c0c0c0);"></div>
<div class="r" style="left:324.50px;top:992.00px;width:3.00px;height:3.00px;background:#666;"></div>
<div class="r" style="left:484.00px;top:976.00px;width:8.00px;height:32.00px;background:linear-gradient(90deg,#dcdcdc,#c0c0c0);"></div>
<div class="r" style="left:486.50px;top:992.00px;width:3.00px;height:3.00px;background:#666;"></div>
<div class="r" style="left:11.00px;top:981.00px;width:161.00px;height:25.00px;background:#fff;border:1px solid #a0a0a0;border-radius:2px;box-sizing:border-box;"></div>
<div class="r" style="left:30.00px;top:993.00px;width:103.00px;height:1.60px;background:#222;"></div>
<svg style="left:149px;top:989px" width="14" height="9" viewBox="0 0 14 9"><path d="M1.5 1.5L7 7L12.5 1.5" stroke="#555" stroke-width="1.5" fill="none"/></svg>
<div class="r" style="left:181.00px;top:981.00px;width:124.00px;height:25.00px;background:#fff;border:1px solid #a0a0a0;border-radius:2px;box-sizing:border-box;"></div>
<div class="r" style="left:200.00px;top:993.00px;width:66.00px;height:1.60px;background:#222;"></div>
<svg style="left:282px;top:989px" width="14" height="9" viewBox="0 0 14 9"><path d="M1.5 1.5L7 7L12.5 1.5" stroke="#555" stroke-width="1.5" fill="none"/></svg>
<div class="r" style="left:175.50px;top:980.00px;width:1.00px;height:27.00px;background:#b0b0b0;"></div>
<div class="r" style="left:313.00px;top:976.00px;width:1.00px;height:32.00px;background:#b0b0b0;"></div>
<div class="r" style="left:331.00px;top:977.00px;width:136.00px;height:31.00px;background:#e2e2e2;"></div>
<div class="r" style="left:334.00px;top:981.00px;width:12.50px;height:11.50px;background:#e4e4fc;border:1px solid #b8b8b8;box-sizing:border-box;"></div>
<div class="r" style="left:334.00px;top:995.50px;width:12.50px;height:12.00px;background:#800000;border:1px solid #b8b8b8;box-sizing:border-box;"></div>
<div class="r" style="left:349.00px;top:981.00px;width:12.50px;height:11.50px;background:#ffcc00;border:1px solid #b8b8b8;box-sizing:border-box;"></div>
<div class="r" style="left:349.00px;top:995.50px;width:12.50px;height:12.00px;background:#708090;border:1px solid #b8b8b8;box-sizing:border-box;"></div>
<div class="r" style="left:364.00px;top:981.00px;width:12.50px;height:11.50px;background:#ffff00;border:1px solid #b8b8b8;box-sizing:border-box;"></div>
<div class="r" style="left:364.00px;top:995.50px;width:12.50px;height:12.00px;background:#0000ff;border:1px solid #b8b8b8;box-sizing:border-box;"></div>
<div class="r" style="left:379.00px;top:981.00px;width:12.50px;height:11.50px;background:#606060;border:1px solid #b8b8b8;box-sizing:border-box;"></div>
<div class="r" style="left:379.00px;top:995.50px;width:12.50px;height:12.00px;background:#008000;border:1px solid #b8b8b8;box-sizing:border-box;"></div>
<div class="r" style="left:394.00px;top:981.00px;width:12.50px;height:11.50px;background:#33cc33;border:1px solid #b8b8b8;box-sizing:border-box;"></div>
<div class="r" style="left:394.00px;top:995.50px;width:12.50px;height:12.00px;background:#ff0000;border:1px solid #b8b8b8;box-sizing:border-box;"></div>
<div class="r" style="left:409.00px;top:981.00px;width:12.50px;height:11.50px;background:#fffde6;border:1px solid #b8b8b8;box-sizing:border-box;"></div>
<div class="r" style="left:409.00px;top:995.50px;width:12.50px;height:12.00px;background:#000000;border:1px solid #b8b8b8;box-sizing:border-box;"></div>
<div class="r" style="left:424.00px;top:981.00px;width:12.50px;height:11.50px;background:#ff7020;border:1px solid #b8b8b8;box-sizing:border-box;"></div>
<div class="r" style="left:424.00px;top:995.50px;width:12.50px;height:12.00px;background:#4682a8;border:1px solid #b8b8b8;box-sizing:border-box;"></div>
<div class="r" style="left:439.00px;top:981.00px;width:12.50px;height:11.50px;background:#98f098;border:1px solid #b8b8b8;box-sizing:border-box;"></div>
<div class="r" style="left:439.00px;top:995.50px;width:12.50px;height:12.00px;background:#8fd0e6;border:1px solid #b8b8b8;box-sizing:border-box;"></div>
<svg style="left:453px;top:990px" width="10" height="6" viewBox="0 0 10 6"><path d="M0 0H10L5 6Z" fill="#111"/></svg>
<div class="r" style="left:475.00px;top:976.00px;width:1.00px;height:32.00px;background:#b0b0b0;"></div>
<svg style="left:498px;top:985px" width="21" height="19" viewBox="0 0 21 19"><rect x="0.5" y="2.5" width="20" height="16" fill="#f8f8f8" stroke="#7a8a9a"/><rect x="0.5" y="0.5" width="20" height="3" fill="#c8d8e8" stroke="#7a8a9a"/><path d="M3 13L7 8L9 10" stroke="#e02020" stroke-width="1.4" fill="none"/></svg>
<div class="t" style="left:508.66px;top:988.10px;font-size:12.00px;line-height:13.80px;color:#223;"><span style="color:#223">1</span></div>
<svg style="left:531.9px;top:985px" width="21" height="19" viewBox="0 0 21 19"><rect x="0.5" y="2.5" width="20" height="16" fill="#f8f8f8" stroke="#7a8a9a"/><rect x="0.5" y="0.5" width="20" height="3" fill="#c8d8e8" stroke="#7a8a9a"/><path d="M3 13L7 8L9 10" stroke="#e02020" stroke-width="1.4" fill="none"/></svg>
<div class="t" style="left:542.56px;top:988.10px;font-size:12.00px;line-height:13.80px;color:#223;"><span style="color:#223">2</span></div>
<svg style="left:565.8px;top:985px" width="21" height="19" viewBox="0 0 21 19"><rect x="0.5" y="2.5" width="20" height="16" fill="#f8f8f8" stroke="#7a8a9a"/><rect x="0.5" y="0.5" width="20" height="3" fill="#c8d8e8" stroke="#7a8a9a"/><path d="M3 13L7 8L9 10" stroke="#e02020" stroke-width="1.4" fill="none"/></svg>
<div class="t" style="left:576.46px;top:988.10px;font-size:12.00px;line-height:13.80px;color:#223;"><span style="color:#223">3</span></div>
<svg style="left:599.7px;top:985px" width="21" height="19" viewBox="0 0 21 19"><rect x="0.5" y="2.5" width="20" height="16" fill="#f8f8f8" stroke="#7a8a9a"/><rect x="0.5" y="0.5" width="20" height="3" fill="#c8d8e8" stroke="#7a8a9a"/><path d="M3 13L7 8L9 10" stroke="#e02020" stroke-width="1.4" fill="none"/></svg>
<div class="t" style="left:610.36px;top:988.10px;font-size:12.00px;line-height:13.80px;color:#223;"><span style="color:#223">4</span></div>
<svg style="left:633.6px;top:985px" width="21" height="19" viewBox="0 0 21 19"><rect x="0.5" y="2.5" width="20" height="16" fill="#f8f8f8" stroke="#7a8a9a"/><rect x="0.5" y="0.5" width="20" height="3" fill="#c8d8e8" stroke="#7a8a9a"/><path d="M3 13L7 8L9 10" stroke="#e02020" stroke-width="1.4" fill="none"/></svg>
<div class="t" style="left:644.26px;top:988.10px;font-size:12.00px;line-height:13.80px;color:#223;"><span style="color:#223">5</span></div>
<svg style="left:667.5px;top:985px" width="21" height="19" viewBox="0 0 21 19"><rect x="0.5" y="2.5" width="20" height="16" fill="#f8f8f8" stroke="#7a8a9a"/><rect x="0.5" y="0.5" width="20" height="3" fill="#c8d8e8" stroke="#7a8a9a"/><path d="M3 13L7 8L9 10" stroke="#e02020" stroke-width="1.4" fill="none"/></svg>
<div class="t" style="left:678.16px;top:988.10px;font-size:12.00px;line-height:13.80px;color:#223;"><span style="color:#223">6</span></div>
<div class="r" style="left:702.00px;top:976.00px;width:1.00px;height:32.00px;background:#b0b0b0;"></div>
<div class="r" style="left:0.00px;top:1012.00px;width:1920.00px;height:8.00px;background:#3b3b3d;"></div>
<div class="r" style="left:0.00px;top:1020.00px;width:1920.00px;height:60.00px;background:#211d26;"></div>
<div class="r" style="left:1840.00px;top:1017.00px;width:25.00px;height:3.00px;background:#dfe8df;"></div>
<div class="r" style="left:1869.00px;top:1017.00px;width:26.00px;height:3.00px;background:#dde4ea;"></div>
<svg style="left:27px;top:1035px" width="30" height="30" viewBox="0 0 30 30"><circle cx="10" cy="8" r="7.5" fill="#f6b400"/><circle cx="6" cy="4.5" r="7.2" fill="#211d26"/><ellipse cx="16" cy="21" rx="12" ry="5" fill="#c8dcec"/><circle cx="14" cy="16.5" r="6" fill="#dceaf4"/><circle cx="21" cy="18" r="4.5" fill="#cfe0ee"/></svg>
<div class="t" style="left:65.00px;top:1032.16px;font-size:14.50px;line-height:16.67px;color:#ffffff;transform:scaleX(1.0185);transform-origin:0 0;"><span style="color:#ffffff">22°C</span></div>
<div class="t" style="left:65.00px;top:1052.16px;font-size:14.50px;line-height:16.67px;color:#e6e6e6;transform:scaleX(1.0533);transform-origin:0 0;"><span style="color:#e6e6e6">Ger. Nublado</span></div>
<svg style="left:506px;top:1036px" width="29" height="29" viewBox="0 0 29 29"><rect x="0" y="0" width="13.8" height="13.8" rx="1" fill="#4cc2f8"/><rect x="15.2" y="0" width="13.8" height="13.8" rx="1" fill="#3ab4f2"/><rect x="0" y="15.2" width="13.8" height="13.8" rx="1" fill="#2aa4ec"/><rect x="15.2" y="15.2" width="13.8" height="13.8" rx="1" fill="#1d98e6"/></svg>
<svg style="left:562px;top:1035px" width="28" height="30" viewBox="0 0 28 30"><circle cx="16" cy="12" r="9" fill="none" stroke="#e8e8e8" stroke-width="2.6"/><path d="M9.5 18.5L2.5 26" stroke="#e8e8e8" stroke-width="3" stroke-linecap="round"/></svg>
<svg style="left:615px;top:1035px" width="30" height="30" viewBox="0 0 30 30"><circle cx="15" cy="14" r="13.5" fill="#7b6ad8"/><path d="M3 24L1 29L9 26Z" fill="#6a5ad0"/><rect x="7" y="9.5" width="11" height="10" rx="2" fill="#fff"/><path d="M18.5 13L23 10V19L18.5 16Z" fill="#fff"/></svg>
<svg style="left:671px;top:1035px" width="28" height="29" viewBox="0 0 28 29"><path d="M0 3L16 0V29L0 26Z" fill="#2b579a"/><rect x="14" y="4" width="13" height="21" fill="#fff" stroke="#2b579a" stroke-width="1.5"/><path d="M17 9H25M17 13H25M17 17H25M17 21H25" stroke="#2b579a" stroke-width="1.6"/><text x="2" y="19.5" font-size="11" font-family="Liberation Sans" font-weight="bold" fill="#fff">W</text></svg>
<svg style="left:725px;top:1035px" width="30" height="30" viewBox="0 0 30 30"><rect x="0" y="0" width="30" height="30" rx="3" fill="url(#msg740)"/><defs><linearGradient id="msg740" x1="0" y1="0" x2="0" y2="1"><stop offset="0" stop-color="#6a6a6a"/><stop offset="0.55" stop-color="#1a1a1a"/><stop offset="1" stop-color="#000"/></linearGradient></defs><path d="M7.5 27V19.5L11 18V27Z" fill="#f07a20"/><path d="M13.5 27V13L17 11.5V27Z" fill="#f07a20"/><path d="M19.5 27V5.5L23.5 3.5V27Z" fill="#f07a20"/></svg>
<svg style="left:1330px;top:1035px" width="30" height="30" viewBox="0 0 30 30"><rect x="0" y="0" width="30" height="30" rx="3" fill="url(#msg1345)"/><defs><linearGradient id="msg1345" x1="0" y1="0" x2="0" y2="1"><stop offset="0" stop-color="#6a6a6a"/><stop offset="0.55" stop-color="#1a1a1a"/><stop offset="1" stop-color="#000"/></linearGradient></defs><path d="M7.5 27V19.5L11 18V27Z" fill="#f07a20"/><path d="M13.5 27V13L17 11.5V27Z" fill="#f07a20"/><path d="M19.5 27V5.5L23.5 3.5V27Z" fill="#f07a20"/></svg>
<svg style="left:781px;top:1036px" width="30" height="27" viewBox="0 0 30 27"><path d="M0 3H11L14 6H30V27H0Z" fill="#e8a820"/><rect x="0" y="8" width="30" height="19" fill="#ffd34a"/><rect x="8" y="19" width="14" height="6" rx="1" fill="#1c7ed8"/></svg>
<svg style="left:836px;top:1036px" width="28" height="28" viewBox="0 0 28 28"><circle cx="14" cy="14" r="13.5" fill="#db4437"/><path d="M14 14L2.3 7.2A13.5 13.5 0 0 0 14 27.5Z" fill="#0f9d58"/><path d="M14 14L14 27.5A13.5 13.5 0 0 0 25.7 7.2Z" fill="#ffcd40"/><path d="M14 14L25.7 7.2A13.5 13.5 0 0 0 2.3 7.2Z" fill="#db4437"/><circle cx="14" cy="14" r="6.2" fill="#fff"/><circle cx="14" cy="14" r="4.8" fill="#4285f4"/></svg>
<svg style="left:851px;top:1029px" width="20" height="20" viewBox="0 0 20 20"><circle cx="10" cy="10" r="9.5" fill="#e8600a"/><text x="10" y="14.5" font-size="12" text-anchor="middle" font-family="Liberation Sans" font-weight="bold" fill="#fff">N</text></svg>
<svg style="left:1166px;top:1036px" width="28" height="28" viewBox="0 0 28 28"><circle cx="14" cy="14" r="13.5" fill="#db4437"/><path d="M14 14L2.3 7.2A13.5 13.5 0 0 0 14 27.5Z" fill="#0f9d58"/><path d="M14 14L14 27.5A13.5 13.5 0 0 0 25.7 7.2Z" fill="#ffcd40"/><path d="M14 14L25.7 7.2A13.5 13.5 0 0 0 2.3 7.2Z" fill="#db4437"/><circle cx="14" cy="14" r="6.2" fill="#fff"/><circle cx="14" cy="14" r="4.8" fill="#4285f4"/></svg>
<svg style="left:891px;top:1035px" width="28" height="29" viewBox="0 0 28 29"><rect x="12" y="4" width="15" height="21" fill="#fff" stroke="#d24726" stroke-width="1.5"/><path d="M0 3L16 0V29L0 26Z" fill="#d24726"/><text x="2.5" y="19.5" font-size="12" font-family="Liberation Sans" font-weight="bold" fill="#fff">P</text><path d="M18 9H24M18 13H24M18 17H24" stroke="#d24726" stroke-width="1.5"/></svg>
<svg style="left:946px;top:1034px" width="28" height="30" viewBox="0 0 28 30"><path d="M11 2H17L25 25H3Z" fill="#ff8800"/><path d="M9 11H19L20 15H8ZM6.5 19H21.5L23 24H5Z" fill="#fff"/><rect x="1" y="25" width="26" height="4" rx="1" fill="#ff8800"/></svg>
<svg style="left:1001px;top:1035px" width="29" height="29" viewBox="0 0 29 29"><circle cx="14.5" cy="14.5" r="14" fill="#1d8ae0"/><path d="M3 18Q5 6 16 6Q26 7 26 15Q26 19 20 19H11Q12 24 18 25Q10 28 5 23Z" fill="#36c8a8"/><path d="M11 16Q12 10 18 11Q22 12 21 16Z" fill="#1d8ae0"/></svg>
<svg style="left:1056px;top:1035px" width="28" height="29" viewBox="0 0 28 29"><rect x="12" y="4" width="15" height="21" fill="#fff" stroke="#3955a3" stroke-width="1.5"/><path d="M0 3L16 0V29L0 26Z" fill="#3955a3"/><text x="2.5" y="19.5" font-size="12" font-family="Liberation Sans" font-weight="bold" fill="#fff">V</text><rect x="19" y="9" width="5" height="5" fill="#3955a3"/></svg>
<svg style="left:1111px;top:1035px" width="28" height="29" viewBox="0 0 28 29"><rect x="12" y="4" width="15" height="21" fill="#fff" stroke="#1d7044" stroke-width="1.5"/><path d="M0 3L16 0V29L0 26Z" fill="#1d7044"/><text x="2.5" y="19.5" font-size="12" font-family="Liberation Sans" font-weight="bold" fill="#fff">X</text><path d="M18 9H24M18 13H24M18 17H24M18 21H24" stroke="#1d7044" stroke-width="1.5"/></svg>
<svg style="left:1222px;top:1034px" width="26" height="31" viewBox="0 0 26 31"><rect x="0.5" y="0.5" width="25" height="30" rx="2" fill="#8a9aa8"/><rect x="3" y="3" width="20" height="6" fill="#cfe0ee"/><rect x="3" y="11" width="4.5" height="4" fill="#f0f4f8"/><rect x="3" y="15.9" width="4.5" height="4" fill="#f0f4f8"/><rect x="3" y="20.8" width="4.5" height="4" fill="#f0f4f8"/><rect x="3" y="25.7" width="4.5" height="4" fill="#f0f4f8"/><rect x="8.2" y="11" width="4.5" height="4" fill="#f0f4f8"/><rect x="8.2" y="15.9" width="4.5" height="4" fill="#f0f4f8"/><rect x="8.2" y="20.8" width="4.5" height="4" fill="#f0f4f8"/><rect x="8.2" y="25.7" width="4.5" height="4" fill="#f0f4f8"/><rect x="13.4" y="11" width="4.5" height="4" fill="#f0f4f8"/><rect x="13.4" y="15.9" width="4.5" height="4" fill="#f0f4f8"/><rect x="13.4" y="20.8" width="4.5" height="4" fill="#f0f4f8"/><rect x="13.4" y="25.7" width="4.5" height="4" fill="#f0f4f8"/><rect x="18.6" y="11" width="4.5" height="4" fill="#f0f4f8"/><rect x="18.6" y="15.9" width="4.5" height="4" fill="#f0f4f8"/><rect x="18.6" y="20.8" width="4.5" height="4" fill="#f0f4f8"/><rect x="18.6" y="25.7" width="4.5" height="4" fill="#f0f4f8"/></svg>
<svg style="left:1276px;top:1035px" width="29" height="29" viewBox="0 0 29 29"><rect x="0" y="0" width="29" height="29" rx="2" fill="#1a8a8e"/><path d="M9 24H20L18.5 19H10.5Z" fill="#fff"/><path d="M8 10Q8 6 11 7Q14.5 3 18 7Q21 6 21 10L19 19H10Z" fill="#fff" stroke="#123" stroke-width="0.8"/><path d="M14.5 1V6M12.5 3H16.5" stroke="#fff" stroke-width="1.6"/><rect x="7" y="24" width="15" height="3" fill="#fff"/></svg>
<svg style="left:1385px;top:1035px" width="30" height="30" viewBox="0 0 30 30"><rect x="1" y="1" width="28" height="28" rx="2" fill="none" stroke="#a0182a" stroke-width="1.6"/><text x="15" y="24" font-size="13" text-anchor="middle" font-family="Liberation Sans" fill="#a0182a">Pro</text><circle cx="22" cy="6" r="1.5" fill="#a0182a"/></svg>
<div class="r" style="left:1322.00px;top:1025.00px;width:47.00px;height:48.00px;background:rgba(255,255,255,0.07);border-radius:4px;"></div>
<div class="r" style="left:681.50px;top:1071.00px;width:7.00px;height:3.00px;background:#9a9a9e;border-radius:2px;"></div>
<div class="r" style="left:846.50px;top:1071.00px;width:7.00px;height:3.00px;background:#9a9a9e;border-radius:2px;"></div>
<div class="r" style="left:1121.50px;top:1071.00px;width:7.00px;height:3.00px;background:#9a9a9e;border-radius:2px;"></div>
<div class="r" style="left:1231.50px;top:1071.00px;width:7.00px;height:3.00px;background:#9a9a9e;border-radius:2px;"></div>
<div class="r" style="left:1396.50px;top:1071.00px;width:7.00px;height:3.00px;background:#9a9a9e;border-radius:2px;"></div>
<div class="r" style="left:1336.00px;top:1071.00px;width:18.00px;height:3.00px;background:#5cc4f6;border-radius:2px;"></div>
<svg style="left:1658px;top:1043px" width="16" height="10" viewBox="0 0 16 10"><path d="M1 8.5L8 1.5L15 8.5" stroke="#e8e8e8" stroke-width="1.4" fill="none"/></svg>
<svg style="left:1685px;top:1041px" width="22" height="20" viewBox="0 0 22 20"><ellipse cx="9" cy="9" rx="8" ry="6.5" fill="#c8c8c8"/><circle cx="11" cy="6" r="5" fill="#d8d8d8"/><circle cx="14" cy="14" r="5.5" fill="#e02030"/><path d="M11.8 11.8L16.2 16.2M16.2 11.8L11.8 16.2" stroke="#fff" stroke-width="1.3"/></svg>
<svg style="left:1721px;top:1041px" width="21" height="17" viewBox="0 0 21 17"><path d="M1.5 6Q10.5 -2 19.5 6" stroke="#f0f0f0" stroke-width="1.8" fill="none"/><path d="M4.5 9Q10.5 3.5 16.5 9" stroke="#f0f0f0" stroke-width="1.8" fill="none"/><path d="M7.5 12Q10.5 9.5 13.5 12" stroke="#f0f0f0" stroke-width="1.8" fill="none"/><circle cx="10.5" cy="15" r="1.5" fill="#f0f0f0"/></svg>
<svg style="left:1750px;top:1041px" width="22" height="18" viewBox="0 0 22 18"><path d="M1.5 6H5L10 2V16L5 12H1.5Z" fill="none" stroke="#f0f0f0" stroke-width="1.4"/><path d="M13 6Q15 9 13 12M16 4Q19.5 9 16 14M19 2Q23.5 9 19 16" stroke="#f0f0f0" stroke-width="1.4" fill="none"/></svg>
<svg style="left:1780px;top:1040px" width="22" height="20" viewBox="0 0 22 20"><path d="M3 2V6M6 2V6M1.5 6H7.5V9Q7.5 11 4.5 11Q1.5 11 1.5 9Z" stroke="#f0f0f0" stroke-width="1.2" fill="#f0f0f0"/><path d="M4.5 11V18" stroke="#f0f0f0" stroke-width="1.4"/><rect x="7" y="6" width="12" height="10" rx="1.5" fill="none" stroke="#f0f0f0" stroke-width="1.4"/><rect x="19" y="9" width="2" height="4" fill="#f0f0f0"/><rect x="9" y="8" width="4" height="6" fill="#f0f0f0"/></svg>
<div class="t" style="left:1862.00px;top:1031.66px;font-size:14.50px;line-height:16.67px;color:#ffffff;transform:scaleX(0.9094);transform-origin:0 0;"><span style="color:#ffffff">21:52</span></div>
<div class="t" style="left:1821.00px;top:1051.66px;font-size:14.50px;line-height:16.67px;color:#ffffff;transform:scaleX(1.0197);transform-origin:0 0;"><span style="color:#ffffff">21/09/2022</span></div>
</body></html>
